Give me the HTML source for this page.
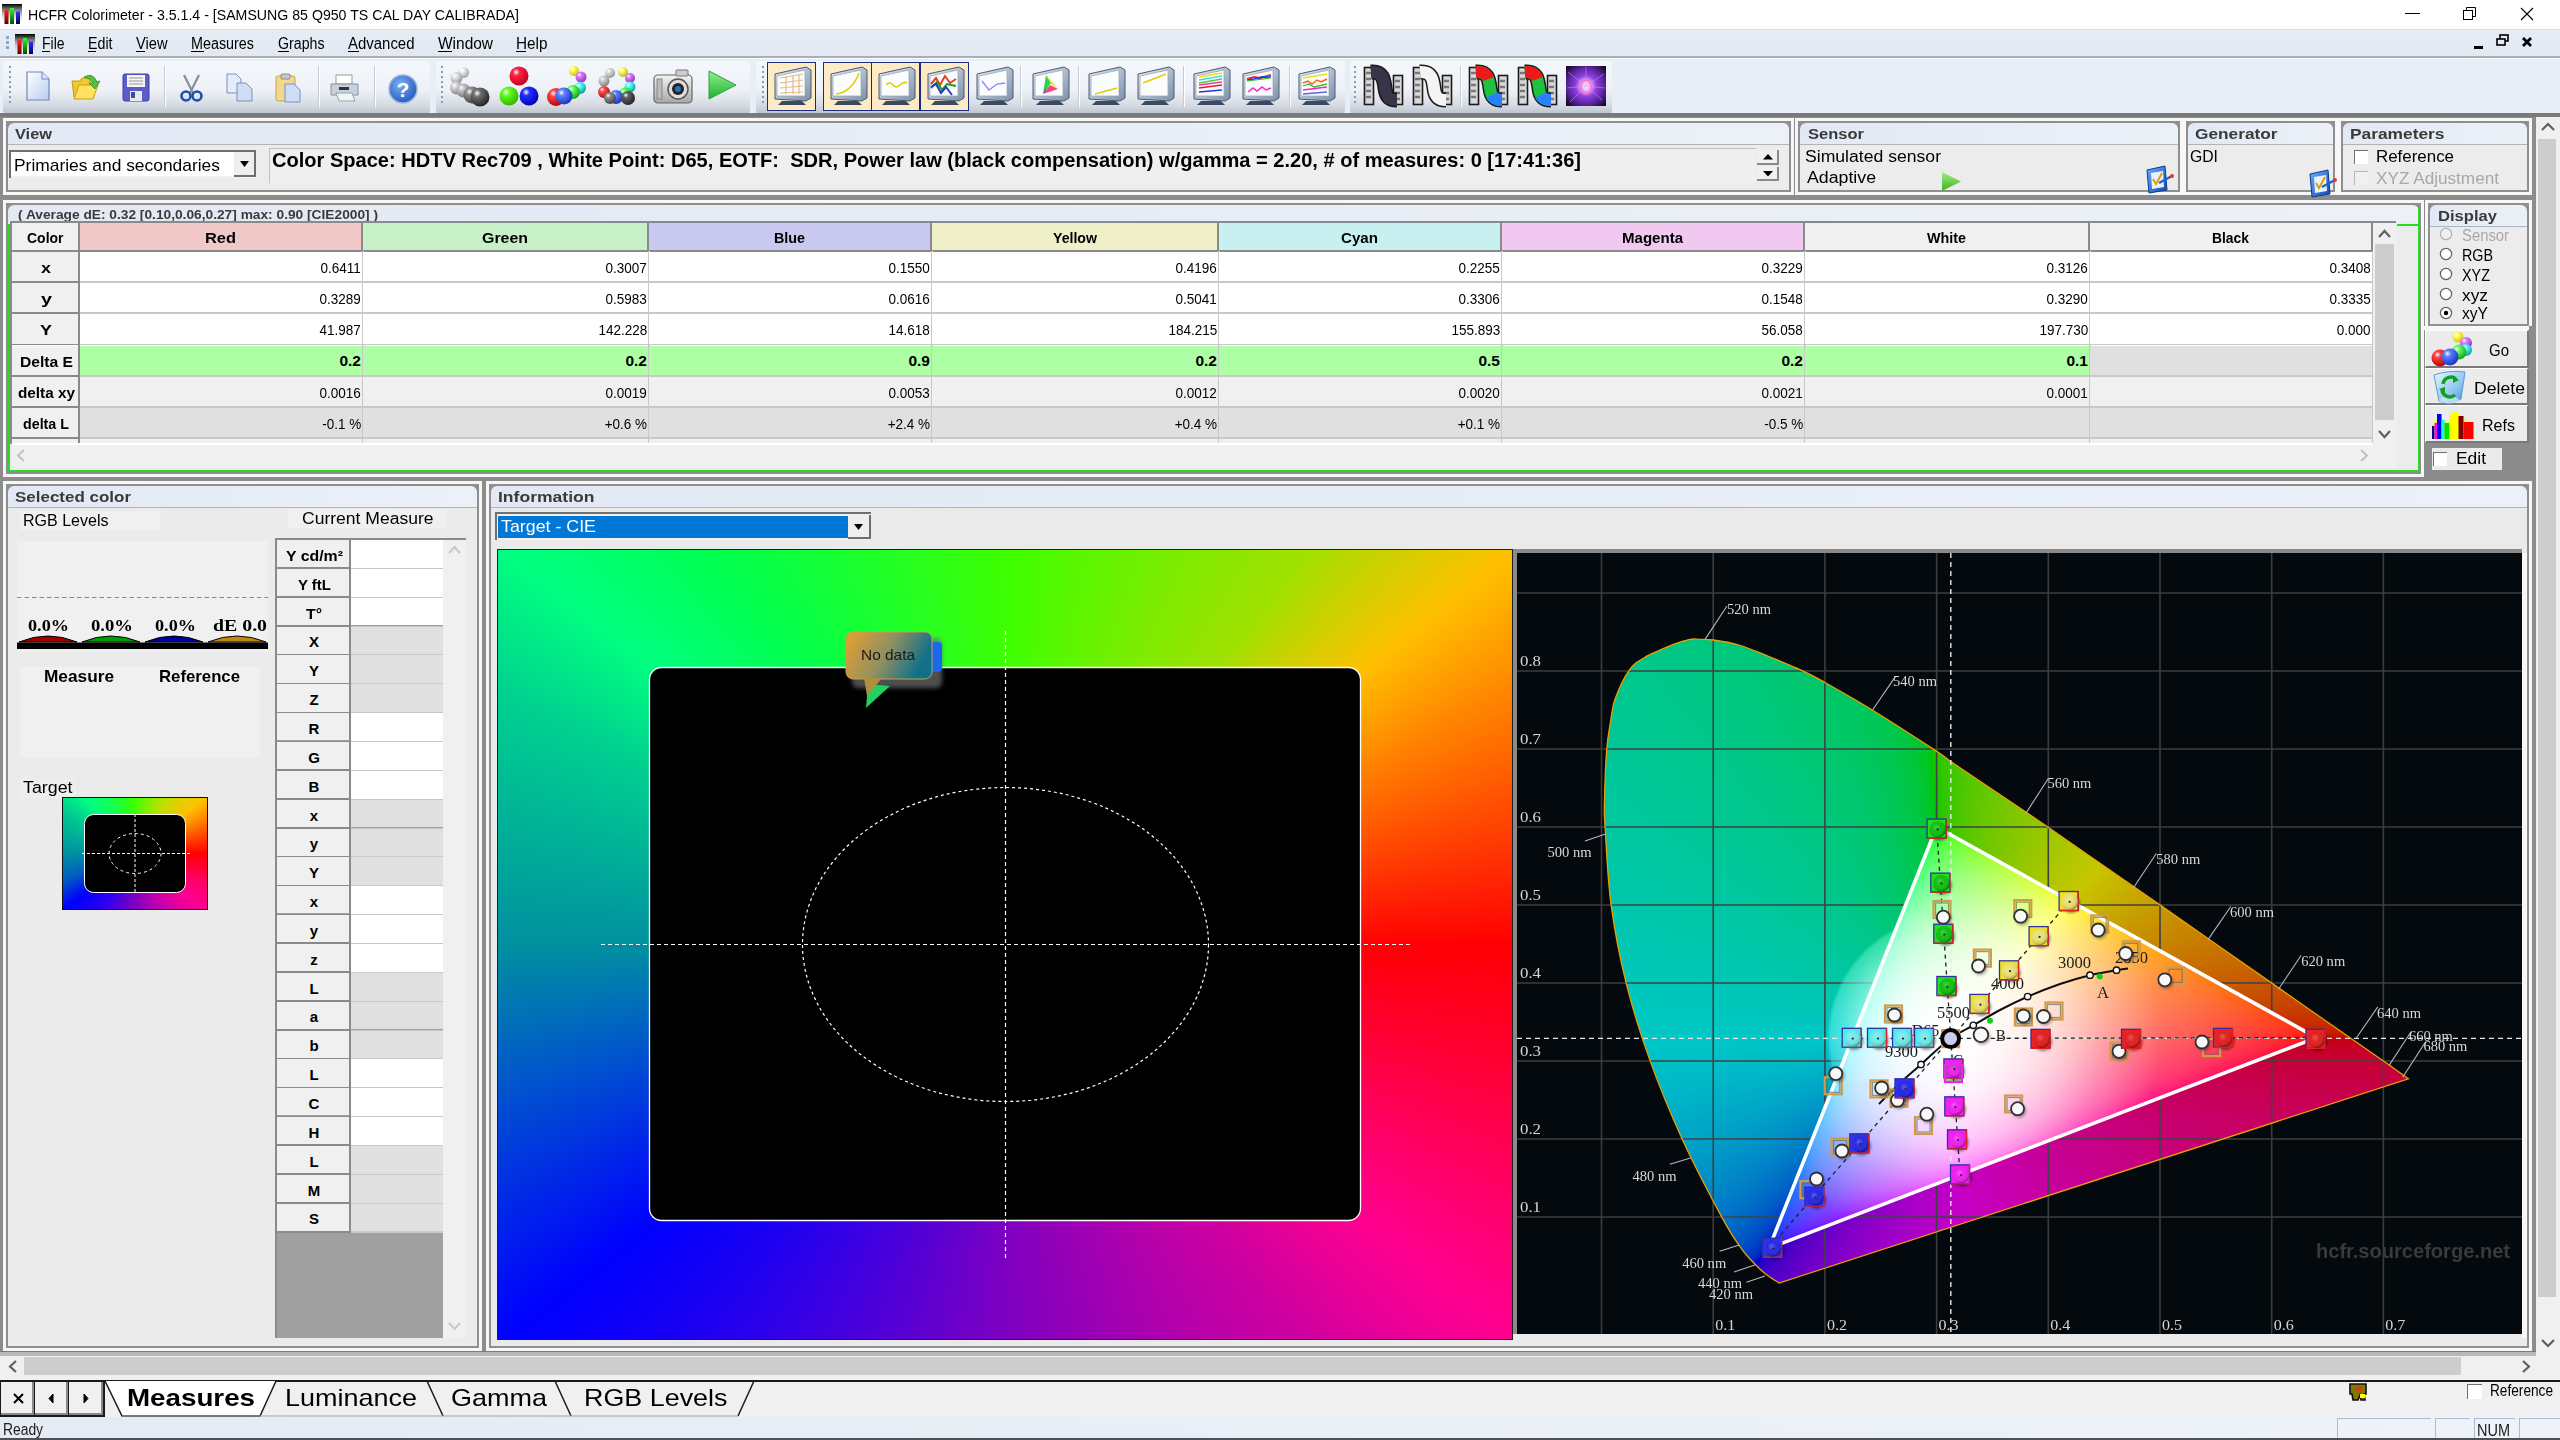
<!DOCTYPE html>
<html><head><meta charset="utf-8"><title>HCFR Colorimeter</title>
<style>
html,body{margin:0;padding:0;}
body{width:2560px;height:1440px;overflow:hidden;position:relative;background:#F0F0F0;font-family:"Liberation Sans",sans-serif;}
.a{position:absolute;}
.t{position:absolute;white-space:nowrap;line-height:1;}
svg.a{overflow:visible;}
</style></head><body>
<div class="a" style="left:0px;top:0px;width:2560px;height:29px;background:#FFFFFF;"></div>
<svg class="a" style="left:2px;top:4px" width="20" height="20" viewBox="0 0 20 20"><defs><linearGradient id="aig2" x1="0" y1="0" x2="0" y2="1"><stop offset="0" stop-color="#000"/><stop offset="1" stop-color="#fff" stop-opacity="0.0"/></linearGradient><linearGradient id="air2" x1="0" y1="0" x2="0" y2="1"><stop offset="0" stop-color="#ff2020"/><stop offset="1" stop-color="#600000"/></linearGradient><linearGradient id="aigg2" x1="0" y1="0" x2="0" y2="1"><stop offset="0" stop-color="#30ff30"/><stop offset="1" stop-color="#005000"/></linearGradient><linearGradient id="aib2" x1="0" y1="0" x2="0" y2="1"><stop offset="0" stop-color="#3030ff"/><stop offset="1" stop-color="#000060"/></linearGradient></defs><rect x="0" y="0" width="20" height="20" fill="url(#aig2)"/><rect x="2.5" y="6" width="4" height="14" fill="url(#air2)"/><rect x="8" y="4" width="4" height="16" fill="url(#aigg2)"/><rect x="14" y="7.5" width="4" height="12.5" fill="url(#aib2)"/></svg>
<div id="t1" class="t" style="left:27.5px;top:7.3px;font-size:15.00px;color:#000;font-weight:normal;font-family:'Liberation Sans', sans-serif;transform:scaleX(0.9434);transform-origin:left;">HCFR Colorimeter - 3.5.1.4 - [SAMSUNG 85 Q950 TS CAL DAY CALIBRADA]</div>
<svg class="a" style="left:2390px;top:0px" width="170" height="29"><line x1="15" y1="13.5" x2="30" y2="13.5" stroke="#000" stroke-width="1"/><rect x="73.5" y="10.5" width="9" height="9" fill="none" stroke="#000"/><path d="M76.5 10.5 V7.5 H85.5 V16.5 H82.5" fill="none" stroke="#000"/><path d="M131 8 L143 20 M143 8 L131 20" stroke="#000" stroke-width="1.1"/></svg>
<div class="a" style="left:0px;top:29px;width:2560px;height:28px;background:linear-gradient(#E6ECF5,#E3E9F3);"></div>
<div class="a" style="left:0px;top:29px;width:2560px;height:1px;background:#D5DCE6;"></div>
<div class="a" style="left:0px;top:56px;width:2560px;height:2px;background:#A9AFB8;"></div>
<div class="a" style="left:0px;top:58px;width:2560px;height:1px;background:#FFFFFF;"></div>
<div class="a" style="left:6px;top:36px;width:3px;height:3px;background:#8FA6C4;"></div>
<div class="a" style="left:6px;top:41px;width:3px;height:3px;background:#8FA6C4;"></div>
<div class="a" style="left:6px;top:46px;width:3px;height:3px;background:#8FA6C4;"></div>
<svg class="a" style="left:15px;top:34px" width="20" height="20" viewBox="0 0 20 20"><defs><linearGradient id="aig15" x1="0" y1="0" x2="0" y2="1"><stop offset="0" stop-color="#000"/><stop offset="1" stop-color="#fff" stop-opacity="0.0"/></linearGradient><linearGradient id="air15" x1="0" y1="0" x2="0" y2="1"><stop offset="0" stop-color="#ff2020"/><stop offset="1" stop-color="#600000"/></linearGradient><linearGradient id="aigg15" x1="0" y1="0" x2="0" y2="1"><stop offset="0" stop-color="#30ff30"/><stop offset="1" stop-color="#005000"/></linearGradient><linearGradient id="aib15" x1="0" y1="0" x2="0" y2="1"><stop offset="0" stop-color="#3030ff"/><stop offset="1" stop-color="#000060"/></linearGradient></defs><rect x="0" y="0" width="20" height="20" fill="url(#aig15)"/><rect x="2.5" y="6" width="4" height="14" fill="url(#air15)"/><rect x="8" y="4" width="4" height="16" fill="url(#aigg15)"/><rect x="14" y="7.5" width="4" height="12.5" fill="url(#aib15)"/></svg>
<div id="t2" class="t" style="left:41.5px;top:36.0px;font-size:16.00px;color:#000;font-weight:normal;font-family:'Liberation Sans', sans-serif;transform:scaleX(0.8727);transform-origin:left;">File</div>
<div class="a" style="left:41.5px;top:50.5px;width:8.0px;height:1.5px;background:#000;"></div>
<div id="t3" class="t" style="left:88.0px;top:36.0px;font-size:16.00px;color:#000;font-weight:normal;font-family:'Liberation Sans', sans-serif;transform:scaleX(0.8884);transform-origin:left;">Edit</div>
<div class="a" style="left:88px;top:50.5px;width:8px;height:1.5px;background:#000;"></div>
<div id="t4" class="t" style="left:136.0px;top:36.0px;font-size:16.00px;color:#000;font-weight:normal;font-family:'Liberation Sans', sans-serif;transform:scaleX(0.9159);transform-origin:left;">View</div>
<div class="a" style="left:136px;top:50.5px;width:9px;height:1.5px;background:#000;"></div>
<div id="t5" class="t" style="left:191.0px;top:36.0px;font-size:16.00px;color:#000;font-weight:normal;font-family:'Liberation Sans', sans-serif;transform:scaleX(0.8968);transform-origin:left;">Measures</div>
<div class="a" style="left:191px;top:50.5px;width:13px;height:1.5px;background:#000;"></div>
<div id="t6" class="t" style="left:277.5px;top:36.0px;font-size:16.00px;color:#000;font-weight:normal;font-family:'Liberation Sans', sans-serif;transform:scaleX(0.8862);transform-origin:left;">Graphs</div>
<div class="a" style="left:277.5px;top:50.5px;width:11.0px;height:1.5px;background:#000;"></div>
<div id="t7" class="t" style="left:347.5px;top:36.0px;font-size:16.00px;color:#000;font-weight:normal;font-family:'Liberation Sans', sans-serif;transform:scaleX(0.9344);transform-origin:left;">Advanced</div>
<div class="a" style="left:347.5px;top:50.5px;width:11.0px;height:1.5px;background:#000;"></div>
<div id="t8" class="t" style="left:437.5px;top:36.0px;font-size:16.00px;color:#000;font-weight:normal;font-family:'Liberation Sans', sans-serif;transform:scaleX(0.9665);transform-origin:left;">Window</div>
<div class="a" style="left:437.5px;top:50.5px;width:14.0px;height:1.5px;background:#000;"></div>
<div id="t9" class="t" style="left:516.0px;top:36.0px;font-size:16.00px;color:#000;font-weight:normal;font-family:'Liberation Sans', sans-serif;transform:scaleX(0.9573);transform-origin:left;">Help</div>
<div class="a" style="left:516px;top:50.5px;width:10px;height:1.5px;background:#000;"></div>
<svg class="a" style="left:2460px;top:30px" width="100" height="27"><rect x="14" y="16" width="9" height="3" fill="#000"/><rect x="40" y="5" width="8" height="6" fill="none" stroke="#000" stroke-width="1.6"/><rect x="37" y="9" width="8" height="6" fill="#E6ECF5" stroke="#000" stroke-width="1.6"/><path d="M63 8 L71 16 M71 8 L63 16" stroke="#000" stroke-width="2.8"/></svg>
<div class="a" style="left:0px;top:59px;width:2560px;height:54px;background:#E8EDF6;"></div>
<div class="a" style="left:3px;top:61px;width:427px;height:52px;background:linear-gradient(#F4F7FB 0%,#EEF2F8 55%,#D6DBE3 85%,#BFC6D0 100%);border-radius:4px 4px 2px 2px;"></div>
<div class="a" style="left:436px;top:61px;width:314px;height:52px;background:linear-gradient(#F4F7FB 0%,#EEF2F8 55%,#D6DBE3 85%,#BFC6D0 100%);border-radius:4px 4px 2px 2px;"></div>
<div class="a" style="left:756px;top:61px;width:589px;height:52px;background:linear-gradient(#F4F7FB 0%,#EEF2F8 55%,#D6DBE3 85%,#BFC6D0 100%);border-radius:4px 4px 2px 2px;"></div>
<div class="a" style="left:1350px;top:61px;width:262px;height:52px;background:linear-gradient(#F4F7FB 0%,#EEF2F8 55%,#D6DBE3 85%,#BFC6D0 100%);border-radius:4px 4px 2px 2px;"></div>
<div class="a" style="left:9px;top:66px;width:2px;height:2px;background:#7F9DBF;"></div>
<div class="a" style="left:9px;top:71px;width:2px;height:2px;background:#7F9DBF;"></div>
<div class="a" style="left:9px;top:76px;width:2px;height:2px;background:#7F9DBF;"></div>
<div class="a" style="left:9px;top:81px;width:2px;height:2px;background:#7F9DBF;"></div>
<div class="a" style="left:9px;top:86px;width:2px;height:2px;background:#7F9DBF;"></div>
<div class="a" style="left:9px;top:91px;width:2px;height:2px;background:#7F9DBF;"></div>
<div class="a" style="left:9px;top:96px;width:2px;height:2px;background:#7F9DBF;"></div>
<div class="a" style="left:9px;top:101px;width:2px;height:2px;background:#7F9DBF;"></div>
<div class="a" style="left:441px;top:66px;width:2px;height:2px;background:#7F9DBF;"></div>
<div class="a" style="left:441px;top:71px;width:2px;height:2px;background:#7F9DBF;"></div>
<div class="a" style="left:441px;top:76px;width:2px;height:2px;background:#7F9DBF;"></div>
<div class="a" style="left:441px;top:81px;width:2px;height:2px;background:#7F9DBF;"></div>
<div class="a" style="left:441px;top:86px;width:2px;height:2px;background:#7F9DBF;"></div>
<div class="a" style="left:441px;top:91px;width:2px;height:2px;background:#7F9DBF;"></div>
<div class="a" style="left:441px;top:96px;width:2px;height:2px;background:#7F9DBF;"></div>
<div class="a" style="left:441px;top:101px;width:2px;height:2px;background:#7F9DBF;"></div>
<div class="a" style="left:762px;top:66px;width:2px;height:2px;background:#7F9DBF;"></div>
<div class="a" style="left:762px;top:71px;width:2px;height:2px;background:#7F9DBF;"></div>
<div class="a" style="left:762px;top:76px;width:2px;height:2px;background:#7F9DBF;"></div>
<div class="a" style="left:762px;top:81px;width:2px;height:2px;background:#7F9DBF;"></div>
<div class="a" style="left:762px;top:86px;width:2px;height:2px;background:#7F9DBF;"></div>
<div class="a" style="left:762px;top:91px;width:2px;height:2px;background:#7F9DBF;"></div>
<div class="a" style="left:762px;top:96px;width:2px;height:2px;background:#7F9DBF;"></div>
<div class="a" style="left:762px;top:101px;width:2px;height:2px;background:#7F9DBF;"></div>
<div class="a" style="left:1354px;top:66px;width:2px;height:2px;background:#7F9DBF;"></div>
<div class="a" style="left:1354px;top:71px;width:2px;height:2px;background:#7F9DBF;"></div>
<div class="a" style="left:1354px;top:76px;width:2px;height:2px;background:#7F9DBF;"></div>
<div class="a" style="left:1354px;top:81px;width:2px;height:2px;background:#7F9DBF;"></div>
<div class="a" style="left:1354px;top:86px;width:2px;height:2px;background:#7F9DBF;"></div>
<div class="a" style="left:1354px;top:91px;width:2px;height:2px;background:#7F9DBF;"></div>
<div class="a" style="left:1354px;top:96px;width:2px;height:2px;background:#7F9DBF;"></div>
<div class="a" style="left:1354px;top:101px;width:2px;height:2px;background:#7F9DBF;"></div>
<div class="a" style="left:164px;top:66px;width:1px;height:41px;background:#C5CBD5;"></div>
<div class="a" style="left:165px;top:66px;width:1px;height:41px;background:#FFFFFF;"></div>
<div class="a" style="left:318px;top:66px;width:1px;height:41px;background:#C5CBD5;"></div>
<div class="a" style="left:319px;top:66px;width:1px;height:41px;background:#FFFFFF;"></div>
<div class="a" style="left:374px;top:66px;width:1px;height:41px;background:#C5CBD5;"></div>
<div class="a" style="left:375px;top:66px;width:1px;height:41px;background:#FFFFFF;"></div>
<div class="a" style="left:1020px;top:66px;width:1px;height:41px;background:#C5CBD5;"></div>
<div class="a" style="left:1021px;top:66px;width:1px;height:41px;background:#FFFFFF;"></div>
<div class="a" style="left:1078px;top:66px;width:1px;height:41px;background:#C5CBD5;"></div>
<div class="a" style="left:1079px;top:66px;width:1px;height:41px;background:#FFFFFF;"></div>
<div class="a" style="left:1183px;top:66px;width:1px;height:41px;background:#C5CBD5;"></div>
<div class="a" style="left:1184px;top:66px;width:1px;height:41px;background:#FFFFFF;"></div>
<div class="a" style="left:1289px;top:66px;width:1px;height:41px;background:#C5CBD5;"></div>
<div class="a" style="left:1290px;top:66px;width:1px;height:41px;background:#FFFFFF;"></div>
<div class="a" style="left:1460px;top:66px;width:1px;height:41px;background:#C5CBD5;"></div>
<div class="a" style="left:1461px;top:66px;width:1px;height:41px;background:#FFFFFF;"></div>
<svg class="a" style="left:26px;top:71px;" width="24" height="30" viewBox="0 0 24 30"><defs><linearGradient id="ndg" x1="0" y1="0" x2="1" y2="1"><stop offset="0" stop-color="#fff"/><stop offset="1" stop-color="#b8ccf0"/></linearGradient></defs><path d="M1 1 H16 L23 8 V29 H1 Z" fill="url(#ndg)" stroke="#7088b8" stroke-width="1.2"/><path d="M16 1 V8 H23" fill="#dfe8f8" stroke="#7088b8" stroke-width="1"/></svg>
<svg class="a" style="left:71px;top:73px;" width="31" height="28" viewBox="0 0 31 28"><path d="M1 8 H9 L11 5 H19 V24 H3 Z" fill="#f0c830" stroke="#c89a10"/><path d="M3 26 L8 12 H27 L22 26 Z" fill="#ffe060" stroke="#d0a010"/><path d="M13 4 Q22 -1 26 9 L29 8 L24 16 L18 10 L22 10 Q19 5 13 4 Z" fill="#50c040" stroke="#309020" stroke-width="0.8"/></svg>
<svg class="a" style="left:122px;top:73px;" width="28" height="30" viewBox="0 0 28 30"><rect x="1" y="1" width="26" height="27" rx="2" fill="#5a5ec8" stroke="#3c40a0"/><rect x="5" y="2" width="18" height="12" fill="#f4f4f4"/><line x1="7" y1="5" x2="21" y2="5" stroke="#999"/><line x1="7" y1="8" x2="21" y2="8" stroke="#999"/><line x1="7" y1="11" x2="21" y2="11" stroke="#999"/><rect x="8" y="18" width="12" height="10" fill="#e8e8e8"/><rect x="9" y="19" width="4" height="6" fill="#4048a8"/></svg>
<svg class="a" style="left:180px;top:74px;" width="23" height="28" viewBox="0 0 23 28"><path d="M4 1 L13 19 M19 1 L10 19" stroke="#8a8f9a" stroke-width="2.2"/><circle cx="6" cy="22" r="4.5" fill="none" stroke="#1a4fb0" stroke-width="2.6"/><circle cx="17" cy="22" r="4.5" fill="none" stroke="#1a4fb0" stroke-width="2.6"/></svg>
<svg class="a" style="left:226px;top:73px;" width="28" height="30" viewBox="0 0 28 30"><path d="M1 1 H10 L15 6 V20 H1 Z" fill="#e4ecfa" stroke="#7a90c0"/><path d="M11 10 H20 L26 16 V28 H11 Z" fill="#cfdcf6" stroke="#7a90c0"/></svg>
<svg class="a" style="left:275px;top:73px;" width="27" height="30" viewBox="0 0 27 30"><rect x="1" y="3" width="19" height="25" rx="2" fill="#f0d890" stroke="#c8a840"/><rect x="6" y="1" width="9" height="5" rx="1" fill="#c8c8c8" stroke="#888"/><path d="M10 11 H19 L25 17 V29 H10 Z" fill="#cfdcf6" stroke="#7a90c0"/></svg>
<svg class="a" style="left:329px;top:74px;" width="31" height="28" viewBox="0 0 31 28"><rect x="7" y="1" width="16" height="9" fill="#fff" stroke="#999"/><path d="M2 10 H29 V21 H2 Z" fill="#c8d0dc" stroke="#8890a0"/><rect x="10" y="13" width="10" height="3" fill="#333"/><path d="M7 19 H23 L26 27 H10 Z" fill="#f4f4f4" stroke="#8ab"/></svg>
<svg class="a" style="left:388px;top:74px;" width="31" height="30" viewBox="0 0 31 30"><defs><radialGradient id="hg" cx="0.4" cy="0.35" r="0.7"><stop offset="0" stop-color="#7ab0f0"/><stop offset="1" stop-color="#1f58c0"/></radialGradient></defs><circle cx="15" cy="15" r="14" fill="url(#hg)" stroke="#9fb4d8" stroke-width="1.5"/><text x="15" y="23" text-anchor="middle" font-family="Liberation Sans" font-weight="bold" font-size="21" fill="#fff">?</text></svg>
<svg class="a" style="left:449px;top:66px;" width="41" height="40" viewBox="0 0 41 40"><defs><radialGradient id="ball1" cx="0.35" cy="0.3" r="0.75"><stop offset="0" stop-color="#fff"/><stop offset="0.25" stop-color="#f0f0f0"/><stop offset="1" stop-color="#a0a0a0"/></radialGradient></defs><circle cx="14.5" cy="6.5" r="5.5" fill="url(#ball1)"/><defs><radialGradient id="ball2" cx="0.35" cy="0.3" r="0.75"><stop offset="0" stop-color="#fff"/><stop offset="0.25" stop-color="#e8e8e8"/><stop offset="1" stop-color="#909090"/></radialGradient></defs><circle cx="7.5" cy="12" r="6" fill="url(#ball2)"/><defs><radialGradient id="ball3" cx="0.35" cy="0.3" r="0.75"><stop offset="0" stop-color="#fff"/><stop offset="0.25" stop-color="#d8d8d8"/><stop offset="1" stop-color="#808080"/></radialGradient></defs><circle cx="7.5" cy="22" r="6.5" fill="url(#ball3)"/><defs><radialGradient id="ball4" cx="0.35" cy="0.3" r="0.75"><stop offset="0" stop-color="#fff"/><stop offset="0.25" stop-color="#c8c8c8"/><stop offset="1" stop-color="#707070"/></radialGradient></defs><circle cx="14.5" cy="24.5" r="7" fill="url(#ball4)"/><defs><radialGradient id="ball5" cx="0.35" cy="0.3" r="0.75"><stop offset="0" stop-color="#fff"/><stop offset="0.25" stop-color="#909090"/><stop offset="1" stop-color="#404040"/></radialGradient></defs><circle cx="23" cy="29" r="8.5" fill="url(#ball5)"/><defs><radialGradient id="ball6" cx="0.35" cy="0.3" r="0.75"><stop offset="0" stop-color="#fff"/><stop offset="0.25" stop-color="#707070"/><stop offset="1" stop-color="#202020"/></radialGradient></defs><circle cx="31" cy="31" r="9.5" fill="url(#ball6)"/></svg>
<svg class="a" style="left:498px;top:66px;" width="41" height="40" viewBox="0 0 41 40"><defs><radialGradient id="ball7" cx="0.35" cy="0.3" r="0.75"><stop offset="0" stop-color="#fff"/><stop offset="0.25" stop-color="#ff2040"/><stop offset="1" stop-color="#c00020"/></radialGradient></defs><circle cx="21" cy="10" r="9.5" fill="url(#ball7)"/><defs><radialGradient id="ball8" cx="0.35" cy="0.3" r="0.75"><stop offset="0" stop-color="#fff"/><stop offset="0.25" stop-color="#60ff20"/><stop offset="1" stop-color="#30b000"/></radialGradient></defs><circle cx="11" cy="30" r="9.5" fill="url(#ball8)"/><defs><radialGradient id="ball9" cx="0.35" cy="0.3" r="0.75"><stop offset="0" stop-color="#fff"/><stop offset="0.25" stop-color="#2030ff"/><stop offset="1" stop-color="#0000b0"/></radialGradient></defs><circle cx="31" cy="30" r="9.5" fill="url(#ball9)"/></svg>
<svg class="a" style="left:547px;top:66px;" width="41" height="40" viewBox="0 0 41 40"><defs><radialGradient id="ball10" cx="0.35" cy="0.3" r="0.75"><stop offset="0" stop-color="#fff"/><stop offset="0.25" stop-color="#ffff60"/><stop offset="1" stop-color="#d0c000"/></radialGradient></defs><circle cx="27" cy="5" r="5" fill="url(#ball10)"/><defs><radialGradient id="ball11" cx="0.35" cy="0.3" r="0.75"><stop offset="0" stop-color="#fff"/><stop offset="0.25" stop-color="#e080ff"/><stop offset="1" stop-color="#9030c0"/></radialGradient></defs><circle cx="34" cy="11" r="5.5" fill="url(#ball11)"/><defs><radialGradient id="ball12" cx="0.35" cy="0.3" r="0.75"><stop offset="0" stop-color="#fff"/><stop offset="0.25" stop-color="#60ffff"/><stop offset="1" stop-color="#00a0a0"/></radialGradient></defs><circle cx="33" cy="22" r="6" fill="url(#ball12)"/><defs><radialGradient id="ball13" cx="0.35" cy="0.3" r="0.75"><stop offset="0" stop-color="#fff"/><stop offset="0.25" stop-color="#60ff60"/><stop offset="1" stop-color="#10a010"/></radialGradient></defs><circle cx="26" cy="26" r="7" fill="url(#ball13)"/><defs><radialGradient id="ball14" cx="0.35" cy="0.3" r="0.75"><stop offset="0" stop-color="#fff"/><stop offset="0.25" stop-color="#ff4040"/><stop offset="1" stop-color="#b00000"/></radialGradient></defs><circle cx="9" cy="31" r="9" fill="url(#ball14)"/><defs><radialGradient id="ball15" cx="0.35" cy="0.3" r="0.75"><stop offset="0" stop-color="#fff"/><stop offset="0.25" stop-color="#6080ff"/><stop offset="1" stop-color="#1030c0"/></radialGradient></defs><circle cx="17" cy="30" r="8.5" fill="url(#ball15)"/></svg>
<svg class="a" style="left:596px;top:66px;" width="41" height="40" viewBox="0 0 41 40"><defs><radialGradient id="ball16" cx="0.35" cy="0.3" r="0.75"><stop offset="0" stop-color="#fff"/><stop offset="0.25" stop-color="#e0e0e0"/><stop offset="1" stop-color="#909090"/></radialGradient></defs><circle cx="14" cy="7" r="5" fill="url(#ball16)"/><defs><radialGradient id="ball17" cx="0.35" cy="0.3" r="0.75"><stop offset="0" stop-color="#fff"/><stop offset="0.25" stop-color="#ffff80"/><stop offset="1" stop-color="#c0b000"/></radialGradient></defs><circle cx="27" cy="6" r="5" fill="url(#ball17)"/><defs><radialGradient id="ball18" cx="0.35" cy="0.3" r="0.75"><stop offset="0" stop-color="#fff"/><stop offset="0.25" stop-color="#e080ff"/><stop offset="1" stop-color="#9030c0"/></radialGradient></defs><circle cx="34" cy="12" r="5" fill="url(#ball18)"/><defs><radialGradient id="ball19" cx="0.35" cy="0.3" r="0.75"><stop offset="0" stop-color="#fff"/><stop offset="0.25" stop-color="#60ffff"/><stop offset="1" stop-color="#00a0a0"/></radialGradient></defs><circle cx="34" cy="21" r="5.5" fill="url(#ball19)"/><defs><radialGradient id="ball20" cx="0.35" cy="0.3" r="0.75"><stop offset="0" stop-color="#fff"/><stop offset="0.25" stop-color="#d0d0d0"/><stop offset="1" stop-color="#808080"/></radialGradient></defs><circle cx="8" cy="15" r="5.5" fill="url(#ball20)"/><defs><radialGradient id="ball21" cx="0.35" cy="0.3" r="0.75"><stop offset="0" stop-color="#fff"/><stop offset="0.25" stop-color="#ff5050"/><stop offset="1" stop-color="#b00000"/></radialGradient></defs><circle cx="8" cy="26" r="6" fill="url(#ball21)"/><defs><radialGradient id="ball22" cx="0.35" cy="0.3" r="0.75"><stop offset="0" stop-color="#fff"/><stop offset="0.25" stop-color="#60ff60"/><stop offset="1" stop-color="#10a010"/></radialGradient></defs><circle cx="29" cy="28" r="6.5" fill="url(#ball22)"/><defs><radialGradient id="ball23" cx="0.35" cy="0.3" r="0.75"><stop offset="0" stop-color="#fff"/><stop offset="0.25" stop-color="#6080ff"/><stop offset="1" stop-color="#1030c0"/></radialGradient></defs><circle cx="20" cy="31" r="7" fill="url(#ball23)"/><defs><radialGradient id="ball24" cx="0.35" cy="0.3" r="0.75"><stop offset="0" stop-color="#fff"/><stop offset="0.25" stop-color="#606060"/><stop offset="1" stop-color="#202020"/></radialGradient></defs><circle cx="32" cy="32" r="7" fill="url(#ball24)"/><defs><radialGradient id="ball25" cx="0.35" cy="0.3" r="0.75"><stop offset="0" stop-color="#fff"/><stop offset="0.25" stop-color="#909090"/><stop offset="1" stop-color="#404040"/></radialGradient></defs><circle cx="14" cy="32" r="6" fill="url(#ball25)"/></svg>
<svg class="a" style="left:652px;top:67px;" width="42" height="39" viewBox="0 0 42 39"><defs><linearGradient id="camg" x1="0" y1="0" x2="0" y2="1"><stop offset="0" stop-color="#f4f4f4"/><stop offset="1" stop-color="#a8a8a8"/></linearGradient></defs><rect x="2" y="8" width="38" height="28" rx="4" fill="url(#camg)" stroke="#666" stroke-width="1.2"/><rect x="24" y="3" width="12" height="6" rx="1" fill="#ccc" stroke="#777"/><circle cx="26" cy="22" r="10" fill="#ddd" stroke="#555" stroke-width="1.5"/><circle cx="26" cy="22" r="6" fill="#222"/><circle cx="26" cy="22" r="3" fill="#2a6fd0"/><rect x="5" y="12" width="5" height="20" fill="#bbb" stroke="#888"/></svg>
<svg class="a" style="left:707px;top:69px;" width="31" height="32" viewBox="0 0 31 32"><defs><linearGradient id="plg" x1="0" y1="0" x2="0" y2="1"><stop offset="0" stop-color="#8ff08f"/><stop offset="1" stop-color="#20b030"/></linearGradient></defs><path d="M2 2 L29 16 L2 30 Z" fill="url(#plg)" stroke="#30a040" stroke-width="1"/></svg>
<div class="a" style="left:767px;top:62px;width:49px;height:49px;background:#FDEBC6;border:1.5px solid #1c2a80;box-sizing:border-box;"></div>
<svg class="a" style="left:772px;top:66px;" width="40" height="40" viewBox="0 0 40 40"><defs><linearGradient id="mg772" x1="0" y1="0" x2="1" y2="1"><stop offset="0" stop-color="#e8eef6"/><stop offset="1" stop-color="#7a8fa8"/></linearGradient></defs><path d="M3 8 L34 1 L39 4 L39 32 L34 35 L3 33 Z" fill="url(#mg772)" stroke="#4a5a70" stroke-width="1"/><path d="M5 10 L33 4 L33 30 L5 30 Z" fill="#fbfcfe" stroke="#9aa8b8" stroke-width="0.8"/><path d="M10 35 L30 35 L34 39 L6 39 Z" fill="#3a4a60"/><path d="M8 12 L31 8 M8 17 L31 14 M8 22 L31 20 M8 27 L31 26 M14 11 V28 M21 10 V28 M27 9 V28" stroke="#e8b880" stroke-width="1.2"/></svg>
<div class="a" style="left:823px;top:62px;width:49px;height:49px;background:#FDEBC6;border:1.5px solid #1c2a80;box-sizing:border-box;"></div>
<svg class="a" style="left:828px;top:66px;" width="40" height="40" viewBox="0 0 40 40"><defs><linearGradient id="mg828" x1="0" y1="0" x2="1" y2="1"><stop offset="0" stop-color="#e8eef6"/><stop offset="1" stop-color="#7a8fa8"/></linearGradient></defs><path d="M3 8 L34 1 L39 4 L39 32 L34 35 L3 33 Z" fill="url(#mg828)" stroke="#4a5a70" stroke-width="1"/><path d="M5 10 L33 4 L33 30 L5 30 Z" fill="#fbfcfe" stroke="#9aa8b8" stroke-width="0.8"/><path d="M10 35 L30 35 L34 39 L6 39 Z" fill="#3a4a60"/><path d="M8 28 Q24 26 31 7" stroke="#e0d000" stroke-width="1.6" fill="none"/></svg>
<div class="a" style="left:871px;top:62px;width:49px;height:49px;background:#FDEBC6;border:1.5px solid #1c2a80;box-sizing:border-box;"></div>
<svg class="a" style="left:876px;top:66px;" width="40" height="40" viewBox="0 0 40 40"><defs><linearGradient id="mg876" x1="0" y1="0" x2="1" y2="1"><stop offset="0" stop-color="#e8eef6"/><stop offset="1" stop-color="#7a8fa8"/></linearGradient></defs><path d="M3 8 L34 1 L39 4 L39 32 L34 35 L3 33 Z" fill="url(#mg876)" stroke="#4a5a70" stroke-width="1"/><path d="M5 10 L33 4 L33 30 L5 30 Z" fill="#fbfcfe" stroke="#9aa8b8" stroke-width="0.8"/><path d="M10 35 L30 35 L34 39 L6 39 Z" fill="#3a4a60"/><path d="M10 19 Q14 15 17 19 T24 19 T31 17" stroke="#e0d000" stroke-width="1.6" fill="none"/></svg>
<div class="a" style="left:920px;top:62px;width:49px;height:49px;background:#FDEBC6;border:1.5px solid #1c2a80;box-sizing:border-box;"></div>
<svg class="a" style="left:925px;top:66px;" width="40" height="40" viewBox="0 0 40 40"><defs><linearGradient id="mg925" x1="0" y1="0" x2="1" y2="1"><stop offset="0" stop-color="#e8eef6"/><stop offset="1" stop-color="#7a8fa8"/></linearGradient></defs><path d="M3 8 L34 1 L39 4 L39 32 L34 35 L3 33 Z" fill="url(#mg925)" stroke="#4a5a70" stroke-width="1"/><path d="M5 10 L33 4 L33 30 L5 30 Z" fill="#fbfcfe" stroke="#9aa8b8" stroke-width="0.8"/><path d="M10 35 L30 35 L34 39 L6 39 Z" fill="#3a4a60"/><path d="M6 18 L11 12 L15 19 L20 10 L25 17 L31 13" stroke="#e04020" stroke-width="2" fill="none"/><path d="M6 22 L12 16 L17 24 L22 18 L31 20" stroke="#20a020" stroke-width="2" fill="none"/><path d="M6 21 L11 18 L16 27 L21 21 L27 29" stroke="#2040c0" stroke-width="2" fill="none"/></svg>
<svg class="a" style="left:974px;top:66px;" width="40" height="40" viewBox="0 0 40 40"><defs><linearGradient id="mg974" x1="0" y1="0" x2="1" y2="1"><stop offset="0" stop-color="#e8eef6"/><stop offset="1" stop-color="#7a8fa8"/></linearGradient></defs><path d="M3 8 L34 1 L39 4 L39 32 L34 35 L3 33 Z" fill="url(#mg974)" stroke="#4a5a70" stroke-width="1"/><path d="M5 10 L33 4 L33 30 L5 30 Z" fill="#fbfcfe" stroke="#9aa8b8" stroke-width="0.8"/><path d="M10 35 L30 35 L34 39 L6 39 Z" fill="#3a4a60"/><path d="M8 15 L15 24 L23 18 L31 17" stroke="#9a80f0" stroke-width="1.3" fill="none"/></svg>
<svg class="a" style="left:1030px;top:66px;" width="40" height="40" viewBox="0 0 40 40"><defs><linearGradient id="mg1030" x1="0" y1="0" x2="1" y2="1"><stop offset="0" stop-color="#e8eef6"/><stop offset="1" stop-color="#7a8fa8"/></linearGradient></defs><path d="M3 8 L34 1 L39 4 L39 32 L34 35 L3 33 Z" fill="url(#mg1030)" stroke="#4a5a70" stroke-width="1"/><path d="M5 10 L33 4 L33 30 L5 30 Z" fill="#fbfcfe" stroke="#9aa8b8" stroke-width="0.8"/><path d="M10 35 L30 35 L34 39 L6 39 Z" fill="#3a4a60"/><path d="M16 9 L28 23 L13 28 Z" fill="#ffffff"/><path d="M16 9 L21 17 L13 28 Z" fill="#10d040" opacity="0.9"/><path d="M16 9 L28 23 L21 18 Z" fill="#e0e000" opacity="0.9"/><path d="M28 23 L13 28 L20 19 Z" fill="#ff2060" opacity="0.85"/><path d="M13 28 L17 20 L15 26 Z" fill="#3030ff"/></svg>
<svg class="a" style="left:1086px;top:66px;" width="40" height="40" viewBox="0 0 40 40"><defs><linearGradient id="mg1086" x1="0" y1="0" x2="1" y2="1"><stop offset="0" stop-color="#e8eef6"/><stop offset="1" stop-color="#7a8fa8"/></linearGradient></defs><path d="M3 8 L34 1 L39 4 L39 32 L34 35 L3 33 Z" fill="url(#mg1086)" stroke="#4a5a70" stroke-width="1"/><path d="M5 10 L33 4 L33 30 L5 30 Z" fill="#fbfcfe" stroke="#9aa8b8" stroke-width="0.8"/><path d="M10 35 L30 35 L34 39 L6 39 Z" fill="#3a4a60"/><path d="M9 28 L31 22" stroke="#e0d000" stroke-width="1.6"/></svg>
<svg class="a" style="left:1135px;top:66px;" width="40" height="40" viewBox="0 0 40 40"><defs><linearGradient id="mg1135" x1="0" y1="0" x2="1" y2="1"><stop offset="0" stop-color="#e8eef6"/><stop offset="1" stop-color="#7a8fa8"/></linearGradient></defs><path d="M3 8 L34 1 L39 4 L39 32 L34 35 L3 33 Z" fill="url(#mg1135)" stroke="#4a5a70" stroke-width="1"/><path d="M5 10 L33 4 L33 30 L5 30 Z" fill="#fbfcfe" stroke="#9aa8b8" stroke-width="0.8"/><path d="M10 35 L30 35 L34 39 L6 39 Z" fill="#3a4a60"/><path d="M8 17 L31 8" stroke="#e0d000" stroke-width="1.6"/></svg>
<svg class="a" style="left:1191px;top:66px;" width="40" height="40" viewBox="0 0 40 40"><defs><linearGradient id="mg1191" x1="0" y1="0" x2="1" y2="1"><stop offset="0" stop-color="#e8eef6"/><stop offset="1" stop-color="#7a8fa8"/></linearGradient></defs><path d="M3 8 L34 1 L39 4 L39 32 L34 35 L3 33 Z" fill="url(#mg1191)" stroke="#4a5a70" stroke-width="1"/><path d="M5 10 L33 4 L33 30 L5 30 Z" fill="#fbfcfe" stroke="#9aa8b8" stroke-width="0.8"/><path d="M10 35 L30 35 L34 39 L6 39 Z" fill="#3a4a60"/><path d="M8 11 L31 7" stroke="#f0e000" stroke-width="1.4"/><path d="M8 14 L31 10" stroke="#30e0f0" stroke-width="1.4"/><path d="M8 19 L31 16" stroke="#ff30a0" stroke-width="1.4"/><path d="M8 22 L31 19" stroke="#e02020" stroke-width="1.4"/><path d="M8 26 L31 24" stroke="#3030e0" stroke-width="1.4"/><path d="M8 17 L31 13" stroke="#40d040" stroke-width="1.4"/></svg>
<svg class="a" style="left:1240px;top:66px;" width="40" height="40" viewBox="0 0 40 40"><defs><linearGradient id="mg1240" x1="0" y1="0" x2="1" y2="1"><stop offset="0" stop-color="#e8eef6"/><stop offset="1" stop-color="#7a8fa8"/></linearGradient></defs><path d="M3 8 L34 1 L39 4 L39 32 L34 35 L3 33 Z" fill="url(#mg1240)" stroke="#4a5a70" stroke-width="1"/><path d="M5 10 L33 4 L33 30 L5 30 Z" fill="#fbfcfe" stroke="#9aa8b8" stroke-width="0.8"/><path d="M10 35 L30 35 L34 39 L6 39 Z" fill="#3a4a60"/><path d="M7 13 L14 11 L20 12 L31 9" stroke="#ff2020" stroke-width="2"/><path d="M7 14 L14 13 L22 11 L31 11" stroke="#2040ff" stroke-width="1.6"/><path d="M7 15 L15 14 L31 12" stroke="#20c020" stroke-width="1.2"/><path d="M8 26 L13 22 L17 25 L22 21 L26 24 L31 22" stroke="#ff20d0" stroke-width="1.5" fill="none"/></svg>
<svg class="a" style="left:1296px;top:66px;" width="40" height="40" viewBox="0 0 40 40"><defs><linearGradient id="mg1296" x1="0" y1="0" x2="1" y2="1"><stop offset="0" stop-color="#e8eef6"/><stop offset="1" stop-color="#7a8fa8"/></linearGradient></defs><path d="M3 8 L34 1 L39 4 L39 32 L34 35 L3 33 Z" fill="url(#mg1296)" stroke="#4a5a70" stroke-width="1"/><path d="M5 10 L33 4 L33 30 L5 30 Z" fill="#fbfcfe" stroke="#9aa8b8" stroke-width="0.8"/><path d="M10 35 L30 35 L34 39 L6 39 Z" fill="#3a4a60"/><path d="M7 12 L31 8" stroke="#f0e000" stroke-width="1.4"/><path d="M7 17 L12 15 L16 18 L21 14 L25 16 L31 13" stroke="#ff6000" stroke-width="1.4" fill="none"/><path d="M7 20 L13 18 L18 21 L31 18" stroke="#30c030" stroke-width="1.3" fill="none"/><path d="M7 24 L31 21" stroke="#ff20c0" stroke-width="1.5"/><path d="M7 28 L31 26" stroke="#6060e0" stroke-width="1.5"/></svg>
<svg class="a" style="left:1363px;top:66px;" width="41" height="40" viewBox="0 0 41 40"><rect x="1.5" y="1.5" width="9" height="37" fill="#D8D8D8" stroke="#1A1A1A" stroke-width="1.6"/><rect x="30.5" y="9.5" width="9" height="29" fill="#D8D8D8" stroke="#1A1A1A" stroke-width="1.6"/><path d="M3 7 H8 M3 13 H8 M3 19 H8 M3 25 H8 M3 31 H8 M32 15 H37 M32 21 H37 M32 27 H37 M32 33 H37" stroke="#777" stroke-width="2.5"/><path d="M8 6 C20 5 21 14 22 22 C23 31 26 34 34 34" fill="none" stroke="#1A1A1A" stroke-width="15"/><path d="M8 6 C20 5 21 14 22 22 C23 31 26 34 34 34" fill="none" stroke="#3A3448" stroke-width="12"/></svg>
<svg class="a" style="left:1412px;top:66px;" width="41" height="40" viewBox="0 0 41 40"><rect x="1.5" y="1.5" width="9" height="37" fill="#D8D8D8" stroke="#1A1A1A" stroke-width="1.6"/><rect x="30.5" y="9.5" width="9" height="29" fill="#D8D8D8" stroke="#1A1A1A" stroke-width="1.6"/><path d="M3 7 H8 M3 13 H8 M3 19 H8 M3 25 H8 M3 31 H8 M32 15 H37 M32 21 H37 M32 27 H37 M32 33 H37" stroke="#777" stroke-width="2.5"/><path d="M8 6 C20 5 21 14 22 22 C23 31 26 34 34 34" fill="none" stroke="#1A1A1A" stroke-width="15"/><path d="M8 6 C20 5 21 14 22 22 C23 31 26 34 34 34" fill="none" stroke="#F4F4F4" stroke-width="12"/></svg>
<svg class="a" style="left:1468px;top:66px;" width="41" height="40" viewBox="0 0 41 40"><rect x="1.5" y="1.5" width="9" height="37" fill="#D8D8D8" stroke="#1A1A1A" stroke-width="1.6"/><rect x="30.5" y="9.5" width="9" height="29" fill="#D8D8D8" stroke="#1A1A1A" stroke-width="1.6"/><path d="M3 7 H8 M3 13 H8 M3 19 H8 M3 25 H8 M3 31 H8 M32 15 H37 M32 21 H37 M32 27 H37 M32 33 H37" stroke="#777" stroke-width="2.5"/><path d="M8 6 C20 5 21 14 22 22 C23 31 26 34 34 34" fill="none" stroke="#1A1A1A" stroke-width="15"/><path d="M8 6 C20 5 21 14 22 22 C23 31 26 34 34 34" fill="none" stroke="#20C040" stroke-width="12"/><path d="M8 6 C17 5.5 19 9 20.5 13" fill="none" stroke="#F01818" stroke-width="12"/><path d="M23.5 29 C25 32 28 34 34 34" fill="none" stroke="#2A80FF" stroke-width="12"/></svg>
<svg class="a" style="left:1517px;top:66px;" width="41" height="40" viewBox="0 0 41 40"><rect x="1.5" y="1.5" width="9" height="37" fill="#D8D8D8" stroke="#1A1A1A" stroke-width="1.6"/><rect x="30.5" y="9.5" width="9" height="29" fill="#D8D8D8" stroke="#1A1A1A" stroke-width="1.6"/><path d="M3 7 H8 M3 13 H8 M3 19 H8 M3 25 H8 M3 31 H8 M32 15 H37 M32 21 H37 M32 27 H37 M32 33 H37" stroke="#777" stroke-width="2.5"/><path d="M8 6 C20 5 21 14 22 22 C23 31 26 34 34 34" fill="none" stroke="#1A1A1A" stroke-width="15"/><path d="M8 6 C20 5 21 14 22 22 C23 31 26 34 34 34" fill="none" stroke="#20C040" stroke-width="12"/><path d="M8 6 C17 5.5 19 9 20.5 13" fill="none" stroke="#F01818" stroke-width="12"/><path d="M23.5 29 C25 32 28 34 34 34" fill="none" stroke="#2A80FF" stroke-width="12"/></svg>
<svg class="a" style="left:1566px;top:66px;" width="40" height="40" viewBox="0 0 40 40"><defs><radialGradient id="pg" cx="0.5" cy="0.5" r="0.65"><stop offset="0" stop-color="#fff"/><stop offset="0.15" stop-color="#f8c0ff"/><stop offset="0.4" stop-color="#9040e0"/><stop offset="0.75" stop-color="#502090"/><stop offset="1" stop-color="#1a0828"/></radialGradient></defs><rect x="0" y="0" width="40" height="40" fill="url(#pg)"/><path d="M20 20 L2 6 M20 20 L38 8 M20 20 L4 36 M20 20 L36 34 M20 20 L20 1 M20 20 L1 22 M20 20 L39 22" stroke="#d090ff" stroke-width="0.8" opacity="0.7"/><ellipse cx="20" cy="21" rx="5" ry="7" fill="none" stroke="#ff70c0" stroke-width="1.6"/></svg>
<div class="a" style="left:0px;top:113px;width:2560px;height:4px;background:#7A7A7A;"></div>
<div class="a" style="left:0px;top:117px;width:2536px;height:1239px;background:#8C8C8C;"></div>
<div class="a" style="left:3px;top:118px;width:1791px;height:77px;background:#F7F7F7;"></div>
<div class="a" style="left:6px;top:121px;width:1785px;height:71px;background:#8F8F8F;"></div>
<div class="a" style="left:8px;top:123px;width:1781px;height:67px;background:#ECECEC;"></div>
<div class="a" style="left:8px;top:123px;width:1781px;height:7px;background:#8F8F8F;"></div>
<div class="a" style="left:8px;top:123px;width:1781px;height:21px;background:linear-gradient(90deg,#E2E9F4,#ECF1F8);border-radius:6px 6px 0 0;"></div>
<div class="a" style="left:8px;top:144px;width:1781px;height:1px;background:#AEB4BC;"></div>
<div id="t10" class="t" style="left:15.0px;top:126.7px;font-size:14.50px;color:#3A3A3A;font-weight:bold;font-family:'Liberation Sans', sans-serif;transform:scaleX(1.1287);transform-origin:left;">View</div>
<div class="a" style="left:1795px;top:118px;width:388px;height:77px;background:#F7F7F7;"></div>
<div class="a" style="left:1798px;top:121px;width:382px;height:71px;background:#8F8F8F;"></div>
<div class="a" style="left:1800px;top:123px;width:378px;height:67px;background:#ECECEC;"></div>
<div class="a" style="left:1800px;top:123px;width:378px;height:7px;background:#8F8F8F;"></div>
<div class="a" style="left:1800px;top:123px;width:378px;height:21px;background:linear-gradient(90deg,#E2E9F4,#ECF1F8);border-radius:6px 6px 0 0;"></div>
<div class="a" style="left:1800px;top:144px;width:378px;height:1px;background:#AEB4BC;"></div>
<div id="t11" class="t" style="left:1808.0px;top:126.7px;font-size:14.50px;color:#3A3A3A;font-weight:bold;font-family:'Liberation Sans', sans-serif;transform:scaleX(1.1389);transform-origin:left;">Sensor</div>
<div class="a" style="left:2183px;top:118px;width:155px;height:77px;background:#F7F7F7;"></div>
<div class="a" style="left:2186px;top:121px;width:149px;height:71px;background:#8F8F8F;"></div>
<div class="a" style="left:2188px;top:123px;width:145px;height:67px;background:#ECECEC;"></div>
<div class="a" style="left:2188px;top:123px;width:145px;height:7px;background:#8F8F8F;"></div>
<div class="a" style="left:2188px;top:123px;width:145px;height:21px;background:linear-gradient(90deg,#E2E9F4,#ECF1F8);border-radius:6px 6px 0 0;"></div>
<div class="a" style="left:2188px;top:144px;width:145px;height:1px;background:#AEB4BC;"></div>
<div id="t12" class="t" style="left:2195.0px;top:126.7px;font-size:14.50px;color:#3A3A3A;font-weight:bold;font-family:'Liberation Sans', sans-serif;transform:scaleX(1.1903);transform-origin:left;">Generator</div>
<div class="a" style="left:2338px;top:118px;width:194px;height:77px;background:#F7F7F7;"></div>
<div class="a" style="left:2341px;top:121px;width:188px;height:71px;background:#8F8F8F;"></div>
<div class="a" style="left:2343px;top:123px;width:184px;height:67px;background:#ECECEC;"></div>
<div class="a" style="left:2343px;top:123px;width:184px;height:7px;background:#8F8F8F;"></div>
<div class="a" style="left:2343px;top:123px;width:184px;height:21px;background:linear-gradient(90deg,#E2E9F4,#ECF1F8);border-radius:6px 6px 0 0;"></div>
<div class="a" style="left:2343px;top:144px;width:184px;height:1px;background:#AEB4BC;"></div>
<div id="t13" class="t" style="left:2350.0px;top:126.7px;font-size:14.50px;color:#3A3A3A;font-weight:bold;font-family:'Liberation Sans', sans-serif;transform:scaleX(1.1962);transform-origin:left;">Parameters</div>
<div class="a" style="left:9px;top:150px;width:247px;height:28px;background:#F0F0F0;border-top:2px solid #6F6F6F;border-left:2px solid #6F6F6F;box-sizing:border-box;"></div>
<div class="a" style="left:11px;top:152px;width:223px;height:24px;background:#FFFFFF;"></div>
<div id="t14" class="t" style="left:14.0px;top:156.6px;font-size:17.00px;color:#000;font-weight:normal;font-family:'Liberation Sans', sans-serif;transform:scaleX(1.0235);transform-origin:left;">Primaries and secondaries</div>
<div class="a" style="left:234px;top:152px;width:22px;height:25px;background:#EEEEEE;border-right:2px solid #6F6F6F;border-bottom:2px solid #6F6F6F;box-sizing:border-box;"></div>
<svg class="a" style="left:239px;top:159px;" width="12" height="10" viewBox="0 0 12 10"><path d="M1 2 H10 L5.5 8 Z" fill="#000"/></svg>
<div class="a" style="left:269px;top:148px;width:1487px;height:35px;background:#EFEFEF;border-top:1px solid #BFBFBF;border-left:1px solid #BFBFBF;box-sizing:border-box;"></div>
<div id="t15" class="t" style="left:272.0px;top:150.5px;font-size:19.50px;color:#000;font-weight:bold;font-family:'Liberation Sans', sans-serif;transform:scaleX(1.0285);transform-origin:left;letter-spacing:0px;">Color Space: HDTV Rec709 , White Point: D65, EOTF:&nbsp; SDR, Power law (black compensation) w/gamma = 2.20, # of measures: 0 [17:41:36]</div>
<div class="a" style="left:1757px;top:150px;width:22px;height:15px;background:#F0F0F0;border-right:2px solid #8A8A8A;border-bottom:2px solid #8A8A8A;box-sizing:border-box;"></div>
<svg class="a" style="left:1763px;top:154px;" width="10" height="6" viewBox="0 0 10 6"><path d="M0 5.5 H10 L5 0 Z" fill="#000"/></svg>
<div class="a" style="left:1757px;top:167px;width:22px;height:14px;background:#F0F0F0;border-right:2px solid #8A8A8A;border-bottom:2px solid #8A8A8A;box-sizing:border-box;"></div>
<svg class="a" style="left:1763px;top:171px;" width="10" height="6" viewBox="0 0 10 6"><path d="M0 0 H10 L5 5.5 Z" fill="#000"/></svg>
<div id="t16" class="t" style="left:1805.0px;top:148.5px;font-size:16.00px;color:#000;font-weight:normal;font-family:'Liberation Sans', sans-serif;transform:scaleX(1.1001);transform-origin:left;">Simulated sensor</div>
<div id="t17" class="t" style="left:1807.0px;top:169.5px;font-size:16.00px;color:#000;font-weight:normal;font-family:'Liberation Sans', sans-serif;transform:scaleX(1.1082);transform-origin:left;">Adaptive</div>
<svg class="a" style="left:1940px;top:171px;" width="23" height="21" viewBox="0 0 23 21"><defs><linearGradient id="spg" x1="0" y1="0" x2="0" y2="1"><stop offset="0" stop-color="#a0f080"/><stop offset="1" stop-color="#40b020"/></linearGradient></defs><path d="M2 1 L21 10.5 L2 20 Z" fill="url(#spg)"/></svg>
<svg class="a" style="left:2145px;top:164px;" width="30" height="30" viewBox="0 0 30 30"><defs><linearGradient id="cfg2145" x1="0" y1="0" x2="1" y2="1"><stop offset="0" stop-color="#6ab0ff"/><stop offset="1" stop-color="#1048b0"/></linearGradient></defs><path d="M2 6 L20 2 L22 26 L4 29 Z" fill="url(#cfg2145)" stroke="#0a3a90"/><path d="M6 9 L18 7 L19 23 L7 25 Z" fill="#e8f2ff"/><path d="M8 15 L11 20 L17 9" stroke="#e0a000" stroke-width="2" fill="none"/><path d="M14 19 L27 12" stroke="#2060d0" stroke-width="2.5"/><circle cx="27" cy="12" r="2" fill="#e04020"/></svg>
<div id="t18" class="t" style="left:2190.0px;top:148.5px;font-size:16.00px;color:#000;font-weight:normal;font-family:'Liberation Sans', sans-serif;transform:scaleX(0.9841);transform-origin:left;">GDI</div>
<svg class="a" style="left:2308px;top:168px;" width="30" height="30" viewBox="0 0 30 30"><defs><linearGradient id="cfg2308" x1="0" y1="0" x2="1" y2="1"><stop offset="0" stop-color="#6ab0ff"/><stop offset="1" stop-color="#1048b0"/></linearGradient></defs><path d="M2 6 L20 2 L22 26 L4 29 Z" fill="url(#cfg2308)" stroke="#0a3a90"/><path d="M6 9 L18 7 L19 23 L7 25 Z" fill="#e8f2ff"/><path d="M8 15 L11 20 L17 9" stroke="#e0a000" stroke-width="2" fill="none"/><path d="M14 19 L27 12" stroke="#2060d0" stroke-width="2.5"/><circle cx="27" cy="12" r="2" fill="#e04020"/></svg>
<div class="a" style="left:2354px;top:150px;width:14px;height:14px;background:#FFFFFF;border-top:1.5px solid #707070;border-left:1.5px solid #707070;box-sizing:border-box;"></div>
<div id="t19" class="t" style="left:2376.0px;top:149.0px;font-size:16.00px;color:#000;font-weight:normal;font-family:'Liberation Sans', sans-serif;transform:scaleX(1.0565);transform-origin:left;">Reference</div>
<div class="a" style="left:2354px;top:171px;width:14px;height:14px;background:#F0F0F0;border-top:1.5px solid #B8B8B8;border-left:1.5px solid #B8B8B8;box-sizing:border-box;"></div>
<div id="t20" class="t" style="left:2376.0px;top:170.5px;font-size:16.00px;color:#A8A8A8;font-weight:normal;font-family:'Liberation Sans', sans-serif;transform:scaleX(1.0722);transform-origin:left;">XYZ Adjustment</div>
<div class="a" style="left:3px;top:200px;width:2421px;height:277px;background:#F7F7F7;"></div>
<div class="a" style="left:6px;top:203px;width:2415px;height:271px;background:#8F8F8F;"></div>
<div class="a" style="left:8px;top:205px;width:2411px;height:267px;background:#ECECEC;"></div>
<div class="a" style="left:8px;top:205px;width:2411px;height:7px;background:#8F8F8F;"></div>
<div class="a" style="left:8px;top:205px;width:2411px;height:17px;background:linear-gradient(90deg,#E2E9F4,#ECF1F8);border-radius:6px 6px 0 0;"></div>
<div id="t21" class="t" style="left:18.0px;top:208.0px;font-size:13.00px;color:#3A3A3A;font-weight:bold;font-family:'Liberation Sans', sans-serif;transform:scaleX(1.0563);transform-origin:left;">( Average dE: 0.32 [0.10,0.06,0.27] max: 0.90 [CIE2000] )</div>
<div class="a" style="left:8px;top:224px;width:2px;height:248px;background:#22DD22;"></div>
<div class="a" style="left:8px;top:470px;width:2411px;height:2px;background:#22DD22;"></div>
<div class="a" style="left:2418px;top:207px;width:2px;height:265px;background:#22DD22;"></div>
<div class="a" style="left:2397px;top:224px;width:22px;height:2px;background:#22DD22;"></div>
<div class="a" style="left:10px;top:221px;width:2386px;height:223px;background:#8A8A8A;"></div>
<div class="a" style="left:12px;top:223px;width:2384px;height:221px;background:#FFFFFF;"></div>
<div class="a" style="left:12px;top:223px;width:66px;height:27px;background:#F0F0F0;"></div>
<div class="a" style="left:78px;top:223px;width:2px;height:28px;background:#8A8A8A;"></div>
<div class="a" style="left:80px;top:223px;width:281px;height:27px;background:#F0C8C8;"></div>
<div class="a" style="left:361px;top:223px;width:2px;height:28px;background:#8A8A8A;"></div>
<div class="a" style="left:363px;top:223px;width:284px;height:27px;background:#C8F0C8;"></div>
<div class="a" style="left:647px;top:223px;width:2px;height:28px;background:#8A8A8A;"></div>
<div class="a" style="left:649px;top:223px;width:281px;height:27px;background:#C8C8F0;"></div>
<div class="a" style="left:930px;top:223px;width:2px;height:28px;background:#8A8A8A;"></div>
<div class="a" style="left:932px;top:223px;width:285px;height:27px;background:#F0F0C8;"></div>
<div class="a" style="left:1217px;top:223px;width:2px;height:28px;background:#8A8A8A;"></div>
<div class="a" style="left:1219px;top:223px;width:281px;height:27px;background:#C8F0F0;"></div>
<div class="a" style="left:1500px;top:223px;width:2px;height:28px;background:#8A8A8A;"></div>
<div class="a" style="left:1502px;top:223px;width:301px;height:27px;background:#F0C8F0;"></div>
<div class="a" style="left:1803px;top:223px;width:2px;height:28px;background:#8A8A8A;"></div>
<div class="a" style="left:1805px;top:223px;width:283px;height:27px;background:#F0F0F0;"></div>
<div class="a" style="left:2088px;top:223px;width:2px;height:28px;background:#8A8A8A;"></div>
<div class="a" style="left:2090px;top:223px;width:281px;height:27px;background:#F0F0F0;"></div>
<div class="a" style="left:2371px;top:223px;width:2px;height:28px;background:#8A8A8A;"></div>
<div class="a" style="left:12px;top:250px;width:2361px;height:2px;background:#8A8A8A;"></div>
<div id="t22" class="t" style="left:26.8px;top:230.1px;font-size:15.00px;color:#000;font-weight:bold;font-family:'Liberation Sans', sans-serif;transform:scaleX(0.9318);transform-origin:left;">Color</div>
<div id="t23" class="t" style="left:205.0px;top:230.1px;font-size:15.00px;color:#000;font-weight:bold;font-family:'Liberation Sans', sans-serif;transform:scaleX(1.0937);transform-origin:left;">Red</div>
<div id="t24" class="t" style="left:482.0px;top:230.1px;font-size:15.00px;color:#000;font-weight:bold;font-family:'Liberation Sans', sans-serif;transform:scaleX(1.0609);transform-origin:left;">Green</div>
<div id="t25" class="t" style="left:774.0px;top:230.1px;font-size:15.00px;color:#000;font-weight:bold;font-family:'Liberation Sans', sans-serif;transform:scaleX(0.9534);transform-origin:left;">Blue</div>
<div id="t26" class="t" style="left:1052.5px;top:230.1px;font-size:15.00px;color:#000;font-weight:bold;font-family:'Liberation Sans', sans-serif;transform:scaleX(0.9424);transform-origin:left;">Yellow</div>
<div id="t27" class="t" style="left:1341.0px;top:230.1px;font-size:15.00px;color:#000;font-weight:bold;font-family:'Liberation Sans', sans-serif;transform:scaleX(1.0085);transform-origin:left;">Cyan</div>
<div id="t28" class="t" style="left:1622.0px;top:230.1px;font-size:15.00px;color:#000;font-weight:bold;font-family:'Liberation Sans', sans-serif;transform:scaleX(1.0026);transform-origin:left;">Magenta</div>
<div id="t29" class="t" style="left:1927.0px;top:230.1px;font-size:15.00px;color:#000;font-weight:bold;font-family:'Liberation Sans', sans-serif;transform:scaleX(0.9552);transform-origin:left;">White</div>
<div id="t30" class="t" style="left:2212.0px;top:230.1px;font-size:15.00px;color:#000;font-weight:bold;font-family:'Liberation Sans', sans-serif;transform:scaleX(0.9243);transform-origin:left;">Black</div>
<div class="a" style="left:12px;top:252px;width:66px;height:29px;background:#F0F0F0;"></div>
<div class="a" style="left:12px;top:281px;width:68px;height:1.5px;background:#8A8A8A;"></div>
<div class="a" style="left:78px;top:251px;width:2px;height:31px;background:#8A8A8A;"></div>
<div class="a" style="left:80px;top:252px;width:282px;height:29px;background:#FFFFFF;"></div>
<div class="a" style="left:362px;top:251px;width:1.5px;height:31px;background:#C8C8C8;"></div>
<div class="a" style="left:80px;top:281px;width:283px;height:1.5px;background:#C8C8C8;"></div>
<div class="a" style="left:363px;top:252px;width:285px;height:29px;background:#FFFFFF;"></div>
<div class="a" style="left:648px;top:251px;width:1.5px;height:31px;background:#C8C8C8;"></div>
<div class="a" style="left:363px;top:281px;width:286px;height:1.5px;background:#C8C8C8;"></div>
<div class="a" style="left:649px;top:252px;width:282px;height:29px;background:#FFFFFF;"></div>
<div class="a" style="left:931px;top:251px;width:1.5px;height:31px;background:#C8C8C8;"></div>
<div class="a" style="left:649px;top:281px;width:283px;height:1.5px;background:#C8C8C8;"></div>
<div class="a" style="left:932px;top:252px;width:286px;height:29px;background:#FFFFFF;"></div>
<div class="a" style="left:1218px;top:251px;width:1.5px;height:31px;background:#C8C8C8;"></div>
<div class="a" style="left:932px;top:281px;width:287px;height:1.5px;background:#C8C8C8;"></div>
<div class="a" style="left:1219px;top:252px;width:282px;height:29px;background:#FFFFFF;"></div>
<div class="a" style="left:1501px;top:251px;width:1.5px;height:31px;background:#C8C8C8;"></div>
<div class="a" style="left:1219px;top:281px;width:283px;height:1.5px;background:#C8C8C8;"></div>
<div class="a" style="left:1502px;top:252px;width:302px;height:29px;background:#FFFFFF;"></div>
<div class="a" style="left:1804px;top:251px;width:1.5px;height:31px;background:#C8C8C8;"></div>
<div class="a" style="left:1502px;top:281px;width:303px;height:1.5px;background:#C8C8C8;"></div>
<div class="a" style="left:1805px;top:252px;width:284px;height:29px;background:#FFFFFF;"></div>
<div class="a" style="left:2089px;top:251px;width:1.5px;height:31px;background:#C8C8C8;"></div>
<div class="a" style="left:1805px;top:281px;width:285px;height:1.5px;background:#C8C8C8;"></div>
<div class="a" style="left:2090px;top:252px;width:282px;height:29px;background:#FFFFFF;"></div>
<div class="a" style="left:2372px;top:251px;width:1.5px;height:31px;background:#C8C8C8;"></div>
<div class="a" style="left:2090px;top:281px;width:283px;height:1.5px;background:#C8C8C8;"></div>
<div class="a" style="left:12px;top:283px;width:66px;height:29px;background:#F0F0F0;"></div>
<div class="a" style="left:12px;top:312px;width:68px;height:1.5px;background:#8A8A8A;"></div>
<div class="a" style="left:78px;top:282px;width:2px;height:31px;background:#8A8A8A;"></div>
<div class="a" style="left:80px;top:283px;width:282px;height:29px;background:#FFFFFF;"></div>
<div class="a" style="left:362px;top:282px;width:1.5px;height:31px;background:#C8C8C8;"></div>
<div class="a" style="left:80px;top:312px;width:283px;height:1.5px;background:#C8C8C8;"></div>
<div class="a" style="left:363px;top:283px;width:285px;height:29px;background:#FFFFFF;"></div>
<div class="a" style="left:648px;top:282px;width:1.5px;height:31px;background:#C8C8C8;"></div>
<div class="a" style="left:363px;top:312px;width:286px;height:1.5px;background:#C8C8C8;"></div>
<div class="a" style="left:649px;top:283px;width:282px;height:29px;background:#FFFFFF;"></div>
<div class="a" style="left:931px;top:282px;width:1.5px;height:31px;background:#C8C8C8;"></div>
<div class="a" style="left:649px;top:312px;width:283px;height:1.5px;background:#C8C8C8;"></div>
<div class="a" style="left:932px;top:283px;width:286px;height:29px;background:#FFFFFF;"></div>
<div class="a" style="left:1218px;top:282px;width:1.5px;height:31px;background:#C8C8C8;"></div>
<div class="a" style="left:932px;top:312px;width:287px;height:1.5px;background:#C8C8C8;"></div>
<div class="a" style="left:1219px;top:283px;width:282px;height:29px;background:#FFFFFF;"></div>
<div class="a" style="left:1501px;top:282px;width:1.5px;height:31px;background:#C8C8C8;"></div>
<div class="a" style="left:1219px;top:312px;width:283px;height:1.5px;background:#C8C8C8;"></div>
<div class="a" style="left:1502px;top:283px;width:302px;height:29px;background:#FFFFFF;"></div>
<div class="a" style="left:1804px;top:282px;width:1.5px;height:31px;background:#C8C8C8;"></div>
<div class="a" style="left:1502px;top:312px;width:303px;height:1.5px;background:#C8C8C8;"></div>
<div class="a" style="left:1805px;top:283px;width:284px;height:29px;background:#FFFFFF;"></div>
<div class="a" style="left:2089px;top:282px;width:1.5px;height:31px;background:#C8C8C8;"></div>
<div class="a" style="left:1805px;top:312px;width:285px;height:1.5px;background:#C8C8C8;"></div>
<div class="a" style="left:2090px;top:283px;width:282px;height:29px;background:#FFFFFF;"></div>
<div class="a" style="left:2372px;top:282px;width:1.5px;height:31px;background:#C8C8C8;"></div>
<div class="a" style="left:2090px;top:312px;width:283px;height:1.5px;background:#C8C8C8;"></div>
<div class="a" style="left:12px;top:314px;width:66px;height:29.5px;background:#F0F0F0;"></div>
<div class="a" style="left:12px;top:343.5px;width:68px;height:1.5px;background:#8A8A8A;"></div>
<div class="a" style="left:78px;top:313px;width:2px;height:31.5px;background:#8A8A8A;"></div>
<div class="a" style="left:80px;top:314px;width:282px;height:29.5px;background:#FFFFFF;"></div>
<div class="a" style="left:362px;top:313px;width:1.5px;height:31.5px;background:#C8C8C8;"></div>
<div class="a" style="left:80px;top:343.5px;width:283px;height:1.5px;background:#C8C8C8;"></div>
<div class="a" style="left:363px;top:314px;width:285px;height:29.5px;background:#FFFFFF;"></div>
<div class="a" style="left:648px;top:313px;width:1.5px;height:31.5px;background:#C8C8C8;"></div>
<div class="a" style="left:363px;top:343.5px;width:286px;height:1.5px;background:#C8C8C8;"></div>
<div class="a" style="left:649px;top:314px;width:282px;height:29.5px;background:#FFFFFF;"></div>
<div class="a" style="left:931px;top:313px;width:1.5px;height:31.5px;background:#C8C8C8;"></div>
<div class="a" style="left:649px;top:343.5px;width:283px;height:1.5px;background:#C8C8C8;"></div>
<div class="a" style="left:932px;top:314px;width:286px;height:29.5px;background:#FFFFFF;"></div>
<div class="a" style="left:1218px;top:313px;width:1.5px;height:31.5px;background:#C8C8C8;"></div>
<div class="a" style="left:932px;top:343.5px;width:287px;height:1.5px;background:#C8C8C8;"></div>
<div class="a" style="left:1219px;top:314px;width:282px;height:29.5px;background:#FFFFFF;"></div>
<div class="a" style="left:1501px;top:313px;width:1.5px;height:31.5px;background:#C8C8C8;"></div>
<div class="a" style="left:1219px;top:343.5px;width:283px;height:1.5px;background:#C8C8C8;"></div>
<div class="a" style="left:1502px;top:314px;width:302px;height:29.5px;background:#FFFFFF;"></div>
<div class="a" style="left:1804px;top:313px;width:1.5px;height:31.5px;background:#C8C8C8;"></div>
<div class="a" style="left:1502px;top:343.5px;width:303px;height:1.5px;background:#C8C8C8;"></div>
<div class="a" style="left:1805px;top:314px;width:284px;height:29.5px;background:#FFFFFF;"></div>
<div class="a" style="left:2089px;top:313px;width:1.5px;height:31.5px;background:#C8C8C8;"></div>
<div class="a" style="left:1805px;top:343.5px;width:285px;height:1.5px;background:#C8C8C8;"></div>
<div class="a" style="left:2090px;top:314px;width:282px;height:29.5px;background:#FFFFFF;"></div>
<div class="a" style="left:2372px;top:313px;width:1.5px;height:31.5px;background:#C8C8C8;"></div>
<div class="a" style="left:2090px;top:343.5px;width:283px;height:1.5px;background:#C8C8C8;"></div>
<div class="a" style="left:12px;top:345.5px;width:66px;height:29.5px;background:#F0F0F0;"></div>
<div class="a" style="left:12px;top:375px;width:68px;height:1.5px;background:#8A8A8A;"></div>
<div class="a" style="left:78px;top:344.5px;width:2px;height:31.5px;background:#8A8A8A;"></div>
<div class="a" style="left:80px;top:345.5px;width:282px;height:29.5px;background:#ADFEA5;"></div>
<div class="a" style="left:362px;top:344.5px;width:1.5px;height:31.5px;background:#C8C8C8;"></div>
<div class="a" style="left:80px;top:375px;width:283px;height:1.5px;background:#C8C8C8;"></div>
<div class="a" style="left:363px;top:345.5px;width:285px;height:29.5px;background:#ADFEA5;"></div>
<div class="a" style="left:648px;top:344.5px;width:1.5px;height:31.5px;background:#C8C8C8;"></div>
<div class="a" style="left:363px;top:375px;width:286px;height:1.5px;background:#C8C8C8;"></div>
<div class="a" style="left:649px;top:345.5px;width:282px;height:29.5px;background:#ADFEA5;"></div>
<div class="a" style="left:931px;top:344.5px;width:1.5px;height:31.5px;background:#C8C8C8;"></div>
<div class="a" style="left:649px;top:375px;width:283px;height:1.5px;background:#C8C8C8;"></div>
<div class="a" style="left:932px;top:345.5px;width:286px;height:29.5px;background:#ADFEA5;"></div>
<div class="a" style="left:1218px;top:344.5px;width:1.5px;height:31.5px;background:#C8C8C8;"></div>
<div class="a" style="left:932px;top:375px;width:287px;height:1.5px;background:#C8C8C8;"></div>
<div class="a" style="left:1219px;top:345.5px;width:282px;height:29.5px;background:#ADFEA5;"></div>
<div class="a" style="left:1501px;top:344.5px;width:1.5px;height:31.5px;background:#C8C8C8;"></div>
<div class="a" style="left:1219px;top:375px;width:283px;height:1.5px;background:#C8C8C8;"></div>
<div class="a" style="left:1502px;top:345.5px;width:302px;height:29.5px;background:#ADFEA5;"></div>
<div class="a" style="left:1804px;top:344.5px;width:1.5px;height:31.5px;background:#C8C8C8;"></div>
<div class="a" style="left:1502px;top:375px;width:303px;height:1.5px;background:#C8C8C8;"></div>
<div class="a" style="left:1805px;top:345.5px;width:284px;height:29.5px;background:#ADFEA5;"></div>
<div class="a" style="left:2089px;top:344.5px;width:1.5px;height:31.5px;background:#C8C8C8;"></div>
<div class="a" style="left:1805px;top:375px;width:285px;height:1.5px;background:#C8C8C8;"></div>
<div class="a" style="left:2090px;top:345.5px;width:282px;height:29.5px;background:#E0E0E0;"></div>
<div class="a" style="left:2372px;top:344.5px;width:1.5px;height:31.5px;background:#C8C8C8;"></div>
<div class="a" style="left:2090px;top:375px;width:283px;height:1.5px;background:#C8C8C8;"></div>
<div class="a" style="left:12px;top:377px;width:66px;height:29px;background:#F0F0F0;"></div>
<div class="a" style="left:12px;top:406px;width:68px;height:1.5px;background:#8A8A8A;"></div>
<div class="a" style="left:78px;top:376px;width:2px;height:31px;background:#8A8A8A;"></div>
<div class="a" style="left:80px;top:377px;width:282px;height:29px;background:#F0F0F0;"></div>
<div class="a" style="left:362px;top:376px;width:1.5px;height:31px;background:#C8C8C8;"></div>
<div class="a" style="left:80px;top:406px;width:283px;height:1.5px;background:#C8C8C8;"></div>
<div class="a" style="left:363px;top:377px;width:285px;height:29px;background:#F0F0F0;"></div>
<div class="a" style="left:648px;top:376px;width:1.5px;height:31px;background:#C8C8C8;"></div>
<div class="a" style="left:363px;top:406px;width:286px;height:1.5px;background:#C8C8C8;"></div>
<div class="a" style="left:649px;top:377px;width:282px;height:29px;background:#F0F0F0;"></div>
<div class="a" style="left:931px;top:376px;width:1.5px;height:31px;background:#C8C8C8;"></div>
<div class="a" style="left:649px;top:406px;width:283px;height:1.5px;background:#C8C8C8;"></div>
<div class="a" style="left:932px;top:377px;width:286px;height:29px;background:#F0F0F0;"></div>
<div class="a" style="left:1218px;top:376px;width:1.5px;height:31px;background:#C8C8C8;"></div>
<div class="a" style="left:932px;top:406px;width:287px;height:1.5px;background:#C8C8C8;"></div>
<div class="a" style="left:1219px;top:377px;width:282px;height:29px;background:#F0F0F0;"></div>
<div class="a" style="left:1501px;top:376px;width:1.5px;height:31px;background:#C8C8C8;"></div>
<div class="a" style="left:1219px;top:406px;width:283px;height:1.5px;background:#C8C8C8;"></div>
<div class="a" style="left:1502px;top:377px;width:302px;height:29px;background:#F0F0F0;"></div>
<div class="a" style="left:1804px;top:376px;width:1.5px;height:31px;background:#C8C8C8;"></div>
<div class="a" style="left:1502px;top:406px;width:303px;height:1.5px;background:#C8C8C8;"></div>
<div class="a" style="left:1805px;top:377px;width:284px;height:29px;background:#F0F0F0;"></div>
<div class="a" style="left:2089px;top:376px;width:1.5px;height:31px;background:#C8C8C8;"></div>
<div class="a" style="left:1805px;top:406px;width:285px;height:1.5px;background:#C8C8C8;"></div>
<div class="a" style="left:2090px;top:377px;width:282px;height:29px;background:#F0F0F0;"></div>
<div class="a" style="left:2372px;top:376px;width:1.5px;height:31px;background:#C8C8C8;"></div>
<div class="a" style="left:2090px;top:406px;width:283px;height:1.5px;background:#C8C8C8;"></div>
<div class="a" style="left:12px;top:408px;width:66px;height:29px;background:#F0F0F0;"></div>
<div class="a" style="left:12px;top:437px;width:68px;height:1.5px;background:#8A8A8A;"></div>
<div class="a" style="left:78px;top:407px;width:2px;height:31px;background:#8A8A8A;"></div>
<div class="a" style="left:80px;top:408px;width:282px;height:29px;background:#E0E0E0;"></div>
<div class="a" style="left:362px;top:407px;width:1.5px;height:31px;background:#C8C8C8;"></div>
<div class="a" style="left:80px;top:437px;width:283px;height:1.5px;background:#C8C8C8;"></div>
<div class="a" style="left:363px;top:408px;width:285px;height:29px;background:#E0E0E0;"></div>
<div class="a" style="left:648px;top:407px;width:1.5px;height:31px;background:#C8C8C8;"></div>
<div class="a" style="left:363px;top:437px;width:286px;height:1.5px;background:#C8C8C8;"></div>
<div class="a" style="left:649px;top:408px;width:282px;height:29px;background:#E0E0E0;"></div>
<div class="a" style="left:931px;top:407px;width:1.5px;height:31px;background:#C8C8C8;"></div>
<div class="a" style="left:649px;top:437px;width:283px;height:1.5px;background:#C8C8C8;"></div>
<div class="a" style="left:932px;top:408px;width:286px;height:29px;background:#E0E0E0;"></div>
<div class="a" style="left:1218px;top:407px;width:1.5px;height:31px;background:#C8C8C8;"></div>
<div class="a" style="left:932px;top:437px;width:287px;height:1.5px;background:#C8C8C8;"></div>
<div class="a" style="left:1219px;top:408px;width:282px;height:29px;background:#E0E0E0;"></div>
<div class="a" style="left:1501px;top:407px;width:1.5px;height:31px;background:#C8C8C8;"></div>
<div class="a" style="left:1219px;top:437px;width:283px;height:1.5px;background:#C8C8C8;"></div>
<div class="a" style="left:1502px;top:408px;width:302px;height:29px;background:#E0E0E0;"></div>
<div class="a" style="left:1804px;top:407px;width:1.5px;height:31px;background:#C8C8C8;"></div>
<div class="a" style="left:1502px;top:437px;width:303px;height:1.5px;background:#C8C8C8;"></div>
<div class="a" style="left:1805px;top:408px;width:284px;height:29px;background:#E0E0E0;"></div>
<div class="a" style="left:2089px;top:407px;width:1.5px;height:31px;background:#C8C8C8;"></div>
<div class="a" style="left:1805px;top:437px;width:285px;height:1.5px;background:#C8C8C8;"></div>
<div class="a" style="left:2090px;top:408px;width:282px;height:29px;background:#E0E0E0;"></div>
<div class="a" style="left:2372px;top:407px;width:1.5px;height:31px;background:#C8C8C8;"></div>
<div class="a" style="left:2090px;top:437px;width:283px;height:1.5px;background:#C8C8C8;"></div>
<div class="a" style="left:12px;top:439px;width:66px;height:4px;background:#F0F0F0;"></div>
<div class="a" style="left:12px;top:443px;width:68px;height:1.5px;background:#8A8A8A;"></div>
<div class="a" style="left:78px;top:438px;width:2px;height:6px;background:#8A8A8A;"></div>
<div class="a" style="left:80px;top:439px;width:282px;height:4px;background:#F0F0F0;"></div>
<div class="a" style="left:362px;top:438px;width:1.5px;height:6px;background:#C8C8C8;"></div>
<div class="a" style="left:80px;top:443px;width:283px;height:1.5px;background:#C8C8C8;"></div>
<div class="a" style="left:363px;top:439px;width:285px;height:4px;background:#F0F0F0;"></div>
<div class="a" style="left:648px;top:438px;width:1.5px;height:6px;background:#C8C8C8;"></div>
<div class="a" style="left:363px;top:443px;width:286px;height:1.5px;background:#C8C8C8;"></div>
<div class="a" style="left:649px;top:439px;width:282px;height:4px;background:#F0F0F0;"></div>
<div class="a" style="left:931px;top:438px;width:1.5px;height:6px;background:#C8C8C8;"></div>
<div class="a" style="left:649px;top:443px;width:283px;height:1.5px;background:#C8C8C8;"></div>
<div class="a" style="left:932px;top:439px;width:286px;height:4px;background:#F0F0F0;"></div>
<div class="a" style="left:1218px;top:438px;width:1.5px;height:6px;background:#C8C8C8;"></div>
<div class="a" style="left:932px;top:443px;width:287px;height:1.5px;background:#C8C8C8;"></div>
<div class="a" style="left:1219px;top:439px;width:282px;height:4px;background:#F0F0F0;"></div>
<div class="a" style="left:1501px;top:438px;width:1.5px;height:6px;background:#C8C8C8;"></div>
<div class="a" style="left:1219px;top:443px;width:283px;height:1.5px;background:#C8C8C8;"></div>
<div class="a" style="left:1502px;top:439px;width:302px;height:4px;background:#F0F0F0;"></div>
<div class="a" style="left:1804px;top:438px;width:1.5px;height:6px;background:#C8C8C8;"></div>
<div class="a" style="left:1502px;top:443px;width:303px;height:1.5px;background:#C8C8C8;"></div>
<div class="a" style="left:1805px;top:439px;width:284px;height:4px;background:#F0F0F0;"></div>
<div class="a" style="left:2089px;top:438px;width:1.5px;height:6px;background:#C8C8C8;"></div>
<div class="a" style="left:1805px;top:443px;width:285px;height:1.5px;background:#C8C8C8;"></div>
<div class="a" style="left:2090px;top:439px;width:282px;height:4px;background:#F0F0F0;"></div>
<div class="a" style="left:2372px;top:438px;width:1.5px;height:6px;background:#C8C8C8;"></div>
<div class="a" style="left:2090px;top:443px;width:283px;height:1.5px;background:#C8C8C8;"></div>
<div id="t31" class="t" style="left:41.0px;top:260.3px;font-size:15.00px;color:#000;font-weight:bold;font-family:'Liberation Sans', sans-serif;transform:scaleX(1.1985);transform-origin:left;">x</div>
<div id="t32" class="t" style="right:2199.0px;top:260.3px;font-size:15.00px;color:#000;font-weight:normal;font-family:'Liberation Sans', sans-serif;transform:scaleX(0.9000);transform-origin:right;">0.6411</div>
<div id="t33" class="t" style="right:1913.0px;top:260.3px;font-size:15.00px;color:#000;font-weight:normal;font-family:'Liberation Sans', sans-serif;transform:scaleX(0.9000);transform-origin:right;">0.3007</div>
<div id="t34" class="t" style="right:1630.0px;top:260.3px;font-size:15.00px;color:#000;font-weight:normal;font-family:'Liberation Sans', sans-serif;transform:scaleX(0.9000);transform-origin:right;">0.1550</div>
<div id="t35" class="t" style="right:1343.0px;top:260.3px;font-size:15.00px;color:#000;font-weight:normal;font-family:'Liberation Sans', sans-serif;transform:scaleX(0.9000);transform-origin:right;">0.4196</div>
<div id="t36" class="t" style="right:1060.0px;top:260.3px;font-size:15.00px;color:#000;font-weight:normal;font-family:'Liberation Sans', sans-serif;transform:scaleX(0.9000);transform-origin:right;">0.2255</div>
<div id="t37" class="t" style="right:757.0px;top:260.3px;font-size:15.00px;color:#000;font-weight:normal;font-family:'Liberation Sans', sans-serif;transform:scaleX(0.9000);transform-origin:right;">0.3229</div>
<div id="t38" class="t" style="right:472.0px;top:260.3px;font-size:15.00px;color:#000;font-weight:normal;font-family:'Liberation Sans', sans-serif;transform:scaleX(0.9000);transform-origin:right;">0.3126</div>
<div id="t39" class="t" style="right:189.0px;top:260.3px;font-size:15.00px;color:#000;font-weight:normal;font-family:'Liberation Sans', sans-serif;transform:scaleX(0.9000);transform-origin:right;">0.3408</div>
<div id="t40" class="t" style="left:40.5px;top:291.3px;font-size:15.00px;color:#000;font-weight:bold;font-family:'Liberation Sans', sans-serif;transform:scaleX(1.3184);transform-origin:left;">y</div>
<div id="t41" class="t" style="right:2199.0px;top:291.3px;font-size:15.00px;color:#000;font-weight:normal;font-family:'Liberation Sans', sans-serif;transform:scaleX(0.9000);transform-origin:right;">0.3289</div>
<div id="t42" class="t" style="right:1913.0px;top:291.3px;font-size:15.00px;color:#000;font-weight:normal;font-family:'Liberation Sans', sans-serif;transform:scaleX(0.9000);transform-origin:right;">0.5983</div>
<div id="t43" class="t" style="right:1630.0px;top:291.3px;font-size:15.00px;color:#000;font-weight:normal;font-family:'Liberation Sans', sans-serif;transform:scaleX(0.9000);transform-origin:right;">0.0616</div>
<div id="t44" class="t" style="right:1343.0px;top:291.3px;font-size:15.00px;color:#000;font-weight:normal;font-family:'Liberation Sans', sans-serif;transform:scaleX(0.9000);transform-origin:right;">0.5041</div>
<div id="t45" class="t" style="right:1060.0px;top:291.3px;font-size:15.00px;color:#000;font-weight:normal;font-family:'Liberation Sans', sans-serif;transform:scaleX(0.9000);transform-origin:right;">0.3306</div>
<div id="t46" class="t" style="right:757.0px;top:291.3px;font-size:15.00px;color:#000;font-weight:normal;font-family:'Liberation Sans', sans-serif;transform:scaleX(0.9000);transform-origin:right;">0.1548</div>
<div id="t47" class="t" style="right:472.0px;top:291.3px;font-size:15.00px;color:#000;font-weight:normal;font-family:'Liberation Sans', sans-serif;transform:scaleX(0.9000);transform-origin:right;">0.3290</div>
<div id="t48" class="t" style="right:189.0px;top:291.3px;font-size:15.00px;color:#000;font-weight:normal;font-family:'Liberation Sans', sans-serif;transform:scaleX(0.9000);transform-origin:right;">0.3335</div>
<div id="t49" class="t" style="left:40.0px;top:322.3px;font-size:15.00px;color:#000;font-weight:bold;font-family:'Liberation Sans', sans-serif;transform:scaleX(1.1981);transform-origin:left;">Y</div>
<div id="t50" class="t" style="right:2199.0px;top:322.3px;font-size:15.00px;color:#000;font-weight:normal;font-family:'Liberation Sans', sans-serif;transform:scaleX(0.9000);transform-origin:right;">41.987</div>
<div id="t51" class="t" style="right:1913.0px;top:322.3px;font-size:15.00px;color:#000;font-weight:normal;font-family:'Liberation Sans', sans-serif;transform:scaleX(0.9000);transform-origin:right;">142.228</div>
<div id="t52" class="t" style="right:1630.0px;top:322.3px;font-size:15.00px;color:#000;font-weight:normal;font-family:'Liberation Sans', sans-serif;transform:scaleX(0.9000);transform-origin:right;">14.618</div>
<div id="t53" class="t" style="right:1343.0px;top:322.3px;font-size:15.00px;color:#000;font-weight:normal;font-family:'Liberation Sans', sans-serif;transform:scaleX(0.9000);transform-origin:right;">184.215</div>
<div id="t54" class="t" style="right:1060.0px;top:322.3px;font-size:15.00px;color:#000;font-weight:normal;font-family:'Liberation Sans', sans-serif;transform:scaleX(0.9000);transform-origin:right;">155.893</div>
<div id="t55" class="t" style="right:757.0px;top:322.3px;font-size:15.00px;color:#000;font-weight:normal;font-family:'Liberation Sans', sans-serif;transform:scaleX(0.9000);transform-origin:right;">56.058</div>
<div id="t56" class="t" style="right:472.0px;top:322.3px;font-size:15.00px;color:#000;font-weight:normal;font-family:'Liberation Sans', sans-serif;transform:scaleX(0.9000);transform-origin:right;">197.730</div>
<div id="t57" class="t" style="right:189.0px;top:322.3px;font-size:15.00px;color:#000;font-weight:normal;font-family:'Liberation Sans', sans-serif;transform:scaleX(0.9000);transform-origin:right;">0.000</div>
<div id="t58" class="t" style="left:19.5px;top:353.8px;font-size:15.00px;color:#000;font-weight:bold;font-family:'Liberation Sans', sans-serif;transform:scaleX(1.0421);transform-origin:left;">Delta E</div>
<div id="t59" class="t" style="right:2199.0px;top:353.4px;font-size:15.50px;color:#000;font-weight:bold;font-family:'Liberation Sans', sans-serif;transform:scaleX(1.0000);transform-origin:right;">0.2</div>
<div id="t60" class="t" style="right:1913.0px;top:353.4px;font-size:15.50px;color:#000;font-weight:bold;font-family:'Liberation Sans', sans-serif;transform:scaleX(1.0000);transform-origin:right;">0.2</div>
<div id="t61" class="t" style="right:1630.0px;top:353.4px;font-size:15.50px;color:#000;font-weight:bold;font-family:'Liberation Sans', sans-serif;transform:scaleX(1.0000);transform-origin:right;">0.9</div>
<div id="t62" class="t" style="right:1343.0px;top:353.4px;font-size:15.50px;color:#000;font-weight:bold;font-family:'Liberation Sans', sans-serif;transform:scaleX(1.0000);transform-origin:right;">0.2</div>
<div id="t63" class="t" style="right:1060.0px;top:353.4px;font-size:15.50px;color:#000;font-weight:bold;font-family:'Liberation Sans', sans-serif;transform:scaleX(1.0000);transform-origin:right;">0.5</div>
<div id="t64" class="t" style="right:757.0px;top:353.4px;font-size:15.50px;color:#000;font-weight:bold;font-family:'Liberation Sans', sans-serif;transform:scaleX(1.0000);transform-origin:right;">0.2</div>
<div id="t65" class="t" style="right:472.0px;top:353.4px;font-size:15.50px;color:#000;font-weight:bold;font-family:'Liberation Sans', sans-serif;transform:scaleX(1.0000);transform-origin:right;">0.1</div>
<div id="t66" class="t" style="left:17.5px;top:385.3px;font-size:15.00px;color:#000;font-weight:bold;font-family:'Liberation Sans', sans-serif;transform:scaleX(1.0201);transform-origin:left;">delta xy</div>
<div id="t67" class="t" style="right:2199.0px;top:385.3px;font-size:15.00px;color:#000;font-weight:normal;font-family:'Liberation Sans', sans-serif;transform:scaleX(0.9000);transform-origin:right;">0.0016</div>
<div id="t68" class="t" style="right:1913.0px;top:385.3px;font-size:15.00px;color:#000;font-weight:normal;font-family:'Liberation Sans', sans-serif;transform:scaleX(0.9000);transform-origin:right;">0.0019</div>
<div id="t69" class="t" style="right:1630.0px;top:385.3px;font-size:15.00px;color:#000;font-weight:normal;font-family:'Liberation Sans', sans-serif;transform:scaleX(0.9000);transform-origin:right;">0.0053</div>
<div id="t70" class="t" style="right:1343.0px;top:385.3px;font-size:15.00px;color:#000;font-weight:normal;font-family:'Liberation Sans', sans-serif;transform:scaleX(0.9000);transform-origin:right;">0.0012</div>
<div id="t71" class="t" style="right:1060.0px;top:385.3px;font-size:15.00px;color:#000;font-weight:normal;font-family:'Liberation Sans', sans-serif;transform:scaleX(0.9000);transform-origin:right;">0.0020</div>
<div id="t72" class="t" style="right:757.0px;top:385.3px;font-size:15.00px;color:#000;font-weight:normal;font-family:'Liberation Sans', sans-serif;transform:scaleX(0.9000);transform-origin:right;">0.0021</div>
<div id="t73" class="t" style="right:472.0px;top:385.3px;font-size:15.00px;color:#000;font-weight:normal;font-family:'Liberation Sans', sans-serif;transform:scaleX(0.9000);transform-origin:right;">0.0001</div>
<div id="t74" class="t" style="left:23.0px;top:416.3px;font-size:15.00px;color:#000;font-weight:bold;font-family:'Liberation Sans', sans-serif;transform:scaleX(0.9515);transform-origin:left;">delta L</div>
<div id="t75" class="t" style="right:2199.0px;top:416.3px;font-size:15.00px;color:#000;font-weight:normal;font-family:'Liberation Sans', sans-serif;transform:scaleX(0.9000);transform-origin:right;">-0.1 %</div>
<div id="t76" class="t" style="right:1913.0px;top:416.3px;font-size:15.00px;color:#000;font-weight:normal;font-family:'Liberation Sans', sans-serif;transform:scaleX(0.9000);transform-origin:right;">+0.6 %</div>
<div id="t77" class="t" style="right:1630.0px;top:416.3px;font-size:15.00px;color:#000;font-weight:normal;font-family:'Liberation Sans', sans-serif;transform:scaleX(0.9000);transform-origin:right;">+2.4 %</div>
<div id="t78" class="t" style="right:1343.0px;top:416.3px;font-size:15.00px;color:#000;font-weight:normal;font-family:'Liberation Sans', sans-serif;transform:scaleX(0.9000);transform-origin:right;">+0.4 %</div>
<div id="t79" class="t" style="right:1060.0px;top:416.3px;font-size:15.00px;color:#000;font-weight:normal;font-family:'Liberation Sans', sans-serif;transform:scaleX(0.9000);transform-origin:right;">+0.1 %</div>
<div id="t80" class="t" style="right:757.0px;top:416.3px;font-size:15.00px;color:#000;font-weight:normal;font-family:'Liberation Sans', sans-serif;transform:scaleX(0.9000);transform-origin:right;">-0.5 %</div>
<div class="a" style="left:2373px;top:223px;width:23px;height:221px;background:#F0F0F0;"></div>
<div class="a" style="left:2375px;top:244px;width:19px;height:176px;background:#CDCDCD;"></div>
<svg class="a" style="left:2378px;top:229px;" width="13" height="9" viewBox="0 0 13 9"><path d="M1 8 L6.5 2 L12 8" stroke="#606060" stroke-width="2.2" fill="none"/></svg>
<svg class="a" style="left:2378px;top:430px;" width="13" height="9" viewBox="0 0 13 9"><path d="M1 1 L6.5 7 L12 1" stroke="#606060" stroke-width="2.2" fill="none"/></svg>
<div class="a" style="left:12px;top:444px;width:2384px;height:23px;background:#F0F0F0;"></div>
<div class="a" style="left:12px;top:443px;width:2361px;height:1.5px;background:#FFFFFF;"></div>
<svg class="a" style="left:16px;top:449px;" width="10" height="13" viewBox="0 0 10 13"><path d="M8 1 L2 6.5 L8 12" stroke="#C0C0C0" stroke-width="2" fill="none"/></svg>
<svg class="a" style="left:2359px;top:449px;" width="10" height="13" viewBox="0 0 10 13"><path d="M2 1 L8 6.5 L2 12" stroke="#C0C0C0" stroke-width="2" fill="none"/></svg>
<div class="a" style="left:2425px;top:200px;width:107px;height:129px;background:#F7F7F7;"></div>
<div class="a" style="left:2428px;top:203px;width:101px;height:123px;background:#8F8F8F;"></div>
<div class="a" style="left:2430px;top:205px;width:97px;height:119px;background:#ECECEC;"></div>
<div class="a" style="left:2430px;top:205px;width:97px;height:7px;background:#8F8F8F;"></div>
<div class="a" style="left:2430px;top:205px;width:97px;height:21px;background:linear-gradient(90deg,#E2E9F4,#ECF1F8);border-radius:6px 6px 0 0;"></div>
<div class="a" style="left:2430px;top:226px;width:97px;height:1px;background:#AEB4BC;"></div>
<div id="t81" class="t" style="left:2438.0px;top:208.7px;font-size:14.50px;color:#3A3A3A;font-weight:bold;font-family:'Liberation Sans', sans-serif;transform:scaleX(1.1435);transform-origin:left;">Display</div>
<svg class="a" style="left:2439px;top:227px;" width="14" height="14" viewBox="0 0 14 14"><circle cx="7" cy="7" r="5.6" fill="#F0F0F0" stroke="#B0B0B0" stroke-width="1.2"/></svg>
<div id="t82" class="t" style="left:2461.5px;top:227.5px;font-size:16.00px;color:#A8A8A8;font-weight:normal;font-family:'Liberation Sans', sans-serif;transform:scaleX(0.9270);transform-origin:left;">Sensor</div>
<svg class="a" style="left:2439px;top:247px;" width="14" height="14" viewBox="0 0 14 14"><circle cx="7" cy="7" r="5.6" fill="#FFFFFF" stroke="#606060" stroke-width="1.2"/></svg>
<div id="t83" class="t" style="left:2461.5px;top:247.5px;font-size:16.00px;color:#000;font-weight:normal;font-family:'Liberation Sans', sans-serif;transform:scaleX(0.8941);transform-origin:left;">RGB</div>
<svg class="a" style="left:2439px;top:267px;" width="14" height="14" viewBox="0 0 14 14"><circle cx="7" cy="7" r="5.6" fill="#FFFFFF" stroke="#606060" stroke-width="1.2"/></svg>
<div id="t84" class="t" style="left:2461.5px;top:267.5px;font-size:16.00px;color:#000;font-weight:normal;font-family:'Liberation Sans', sans-serif;transform:scaleX(0.8996);transform-origin:left;">XYZ</div>
<svg class="a" style="left:2439px;top:287px;" width="14" height="14" viewBox="0 0 14 14"><circle cx="7" cy="7" r="5.6" fill="#FFFFFF" stroke="#606060" stroke-width="1.2"/></svg>
<div id="t85" class="t" style="left:2461.5px;top:287.5px;font-size:16.00px;color:#000;font-weight:normal;font-family:'Liberation Sans', sans-serif;transform:scaleX(1.0833);transform-origin:left;">xyz</div>
<svg class="a" style="left:2439px;top:305.6px;" width="14" height="14" viewBox="0 0 14 14"><circle cx="7" cy="7" r="5.6" fill="#FFFFFF" stroke="#606060" stroke-width="1.2"/><circle cx="7" cy="7" r="2.2" fill="#000"/></svg>
<div id="t86" class="t" style="left:2461.5px;top:306.1px;font-size:16.00px;color:#000;font-weight:normal;font-family:'Liberation Sans', sans-serif;transform:scaleX(0.9748);transform-origin:left;">xyY</div>
<div class="a" style="left:2425px;top:326px;width:111px;height:150px;background:#8C8C8C;"></div>
<div class="a" style="left:2423px;top:326px;width:106px;height:4px;background:#F7F7F7;"></div>
<div class="a" style="left:2425px;top:330px;width:104px;height:38px;background:#EBEBEB;border-top:1.5px solid #FFFFFF;border-left:1px solid #FFFFFF;border-bottom:2px solid #7A7A7A;border-right:2px solid #7A7A7A;box-sizing:border-box;"></div>
<div id="t87" class="t" style="left:2489.0px;top:342.0px;font-size:16.50px;color:#000;font-weight:normal;font-family:'Liberation Sans', sans-serif;transform:scaleX(0.9084);transform-origin:left;">Go</div>
<svg class="a" style="left:2432px;top:333px" width="42" height="35"><defs><radialGradient id="ball26" cx="0.35" cy="0.3" r="0.75"><stop offset="0" stop-color="#fff"/><stop offset="0.25" stop-color="#ffff60"/><stop offset="1" stop-color="#d0c000"/></radialGradient></defs><circle cx="26" cy="4" r="5.5" fill="url(#ball26)"/><defs><radialGradient id="ball27" cx="0.35" cy="0.3" r="0.75"><stop offset="0" stop-color="#fff"/><stop offset="0.25" stop-color="#e080ff"/><stop offset="1" stop-color="#9030c0"/></radialGradient></defs><circle cx="34" cy="10" r="6" fill="url(#ball27)"/><defs><radialGradient id="ball28" cx="0.35" cy="0.3" r="0.75"><stop offset="0" stop-color="#fff"/><stop offset="0.25" stop-color="#60ffff"/><stop offset="1" stop-color="#00a0a0"/></radialGradient></defs><circle cx="34" cy="17" r="6" fill="url(#ball28)"/><defs><radialGradient id="ball29" cx="0.35" cy="0.3" r="0.75"><stop offset="0" stop-color="#fff"/><stop offset="0.25" stop-color="#60ff60"/><stop offset="1" stop-color="#10a010"/></radialGradient></defs><circle cx="27" cy="19" r="7.5" fill="url(#ball29)"/><defs><radialGradient id="ball30" cx="0.35" cy="0.3" r="0.75"><stop offset="0" stop-color="#fff"/><stop offset="0.25" stop-color="#ff4040"/><stop offset="1" stop-color="#b00000"/></radialGradient></defs><circle cx="8" cy="25" r="8.5" fill="url(#ball30)"/><defs><radialGradient id="ball31" cx="0.35" cy="0.3" r="0.75"><stop offset="0" stop-color="#fff"/><stop offset="0.25" stop-color="#6080ff"/><stop offset="1" stop-color="#1030c0"/></radialGradient></defs><circle cx="18" cy="24" r="8.5" fill="url(#ball31)"/></svg>
<div class="a" style="left:2425px;top:368px;width:104px;height:37px;background:#EBEBEB;border-top:1.5px solid #FFFFFF;border-left:1px solid #FFFFFF;border-bottom:2px solid #7A7A7A;border-right:2px solid #7A7A7A;box-sizing:border-box;"></div>
<div id="t88" class="t" style="left:2474.0px;top:380.0px;font-size:16.50px;color:#000;font-weight:normal;font-family:'Liberation Sans', sans-serif;transform:scaleX(1.0691);transform-origin:left;">Delete</div>
<svg class="a" style="left:2432px;top:370px" width="38" height="35"><defs><linearGradient id="dbg" x1="0" y1="0" x2="1" y2="1"><stop offset="0" stop-color="#e8f8ff"/><stop offset="0.6" stop-color="#90c8f0"/><stop offset="1" stop-color="#4a90d0"/></linearGradient></defs><path d="M2 5 Q16 0 33 2 L29 29 Q17 36 7 31 Z" fill="url(#dbg)" stroke="#5a9ad8" stroke-width="1"/><ellipse cx="17" cy="30" rx="10" ry="3.5" fill="#c8e8fa" opacity="0.8"/><path d="M24 9 A8 8 0 0 0 11 14" stroke="#10a020" stroke-width="3.5" fill="none"/><path d="M10 20 A8 8 0 0 0 23 25" stroke="#10a020" stroke-width="3.5" fill="none"/><path d="M21 6 L27 10 L21 13 Z M13 23 L7 19 L13 17 Z" fill="#10a020"/></svg>
<div class="a" style="left:2425px;top:405px;width:104px;height:38px;background:#EBEBEB;border-top:1.5px solid #FFFFFF;border-left:1px solid #FFFFFF;border-bottom:2px solid #7A7A7A;border-right:2px solid #7A7A7A;box-sizing:border-box;"></div>
<div id="t89" class="t" style="left:2482.0px;top:417.0px;font-size:16.50px;color:#000;font-weight:normal;font-family:'Liberation Sans', sans-serif;transform:scaleX(0.9724);transform-origin:left;">Refs</div>
<svg class="a" style="left:2432px;top:411px" width="42" height="29"><path d="M0 14 L2 13 L3 10 L5 9 L6 4 L7 1 L9 4 L10 8 L12 9 L13 11 L15 12 L17 10 L19 9 L20 3 L22 0 L25 1 L27 4 L28 5 L29 9 L31 10 L32 8 L34 9 L35 11 L37 12 L40 12 L41 15 L41 28 L0 28 Z" fill="#FFFF00"/><rect x="0" y="15" width="2.5" height="13" fill="#000080"/><rect x="2.5" y="12" width="2.5" height="16" fill="#FF00FF"/><rect x="5" y="3" width="4.5" height="25" fill="#0000FF"/><rect x="9.5" y="9" width="3" height="19" fill="#00FFFF"/><rect x="12.5" y="12" width="5" height="16" fill="#00E000"/><rect x="17.5" y="2" width="9" height="26" fill="#FFFF00"/><rect x="26.5" y="5" width="5" height="23" fill="#800000"/><rect x="31.5" y="11" width="10" height="17" fill="#FF0000"/></svg>
<div class="a" style="left:2432px;top:448px;width:70px;height:22px;background:#EBEBEB;"></div>
<div class="a" style="left:2433px;top:452px;width:14px;height:14px;background:#FFFFFF;border-top:1.5px solid #707070;border-left:1.5px solid #707070;box-sizing:border-box;"></div>
<div id="t90" class="t" style="left:2456.0px;top:450.0px;font-size:16.50px;color:#000;font-weight:normal;font-family:'Liberation Sans', sans-serif;transform:scaleX(1.0549);transform-origin:left;">Edit</div>
<div class="a" style="left:3px;top:481px;width:479px;height:870px;background:#F7F7F7;"></div>
<div class="a" style="left:6px;top:484px;width:473px;height:864px;background:#8F8F8F;"></div>
<div class="a" style="left:8px;top:486px;width:469px;height:860px;background:#EBEBEB;"></div>
<div class="a" style="left:8px;top:486px;width:469px;height:7px;background:#8F8F8F;"></div>
<div class="a" style="left:8px;top:486px;width:469px;height:21px;background:linear-gradient(90deg,#E2E9F4,#ECF1F8);border-radius:6px 6px 0 0;"></div>
<div class="a" style="left:8px;top:507px;width:469px;height:1px;background:#AEB4BC;"></div>
<div id="t91" class="t" style="left:15.0px;top:489.7px;font-size:14.50px;color:#3A3A3A;font-weight:bold;font-family:'Liberation Sans', sans-serif;transform:scaleX(1.1702);transform-origin:left;">Selected color</div>
<div class="a" style="left:20px;top:511px;width:140px;height:19px;background:#F0F0F0;"></div>
<div id="t92" class="t" style="left:22.5px;top:513.0px;font-size:16.00px;color:#000;font-weight:normal;font-family:'Liberation Sans', sans-serif;transform:scaleX(1.0015);transform-origin:left;">RGB Levels</div>
<div class="a" style="left:288px;top:509px;width:159px;height:19px;background:#F0F0F0;"></div>
<div id="t93" class="t" style="left:301.5px;top:511.0px;font-size:16.00px;color:#000;font-weight:normal;font-family:'Liberation Sans', sans-serif;transform:scaleX(1.0954);transform-origin:left;">Current Measure</div>
<div class="a" style="left:17px;top:541px;width:251px;height:111px;background:#F0F0F0;"></div>
<svg class="a" style="left:17px;top:596px;" width="251" height="3" viewBox="0 0 251 3"><line x1="0" y1="1.5" x2="251" y2="1.5" stroke="#8A8A8A" stroke-width="1.2" stroke-dasharray="4.5 3"/></svg>
<div id="t94" class="t" style="left:28.0px;top:616.8px;font-size:17.50px;color:#000;font-weight:bold;font-family:'Liberation Serif', serif;transform:scaleX(1.0413);transform-origin:left;">0.0%</div>
<div id="t95" class="t" style="left:91.0px;top:616.8px;font-size:17.50px;color:#000;font-weight:bold;font-family:'Liberation Serif', serif;transform:scaleX(1.0667);transform-origin:left;">0.0%</div>
<div id="t96" class="t" style="left:155.0px;top:616.8px;font-size:17.50px;color:#000;font-weight:bold;font-family:'Liberation Serif', serif;transform:scaleX(1.0413);transform-origin:left;">0.0%</div>
<div id="t97" class="t" style="left:213.0px;top:616.8px;font-size:17.50px;color:#000;font-weight:bold;font-family:'Liberation Serif', serif;transform:scaleX(1.1331);transform-origin:left;">dE 0.0</div>
<svg class="a" style="left:17px;top:636px;overflow:visible;" width="251" height="14" viewBox="0 0 251 14"><path d="M2 6 Q31 -6 60 6 Z" fill="#A00000" stroke="#000" stroke-width="1"/><path d="M65 6 Q94 -6 123 6 Z" fill="#00A000" stroke="#000" stroke-width="1"/><path d="M128 6 Q157 -6 186 6 Z" fill="#0000A0" stroke="#000" stroke-width="1"/><path d="M191 6 Q220 -6 249 6 Z" fill="#C08810" stroke="#000" stroke-width="1"/><rect x="0" y="6.5" width="251" height="6.5" fill="#000"/></svg>
<div class="a" style="left:20px;top:667px;width:240px;height:91px;background:#F0F0F0;"></div>
<div id="t98" class="t" style="left:44.0px;top:668.4px;font-size:17.00px;color:#000;font-weight:bold;font-family:'Liberation Sans', sans-serif;transform:scaleX(1.0147);transform-origin:left;">Measure</div>
<div id="t99" class="t" style="left:159.0px;top:668.4px;font-size:17.00px;color:#000;font-weight:bold;font-family:'Liberation Sans', sans-serif;transform:scaleX(0.9852);transform-origin:left;">Reference</div>
<div class="a" style="left:20px;top:779px;width:55px;height:19px;background:#EEEEEE;"></div>
<div id="t100" class="t" style="left:22.5px;top:779.5px;font-size:16.00px;color:#000;font-weight:normal;font-family:'Liberation Sans', sans-serif;transform:scaleX(1.1131);transform-origin:left;">Target</div>
<div class="a" style="left:62px;top:797px;width:146px;height:113px;box-sizing:border-box;border:1px solid #111;background:conic-gradient(from 0deg at 50% 50%, #40FF00 0deg, #C0E000 30deg, #FFC000 52deg, #FF6000 70deg, #FF0000 90deg, #FF0060 112deg, #FF0090 128deg, #C000B0 155deg, #8000C0 180deg, #3000F0 210deg, #0000FF 232deg, #0060C0 250deg, #0090A0 270deg, #00C890 300deg, #00FF80 318deg, #20FF30 345deg, #40FF00 360deg);"></div>
<svg class="a" style="left:62px;top:797px;" width="146" height="113" viewBox="0 0 146 113"><rect x="22.5" y="17.5" width="101" height="78" rx="9" fill="#000" stroke="#fff" stroke-width="1"/><line x1="73" y1="17" x2="73" y2="96" stroke="#fff" stroke-width="1" stroke-dasharray="3 2"/><line x1="20" y1="56.5" x2="128" y2="56.5" stroke="#fff" stroke-width="1" stroke-dasharray="3 2"/><ellipse cx="73" cy="56.5" rx="26" ry="20" fill="none" stroke="#fff" stroke-width="1" stroke-dasharray="3 3"/></svg>
<div class="a" style="left:275px;top:538px;width:191px;height:800px;background:#8A8A8A;"></div>
<div class="a" style="left:277px;top:540px;width:189px;height:798px;background:#A0A0A0;"></div>
<div class="a" style="left:277px;top:540.0px;width:72px;height:27.399999999999977px;background:#F0F0F0;"></div>
<div class="a" style="left:277px;top:567.4px;width:74px;height:1.7000000000000455px;background:#8A8A8A;"></div>
<div class="a" style="left:349px;top:540.0px;width:2px;height:28.899999999999977px;background:#8A8A8A;"></div>
<div class="a" style="left:351px;top:540.0px;width:92px;height:27.899999999999977px;background:#FFFFFF;"></div>
<div class="a" style="left:351px;top:567.9px;width:92px;height:1.2000000000000455px;background:#C8C8C8;"></div>
<div id="t101" class="t" style="left:285.5px;top:547.8px;font-size:15.00px;color:#000;font-weight:bold;font-family:'Liberation Sans', sans-serif;transform:scaleX(1.0574);transform-origin:left;">Y cd/m&sup2;</div>
<div class="a" style="left:277px;top:568.9px;width:72px;height:27.300000000000068px;background:#F0F0F0;"></div>
<div class="a" style="left:277px;top:596.2px;width:74px;height:1.7999999999999545px;background:#8A8A8A;"></div>
<div class="a" style="left:349px;top:568.9px;width:2px;height:28.800000000000068px;background:#8A8A8A;"></div>
<div class="a" style="left:351px;top:568.9px;width:92px;height:27.800000000000068px;background:#FFFFFF;"></div>
<div class="a" style="left:351px;top:596.7px;width:92px;height:1.2999999999999545px;background:#C8C8C8;"></div>
<div id="t102" class="t" style="left:297.5px;top:576.7px;font-size:15.00px;color:#000;font-weight:bold;font-family:'Liberation Sans', sans-serif;transform:scaleX(0.9981);transform-origin:left;">Y ftL</div>
<div class="a" style="left:277px;top:597.7px;width:72px;height:27.299999999999955px;background:#F0F0F0;"></div>
<div class="a" style="left:277px;top:625.0px;width:74px;height:1.7999999999999545px;background:#8A8A8A;"></div>
<div class="a" style="left:349px;top:597.7px;width:2px;height:28.799999999999955px;background:#8A8A8A;"></div>
<div class="a" style="left:351px;top:597.7px;width:92px;height:27.799999999999955px;background:#FFFFFF;"></div>
<div class="a" style="left:351px;top:625.5px;width:92px;height:1.2999999999999545px;background:#C8C8C8;"></div>
<div id="t103" class="t" style="left:306.0px;top:605.5px;font-size:15.00px;color:#000;font-weight:bold;font-family:'Liberation Sans', sans-serif;transform:scaleX(1.0546);transform-origin:left;">T&deg;</div>
<div class="a" style="left:277px;top:626.5px;width:72px;height:27.399999999999977px;background:#F0F0F0;"></div>
<div class="a" style="left:277px;top:653.9px;width:74px;height:1.8000000000000682px;background:#8A8A8A;"></div>
<div class="a" style="left:349px;top:626.5px;width:2px;height:28.899999999999977px;background:#8A8A8A;"></div>
<div class="a" style="left:351px;top:626.5px;width:92px;height:27.899999999999977px;background:#E0E0E0;"></div>
<div class="a" style="left:351px;top:654.4px;width:92px;height:1.3000000000000682px;background:#C8C8C8;"></div>
<div id="t104" class="t" style="left:314.0px;top:634.4px;font-size:15.00px;color:#000;font-weight:bold;font-family:'Liberation Sans', sans-serif;transform-origin:center;translate:-50% 0;">X</div>
<div class="a" style="left:277px;top:655.4px;width:72px;height:27.399999999999977px;background:#F0F0F0;"></div>
<div class="a" style="left:277px;top:682.8px;width:74px;height:1.7000000000000455px;background:#8A8A8A;"></div>
<div class="a" style="left:349px;top:655.4px;width:2px;height:28.800000000000068px;background:#8A8A8A;"></div>
<div class="a" style="left:351px;top:655.4px;width:92px;height:27.800000000000068px;background:#E0E0E0;"></div>
<div class="a" style="left:351px;top:683.2px;width:92px;height:1.2999999999999545px;background:#C8C8C8;"></div>
<div id="t105" class="t" style="left:314.0px;top:663.2px;font-size:15.00px;color:#000;font-weight:bold;font-family:'Liberation Sans', sans-serif;transform-origin:center;translate:-50% 0;">Y</div>
<div class="a" style="left:277px;top:684.2px;width:72px;height:27.399999999999977px;background:#F0F0F0;"></div>
<div class="a" style="left:277px;top:711.6px;width:74px;height:1.7999999999999545px;background:#8A8A8A;"></div>
<div class="a" style="left:349px;top:684.2px;width:2px;height:28.899999999999977px;background:#8A8A8A;"></div>
<div class="a" style="left:351px;top:684.2px;width:92px;height:27.899999999999977px;background:#E0E0E0;"></div>
<div class="a" style="left:351px;top:712.1px;width:92px;height:1.2999999999999545px;background:#C8C8C8;"></div>
<div id="t106" class="t" style="left:314.0px;top:692.1px;font-size:15.00px;color:#000;font-weight:bold;font-family:'Liberation Sans', sans-serif;transform-origin:center;translate:-50% 0;">Z</div>
<div class="a" style="left:277px;top:713.1px;width:72px;height:27.399999999999977px;background:#F0F0F0;"></div>
<div class="a" style="left:277px;top:740.5px;width:74px;height:1.7000000000000455px;background:#8A8A8A;"></div>
<div class="a" style="left:349px;top:713.1px;width:2px;height:28.899999999999977px;background:#8A8A8A;"></div>
<div class="a" style="left:351px;top:713.1px;width:92px;height:27.899999999999977px;background:#FFFFFF;"></div>
<div class="a" style="left:351px;top:741.0px;width:92px;height:1.2000000000000455px;background:#C8C8C8;"></div>
<div id="t107" class="t" style="left:314.0px;top:720.9px;font-size:15.00px;color:#000;font-weight:bold;font-family:'Liberation Sans', sans-serif;transform-origin:center;translate:-50% 0;">R</div>
<div class="a" style="left:277px;top:742.0px;width:72px;height:27.299999999999955px;background:#F0F0F0;"></div>
<div class="a" style="left:277px;top:769.3px;width:74px;height:1.8000000000000682px;background:#8A8A8A;"></div>
<div class="a" style="left:349px;top:742.0px;width:2px;height:28.799999999999955px;background:#8A8A8A;"></div>
<div class="a" style="left:351px;top:742.0px;width:92px;height:27.799999999999955px;background:#FFFFFF;"></div>
<div class="a" style="left:351px;top:769.8px;width:92px;height:1.3000000000000682px;background:#C8C8C8;"></div>
<div id="t108" class="t" style="left:314.0px;top:749.8px;font-size:15.00px;color:#000;font-weight:bold;font-family:'Liberation Sans', sans-serif;transform-origin:center;translate:-50% 0;">G</div>
<div class="a" style="left:277px;top:770.8px;width:72px;height:27.40000000000009px;background:#F0F0F0;"></div>
<div class="a" style="left:277px;top:798.2px;width:74px;height:1.7999999999999545px;background:#8A8A8A;"></div>
<div class="a" style="left:349px;top:770.8px;width:2px;height:28.90000000000009px;background:#8A8A8A;"></div>
<div class="a" style="left:351px;top:770.8px;width:92px;height:27.90000000000009px;background:#FFFFFF;"></div>
<div class="a" style="left:351px;top:798.7px;width:92px;height:1.2999999999999545px;background:#C8C8C8;"></div>
<div id="t109" class="t" style="left:314.0px;top:778.6px;font-size:15.00px;color:#000;font-weight:bold;font-family:'Liberation Sans', sans-serif;transform-origin:center;translate:-50% 0;">B</div>
<div class="a" style="left:277px;top:799.7px;width:72px;height:27.299999999999955px;background:#F0F0F0;"></div>
<div class="a" style="left:277px;top:827.0px;width:74px;height:1.7999999999999545px;background:#8A8A8A;"></div>
<div class="a" style="left:349px;top:799.7px;width:2px;height:28.799999999999955px;background:#8A8A8A;"></div>
<div class="a" style="left:351px;top:799.7px;width:92px;height:27.799999999999955px;background:#E0E0E0;"></div>
<div class="a" style="left:351px;top:827.5px;width:92px;height:1.2999999999999545px;background:#C8C8C8;"></div>
<div id="t110" class="t" style="left:314.0px;top:807.5px;font-size:15.00px;color:#000;font-weight:bold;font-family:'Liberation Sans', sans-serif;transform-origin:center;translate:-50% 0;">x</div>
<div class="a" style="left:277px;top:828.5px;width:72px;height:27.399999999999977px;background:#F0F0F0;"></div>
<div class="a" style="left:277px;top:855.9px;width:74px;height:1.7000000000000455px;background:#8A8A8A;"></div>
<div class="a" style="left:349px;top:828.5px;width:2px;height:28.899999999999977px;background:#8A8A8A;"></div>
<div class="a" style="left:351px;top:828.5px;width:92px;height:27.899999999999977px;background:#E0E0E0;"></div>
<div class="a" style="left:351px;top:856.4px;width:92px;height:1.2000000000000455px;background:#C8C8C8;"></div>
<div id="t111" class="t" style="left:314.0px;top:836.3px;font-size:15.00px;color:#000;font-weight:bold;font-family:'Liberation Sans', sans-serif;transform-origin:center;translate:-50% 0;">y</div>
<div class="a" style="left:277px;top:857.4px;width:72px;height:27.300000000000068px;background:#F0F0F0;"></div>
<div class="a" style="left:277px;top:884.7px;width:74px;height:1.7999999999999545px;background:#8A8A8A;"></div>
<div class="a" style="left:349px;top:857.4px;width:2px;height:28.800000000000068px;background:#8A8A8A;"></div>
<div class="a" style="left:351px;top:857.4px;width:92px;height:27.800000000000068px;background:#E0E0E0;"></div>
<div class="a" style="left:351px;top:885.2px;width:92px;height:1.2999999999999545px;background:#C8C8C8;"></div>
<div id="t112" class="t" style="left:314.0px;top:865.2px;font-size:15.00px;color:#000;font-weight:bold;font-family:'Liberation Sans', sans-serif;transform-origin:center;translate:-50% 0;">Y</div>
<div class="a" style="left:277px;top:886.2px;width:72px;height:27.299999999999955px;background:#F0F0F0;"></div>
<div class="a" style="left:277px;top:913.5px;width:74px;height:1.7999999999999545px;background:#8A8A8A;"></div>
<div class="a" style="left:349px;top:886.2px;width:2px;height:28.799999999999955px;background:#8A8A8A;"></div>
<div class="a" style="left:351px;top:886.2px;width:92px;height:27.799999999999955px;background:#FFFFFF;"></div>
<div class="a" style="left:351px;top:914.0px;width:92px;height:1.2999999999999545px;background:#C8C8C8;"></div>
<div id="t113" class="t" style="left:314.0px;top:894.0px;font-size:15.00px;color:#000;font-weight:bold;font-family:'Liberation Sans', sans-serif;transform-origin:center;translate:-50% 0;">x</div>
<div class="a" style="left:277px;top:915.0px;width:72px;height:27.399999999999977px;background:#F0F0F0;"></div>
<div class="a" style="left:277px;top:942.4px;width:74px;height:1.8000000000000682px;background:#8A8A8A;"></div>
<div class="a" style="left:349px;top:915.0px;width:2px;height:28.899999999999977px;background:#8A8A8A;"></div>
<div class="a" style="left:351px;top:915.0px;width:92px;height:27.899999999999977px;background:#FFFFFF;"></div>
<div class="a" style="left:351px;top:942.9px;width:92px;height:1.3000000000000682px;background:#C8C8C8;"></div>
<div id="t114" class="t" style="left:314.0px;top:922.9px;font-size:15.00px;color:#000;font-weight:bold;font-family:'Liberation Sans', sans-serif;transform-origin:center;translate:-50% 0;">y</div>
<div class="a" style="left:277px;top:943.9px;width:72px;height:27.300000000000068px;background:#F0F0F0;"></div>
<div class="a" style="left:277px;top:971.2px;width:74px;height:1.7999999999999545px;background:#8A8A8A;"></div>
<div class="a" style="left:349px;top:943.9px;width:2px;height:28.899999999999977px;background:#8A8A8A;"></div>
<div class="a" style="left:351px;top:943.9px;width:92px;height:27.899999999999977px;background:#FFFFFF;"></div>
<div class="a" style="left:351px;top:971.8px;width:92px;height:1.2000000000000455px;background:#C8C8C8;"></div>
<div id="t115" class="t" style="left:314.0px;top:951.7px;font-size:15.00px;color:#000;font-weight:bold;font-family:'Liberation Sans', sans-serif;transform-origin:center;translate:-50% 0;">z</div>
<div class="a" style="left:277px;top:972.8px;width:72px;height:27.300000000000068px;background:#F0F0F0;"></div>
<div class="a" style="left:277px;top:1000.1px;width:74px;height:1.7999999999999545px;background:#8A8A8A;"></div>
<div class="a" style="left:349px;top:972.8px;width:2px;height:28.800000000000068px;background:#8A8A8A;"></div>
<div class="a" style="left:351px;top:972.8px;width:92px;height:27.800000000000068px;background:#E0E0E0;"></div>
<div class="a" style="left:351px;top:1000.6px;width:92px;height:1.2999999999999545px;background:#C8C8C8;"></div>
<div id="t116" class="t" style="left:314.0px;top:980.6px;font-size:15.00px;color:#000;font-weight:bold;font-family:'Liberation Sans', sans-serif;transform-origin:center;translate:-50% 0;">L</div>
<div class="a" style="left:277px;top:1001.6px;width:72px;height:27.399999999999977px;background:#F0F0F0;"></div>
<div class="a" style="left:277px;top:1029.0px;width:74px;height:1.7999999999999545px;background:#8A8A8A;"></div>
<div class="a" style="left:349px;top:1001.6px;width:2px;height:28.899999999999977px;background:#8A8A8A;"></div>
<div class="a" style="left:351px;top:1001.6px;width:92px;height:27.899999999999977px;background:#E0E0E0;"></div>
<div class="a" style="left:351px;top:1029.5px;width:92px;height:1.2999999999999545px;background:#C8C8C8;"></div>
<div id="t117" class="t" style="left:314.0px;top:1009.4px;font-size:15.00px;color:#000;font-weight:bold;font-family:'Liberation Sans', sans-serif;transform-origin:center;translate:-50% 0;">a</div>
<div class="a" style="left:277px;top:1030.5px;width:72px;height:27.299999999999955px;background:#F0F0F0;"></div>
<div class="a" style="left:277px;top:1057.8px;width:74px;height:1.7999999999999545px;background:#8A8A8A;"></div>
<div class="a" style="left:349px;top:1030.5px;width:2px;height:28.799999999999955px;background:#8A8A8A;"></div>
<div class="a" style="left:351px;top:1030.5px;width:92px;height:27.799999999999955px;background:#E0E0E0;"></div>
<div class="a" style="left:351px;top:1058.3px;width:92px;height:1.2999999999999545px;background:#C8C8C8;"></div>
<div id="t118" class="t" style="left:314.0px;top:1038.3px;font-size:15.00px;color:#000;font-weight:bold;font-family:'Liberation Sans', sans-serif;transform-origin:center;translate:-50% 0;">b</div>
<div class="a" style="left:277px;top:1059.3px;width:72px;height:27.40000000000009px;background:#F0F0F0;"></div>
<div class="a" style="left:277px;top:1086.7px;width:74px;height:1.7999999999999545px;background:#8A8A8A;"></div>
<div class="a" style="left:349px;top:1059.3px;width:2px;height:28.90000000000009px;background:#8A8A8A;"></div>
<div class="a" style="left:351px;top:1059.3px;width:92px;height:27.90000000000009px;background:#FFFFFF;"></div>
<div class="a" style="left:351px;top:1087.2px;width:92px;height:1.2999999999999545px;background:#C8C8C8;"></div>
<div id="t119" class="t" style="left:314.0px;top:1067.1px;font-size:15.00px;color:#000;font-weight:bold;font-family:'Liberation Sans', sans-serif;transform-origin:center;translate:-50% 0;">L</div>
<div class="a" style="left:277px;top:1088.2px;width:72px;height:27.299999999999955px;background:#F0F0F0;"></div>
<div class="a" style="left:277px;top:1115.5px;width:74px;height:1.7999999999999545px;background:#8A8A8A;"></div>
<div class="a" style="left:349px;top:1088.2px;width:2px;height:28.799999999999955px;background:#8A8A8A;"></div>
<div class="a" style="left:351px;top:1088.2px;width:92px;height:27.799999999999955px;background:#FFFFFF;"></div>
<div class="a" style="left:351px;top:1116.0px;width:92px;height:1.2999999999999545px;background:#C8C8C8;"></div>
<div id="t120" class="t" style="left:314.0px;top:1096.0px;font-size:15.00px;color:#000;font-weight:bold;font-family:'Liberation Sans', sans-serif;transform-origin:center;translate:-50% 0;">C</div>
<div class="a" style="left:277px;top:1117.0px;width:72px;height:27.299999999999955px;background:#F0F0F0;"></div>
<div class="a" style="left:277px;top:1144.3px;width:74px;height:1.7999999999999545px;background:#8A8A8A;"></div>
<div class="a" style="left:349px;top:1117.0px;width:2px;height:28.799999999999955px;background:#8A8A8A;"></div>
<div class="a" style="left:351px;top:1117.0px;width:92px;height:27.799999999999955px;background:#FFFFFF;"></div>
<div class="a" style="left:351px;top:1144.8px;width:92px;height:1.2999999999999545px;background:#C8C8C8;"></div>
<div id="t121" class="t" style="left:314.0px;top:1124.8px;font-size:15.00px;color:#000;font-weight:bold;font-family:'Liberation Sans', sans-serif;transform-origin:center;translate:-50% 0;">H</div>
<div class="a" style="left:277px;top:1145.8px;width:72px;height:27.40000000000009px;background:#F0F0F0;"></div>
<div class="a" style="left:277px;top:1173.2px;width:74px;height:1.7999999999999545px;background:#8A8A8A;"></div>
<div class="a" style="left:349px;top:1145.8px;width:2px;height:28.90000000000009px;background:#8A8A8A;"></div>
<div class="a" style="left:351px;top:1145.8px;width:92px;height:27.90000000000009px;background:#E0E0E0;"></div>
<div class="a" style="left:351px;top:1173.7px;width:92px;height:1.2999999999999545px;background:#C8C8C8;"></div>
<div id="t122" class="t" style="left:314.0px;top:1153.7px;font-size:15.00px;color:#000;font-weight:bold;font-family:'Liberation Sans', sans-serif;transform-origin:center;translate:-50% 0;">L</div>
<div class="a" style="left:277px;top:1174.7px;width:72px;height:27.399999999999864px;background:#F0F0F0;"></div>
<div class="a" style="left:277px;top:1202.1px;width:74px;height:1.800000000000182px;background:#8A8A8A;"></div>
<div class="a" style="left:349px;top:1174.7px;width:2px;height:28.899999999999864px;background:#8A8A8A;"></div>
<div class="a" style="left:351px;top:1174.7px;width:92px;height:27.899999999999864px;background:#E0E0E0;"></div>
<div class="a" style="left:351px;top:1202.6px;width:92px;height:1.300000000000182px;background:#C8C8C8;"></div>
<div id="t123" class="t" style="left:314.0px;top:1182.5px;font-size:15.00px;color:#000;font-weight:bold;font-family:'Liberation Sans', sans-serif;transform-origin:center;translate:-50% 0;">M</div>
<div class="a" style="left:277px;top:1203.6px;width:72px;height:27.300000000000182px;background:#F0F0F0;"></div>
<div class="a" style="left:277px;top:1230.9px;width:74px;height:1.7999999999999545px;background:#8A8A8A;"></div>
<div class="a" style="left:349px;top:1203.6px;width:2px;height:28.800000000000182px;background:#8A8A8A;"></div>
<div class="a" style="left:351px;top:1203.6px;width:92px;height:27.800000000000182px;background:#E0E0E0;"></div>
<div class="a" style="left:351px;top:1231.4px;width:92px;height:1.2999999999999545px;background:#C8C8C8;"></div>
<div id="t124" class="t" style="left:314.0px;top:1211.4px;font-size:15.00px;color:#000;font-weight:bold;font-family:'Liberation Sans', sans-serif;transform-origin:center;translate:-50% 0;">S</div>
<div class="a" style="left:443px;top:540px;width:23px;height:798px;background:#F0F0F0;"></div>
<svg class="a" style="left:448px;top:545px;" width="13" height="9" viewBox="0 0 13 9"><path d="M1 8 L6.5 2 L12 8" stroke="#C8C8C8" stroke-width="2" fill="none"/></svg>
<svg class="a" style="left:448px;top:1322px;" width="13" height="9" viewBox="0 0 13 9"><path d="M1 1 L6.5 7 L12 1" stroke="#C8C8C8" stroke-width="2" fill="none"/></svg>
<div class="a" style="left:486px;top:481px;width:2046px;height:870px;background:#F7F7F7;"></div>
<div class="a" style="left:489px;top:484px;width:2040px;height:864px;background:#8F8F8F;"></div>
<div class="a" style="left:491px;top:486px;width:2036px;height:860px;background:#EAEAEA;"></div>
<div class="a" style="left:491px;top:486px;width:2036px;height:7px;background:#8F8F8F;"></div>
<div class="a" style="left:491px;top:486px;width:2036px;height:21px;background:linear-gradient(90deg,#E2E9F4,#ECF1F8);border-radius:6px 6px 0 0;"></div>
<div class="a" style="left:491px;top:507px;width:2036px;height:1px;background:#AEB4BC;"></div>
<div id="t125" class="t" style="left:498.0px;top:489.7px;font-size:14.50px;color:#3A3A3A;font-weight:bold;font-family:'Liberation Sans', sans-serif;transform:scaleX(1.2100);transform-origin:left;">Information</div>
<div class="a" style="left:495px;top:512px;width:376px;height:28px;background:#F0F0F0;border-top:2px solid #6F6F6F;border-left:2px solid #6F6F6F;box-sizing:border-box;"></div>
<div class="a" style="left:498px;top:516px;width:350px;height:22px;background:#0078D7;"></div>
<div id="t126" class="t" style="left:501.0px;top:518.1px;font-size:17.00px;color:#FFFFFF;font-weight:normal;font-family:'Liberation Sans', sans-serif;transform:scaleX(1.0474);transform-origin:left;">Target - CIE</div>
<div class="a" style="left:848px;top:515px;width:23px;height:24px;background:#EEEEEE;border-right:2px solid #6F6F6F;border-bottom:2px solid #6F6F6F;box-sizing:border-box;"></div>
<svg class="a" style="left:853px;top:522px;" width="12" height="10" viewBox="0 0 12 10"><path d="M1 2 H10 L5.5 8 Z" fill="#000"/></svg>
<div class="a" style="left:497px;top:549px;width:1016px;height:791px;box-sizing:border-box;border:1px solid #202020;background:conic-gradient(from 0deg at 50.6% 50.0%, #40FF00 0deg, #A0E000 37deg, #FFC000 52deg, #FF8000 64deg, #FF0004 90deg, #FF0040 107deg, #FF0090 128deg, #D000A0 143deg, #8000C0 180deg, #2000F0 218deg, #0000FF 232deg, #0050D0 253deg, #0090A0 270deg, #00D090 296deg, #00FF80 308deg, #00FF50 322deg, #40FF00 360deg);"></div>
<svg class="a" style="left:497px;top:549px;" width="1016" height="791" viewBox="0 0 1016 791"><rect x="152.5" y="118.5" width="711" height="553" rx="12" fill="#000" stroke="#fff" stroke-width="1.3"/><line x1="508.5" y1="82" x2="508.5" y2="712" stroke="#fff" stroke-width="1.2" stroke-dasharray="4 3"/><line x1="104" y1="395.5" x2="913" y2="395.5" stroke="#fff" stroke-width="1.2" stroke-dasharray="4 3"/><ellipse cx="508.5" cy="395.5" rx="203" ry="157" fill="none" stroke="#fff" stroke-width="1.2" stroke-dasharray="3 3"/></svg>
<svg class="a" style="left:840px;top:626px;" width="110" height="90" viewBox="0 0 110 90"><defs><linearGradient id="ttg" x1="0" y1="0" x2="1" y2="0.3"><stop offset="0" stop-color="#E8A030"/><stop offset="0.55" stop-color="#909060"/><stop offset="1" stop-color="#10708A"/></linearGradient><filter id="ttb" x="-20%" y="-20%" width="140%" height="140%"><feGaussianBlur stdDeviation="2"/></filter></defs><rect x="12" y="12" width="90" height="50" rx="6" fill="#707070" opacity="0.7" filter="url(#ttb)"/><rect x="80" y="16" width="22" height="30" rx="4" fill="#1868F0"/><path d="M28 58 L26 82 L50 60 Z" fill="#20D060"/><rect x="6" y="6" width="86" height="47" rx="7" fill="url(#ttg)" stroke="#C8A040" stroke-width="1"/><path d="M24 52 L27 70 L42 52 Z" fill="#B09040"/></svg>
<div id="t127" class="t" style="left:861.0px;top:647.7px;font-size:14.50px;color:#1A1A1A;font-weight:normal;font-family:'Liberation Sans', sans-serif;transform:scaleX(1.0631);transform-origin:left;">No data</div>
<div class="a" style="left:1513px;top:549px;width:1009px;height:785px;background:#8A8A8A;"></div>
<div class="a" style="left:1517px;top:553px;width:1005px;height:781px;background:#03090C;"></div>
<div class="a" style="left:2522px;top:553px;width:5px;height:785px;background:#F7F7F7;"></div>
<svg class="a" style="left:1517px;top:553px" width="1005" height="781" viewBox="1517 553 1005 781"><line x1="1601.5" y1="553" x2="1601.5" y2="1334" stroke="#3C3C3C" stroke-width="1.6"/><line x1="1713.2" y1="553" x2="1713.2" y2="1334" stroke="#3C3C3C" stroke-width="1.6"/><line x1="1824.9" y1="553" x2="1824.9" y2="1334" stroke="#3C3C3C" stroke-width="1.6"/><line x1="1936.6" y1="553" x2="1936.6" y2="1334" stroke="#3C3C3C" stroke-width="1.6"/><line x1="2048.3" y1="553" x2="2048.3" y2="1334" stroke="#3C3C3C" stroke-width="1.6"/><line x1="2160.0" y1="553" x2="2160.0" y2="1334" stroke="#3C3C3C" stroke-width="1.6"/><line x1="2271.7" y1="553" x2="2271.7" y2="1334" stroke="#3C3C3C" stroke-width="1.6"/><line x1="2383.4" y1="553" x2="2383.4" y2="1334" stroke="#3C3C3C" stroke-width="1.6"/><line x1="1517" y1="1217.0" x2="2522" y2="1217.0" stroke="#3C3C3C" stroke-width="1.6"/><line x1="1517" y1="1139.0" x2="2522" y2="1139.0" stroke="#3C3C3C" stroke-width="1.6"/><line x1="1517" y1="1061.0" x2="2522" y2="1061.0" stroke="#3C3C3C" stroke-width="1.6"/><line x1="1517" y1="983.0" x2="2522" y2="983.0" stroke="#3C3C3C" stroke-width="1.6"/><line x1="1517" y1="905.0" x2="2522" y2="905.0" stroke="#3C3C3C" stroke-width="1.6"/><line x1="1517" y1="827.0" x2="2522" y2="827.0" stroke="#3C3C3C" stroke-width="1.6"/><line x1="1517" y1="749.0" x2="2522" y2="749.0" stroke="#3C3C3C" stroke-width="1.6"/><line x1="1517" y1="671.0" x2="2522" y2="671.0" stroke="#3C3C3C" stroke-width="1.6"/><line x1="1517" y1="593.0" x2="2522" y2="593.0" stroke="#3C3C3C" stroke-width="1.6"/></svg>
<div id="ciefb" class="a" style="left:1517px;top:553px;width:1005px;height:781px;"><div class="a" style="left:0;top:0;width:1005px;height:781px;background:conic-gradient(from 0deg at 433.8px 485.4px, #3CC600 0deg, #6BC600 10deg, #8BC600 20deg, #A8C600 30deg, #C4C600 40deg, #C6AD00 50deg, #C69300 60deg, #C67800 70deg, #C65600 80deg, #C6000B 90deg, #C60052 100deg, #C6006B 110deg, #C6007D 120deg, #C6008B 130deg, #C60097 140deg, #C600A3 150deg, #C600AF 160deg, #C600BD 170deg, #C000C6 180deg, #AD00C6 190deg, #9600C6 200deg, #7400C6 210deg, #2700C6 220deg, #006BC6 230deg, #008EC6 240deg, #00A5C6 250deg, #00B7C6 260deg, #00C6C6 270deg, #00C6B9 280deg, #00C6AD 290deg, #00C6A2 300deg, #00C696 310deg, #00C68A 320deg, #00C67B 330deg, #00C668 340deg, #00C647 350deg, #3CC600 360deg);clip-path:path('M891.4 525.9 C887.0 522.8 886.4 522.0 865.0 507.0 C843.6 492.0 800.1 461.8 763.0 435.9 C725.9 410.0 680.9 378.4 642.2 351.4 C603.5 324.4 564.0 296.8 530.8 274.0 C497.6 251.2 461.7 227.5 443.0 214.8 C424.3 202.1 433.2 207.2 418.6 197.6 C404.0 188.0 373.7 168.4 355.2 157.0 C336.7 145.6 319.1 135.8 307.4 129.2 C295.7 122.6 294.8 122.0 285.2 117.6 C275.6 113.2 260.3 106.9 249.7 102.6 C239.2 98.3 230.8 94.6 221.9 92.0 C213.0 89.4 202.8 87.9 196.3 87.0 C189.8 86.1 186.9 86.5 183.0 86.4 C179.1 86.3 177.3 85.5 173.0 86.3 C168.7 87.1 164.6 88.1 157.0 91.2 C149.4 94.3 134.7 100.3 127.2 104.7 C119.7 109.1 116.6 111.0 111.8 117.8 C107.0 124.6 101.3 137.2 98.3 145.4 C95.3 153.6 95.2 158.5 93.8 167.0 C92.4 175.5 90.8 182.8 89.7 196.6 C88.6 210.4 87.7 237.1 87.4 250.0 C87.1 262.9 87.0 257.3 88.1 274.3 C89.2 291.3 90.6 325.9 94.1 351.9 C97.6 377.9 102.7 404.3 109.2 430.3 C115.7 456.3 123.8 482.0 133.2 508.1 C142.6 534.2 153.6 560.8 165.6 586.9 C177.6 613.0 195.5 646.8 205.1 664.6 C214.7 682.4 218.2 686.6 223.0 693.7 C227.8 700.8 229.8 702.5 234.0 707.0 C238.2 711.5 243.3 716.7 248.0 720.5 C252.7 724.3 259.7 728.4 262.0 730.0 Z');"></div><svg class="a" style="left:0;top:0;clip-path:path('M891.4 525.9 C887.0 522.8 886.4 522.0 865.0 507.0 C843.6 492.0 800.1 461.8 763.0 435.9 C725.9 410.0 680.9 378.4 642.2 351.4 C603.5 324.4 564.0 296.8 530.8 274.0 C497.6 251.2 461.7 227.5 443.0 214.8 C424.3 202.1 433.2 207.2 418.6 197.6 C404.0 188.0 373.7 168.4 355.2 157.0 C336.7 145.6 319.1 135.8 307.4 129.2 C295.7 122.6 294.8 122.0 285.2 117.6 C275.6 113.2 260.3 106.9 249.7 102.6 C239.2 98.3 230.8 94.6 221.9 92.0 C213.0 89.4 202.8 87.9 196.3 87.0 C189.8 86.1 186.9 86.5 183.0 86.4 C179.1 86.3 177.3 85.5 173.0 86.3 C168.7 87.1 164.6 88.1 157.0 91.2 C149.4 94.3 134.7 100.3 127.2 104.7 C119.7 109.1 116.6 111.0 111.8 117.8 C107.0 124.6 101.3 137.2 98.3 145.4 C95.3 153.6 95.2 158.5 93.8 167.0 C92.4 175.5 90.8 182.8 89.7 196.6 C88.6 210.4 87.7 237.1 87.4 250.0 C87.1 262.9 87.0 257.3 88.1 274.3 C89.2 291.3 90.6 325.9 94.1 351.9 C97.6 377.9 102.7 404.3 109.2 430.3 C115.7 456.3 123.8 482.0 133.2 508.1 C142.6 534.2 153.6 560.8 165.6 586.9 C177.6 613.0 195.5 646.8 205.1 664.6 C214.7 682.4 218.2 686.6 223.0 693.7 C227.8 700.8 229.8 702.5 234.0 707.0 C238.2 711.5 243.3 716.7 248.0 720.5 C252.7 724.3 259.7 728.4 262.0 730.0 Z');" width="1005" height="781"><line x1="84.5" y1="0" x2="84.5" y2="781" stroke="#3E4343" stroke-width="1.6"/><line x1="196.2" y1="0" x2="196.2" y2="781" stroke="#3E4343" stroke-width="1.6"/><line x1="307.9" y1="0" x2="307.9" y2="781" stroke="#3E4343" stroke-width="1.6"/><line x1="419.6" y1="0" x2="419.6" y2="781" stroke="#3E4343" stroke-width="1.6"/><line x1="531.3" y1="0" x2="531.3" y2="781" stroke="#3E4343" stroke-width="1.6"/><line x1="643.0" y1="0" x2="643.0" y2="781" stroke="#3E4343" stroke-width="1.6"/><line x1="754.7" y1="0" x2="754.7" y2="781" stroke="#3E4343" stroke-width="1.6"/><line x1="866.4" y1="0" x2="866.4" y2="781" stroke="#3E4343" stroke-width="1.6"/><line x1="0" y1="664.0" x2="1005" y2="664.0" stroke="#3E4343" stroke-width="1.6"/><line x1="0" y1="586.0" x2="1005" y2="586.0" stroke="#3E4343" stroke-width="1.6"/><line x1="0" y1="508.0" x2="1005" y2="508.0" stroke="#3E4343" stroke-width="1.6"/><line x1="0" y1="430.0" x2="1005" y2="430.0" stroke="#3E4343" stroke-width="1.6"/><line x1="0" y1="352.0" x2="1005" y2="352.0" stroke="#3E4343" stroke-width="1.6"/><line x1="0" y1="274.0" x2="1005" y2="274.0" stroke="#3E4343" stroke-width="1.6"/><line x1="0" y1="196.0" x2="1005" y2="196.0" stroke="#3E4343" stroke-width="1.6"/><line x1="0" y1="118.0" x2="1005" y2="118.0" stroke="#3E4343" stroke-width="1.6"/><line x1="0" y1="40.0" x2="1005" y2="40.0" stroke="#3E4343" stroke-width="1.6"/></svg><div class="a" style="left:0;top:0;width:1005px;height:781px;background:radial-gradient(circle 230px at 433.8px 485.4px, #FFFFFF 0%, rgba(255,255,255,0.85) 25%, rgba(255,255,255,0) 100%), conic-gradient(from 0deg at 433.8px 485.4px, #50FF1C 0deg, #8BFF1E 10deg, #B4FF1F 20deg, #D7FF20 30deg, #FBFF22 40deg, #FFDE1F 50deg, #FFBD1D 60deg, #FF9B1A 70deg, #FF7018 80deg, #FF1519 90deg, #FF186B 100deg, #FF198B 110deg, #FF1BA1 120deg, #FF1CB2 130deg, #FF1DC2 140deg, #FF1ED1 150deg, #FF20E1 160deg, #FF21F2 170deg, #F622FF 180deg, #DE21FF 190deg, #C11FFF 200deg, #971EFF 210deg, #381CFF 220deg, #1F8BFF 230deg, #21B8FF 240deg, #23D5FF 250deg, #25EBFF 260deg, #26FFFE 270deg, #25FFED 280deg, #24FFDE 290deg, #23FFD0 300deg, #22FFC2 310deg, #21FFB2 320deg, #20FFA0 330deg, #1FFF87 340deg, #1DFF5E 350deg, #50FF1C 360deg);clip-path:path('M799.4 484.6 L419.6 274.0 L252.0 695.2 Z');"></div></div>
<canvas id="ciecv" class="a" style="left:1517px;top:553px" width="1005" height="781"></canvas>
<svg class="a" style="left:1517px;top:553px" width="1005" height="781" viewBox="1517 553 1005 781"><path d="M2408.4 1078.9 C2404.0 1075.8 2403.4 1075.0 2382.0 1060.0 C2360.6 1045.0 2317.1 1014.8 2280.0 988.9 C2242.9 963.0 2197.9 931.4 2159.2 904.4 C2120.5 877.4 2081.0 849.8 2047.8 827.0 C2014.6 804.2 1978.7 780.5 1960.0 767.8 C1941.3 755.1 1950.2 760.2 1935.6 750.6 C1921.0 741.0 1890.7 721.4 1872.2 710.0 C1853.7 698.6 1836.1 688.8 1824.4 682.2 C1812.7 675.6 1811.8 675.0 1802.2 670.6 C1792.6 666.2 1777.2 659.9 1766.7 655.6 C1756.2 651.3 1747.8 647.6 1738.9 645.0 C1730.0 642.4 1719.8 640.9 1713.3 640.0 C1706.8 639.1 1703.9 639.5 1700.0 639.4 C1696.1 639.3 1694.3 638.5 1690.0 639.3 C1685.7 640.1 1681.6 641.1 1674.0 644.2 C1666.4 647.3 1651.7 653.3 1644.2 657.7 C1636.7 662.1 1633.6 664.0 1628.8 670.8 C1624.0 677.6 1618.3 690.2 1615.3 698.4 C1612.3 706.6 1612.2 711.5 1610.8 720.0 C1609.4 728.5 1607.8 735.8 1606.7 749.6 C1605.6 763.4 1604.7 790.0 1604.4 803.0 C1604.1 816.0 1604.0 810.3 1605.1 827.3 C1606.2 844.3 1607.6 878.9 1611.1 904.9 C1614.6 930.9 1619.7 957.3 1626.2 983.3 C1632.7 1009.3 1640.8 1035.0 1650.2 1061.1 C1659.6 1087.2 1670.6 1113.8 1682.6 1139.9 C1694.6 1166.0 1712.5 1199.8 1722.1 1217.6 C1731.7 1235.4 1735.2 1239.6 1740.0 1246.7 C1744.8 1253.8 1746.8 1255.5 1751.0 1260.0 C1755.2 1264.5 1760.3 1269.7 1765.0 1273.5 C1769.7 1277.3 1776.7 1281.4 1779.0 1283.0 Z" fill="none" stroke="#E8A000" stroke-width="1.3"/><line x1="1517" y1="1038.4" x2="2522" y2="1038.4" stroke="#E8E8E8" stroke-width="1.4" stroke-dasharray="5 4"/><line x1="1950.8" y1="553" x2="1950.8" y2="1334" stroke="#E8E8E8" stroke-width="1.4" stroke-dasharray="5 4"/><path d="M2316.4 1037.6 L1936.6 827.0 L1769.0 1248.2 Z" fill="none" stroke="#FFFFFF" stroke-width="3.6" stroke-linejoin="miter"/><line x1="1950.8" y1="1038.4" x2="2316.4" y2="1037.6" stroke="#202020" stroke-width="1.3" stroke-dasharray="4 4"/><line x1="1950.8" y1="1038.4" x2="1936.6" y2="827.0" stroke="#202020" stroke-width="1.3" stroke-dasharray="4 4"/><line x1="1950.8" y1="1038.4" x2="1769.0" y2="1248.2" stroke="#202020" stroke-width="1.3" stroke-dasharray="4 4"/><line x1="1950.8" y1="1038.4" x2="2069.9" y2="900.9" stroke="#202020" stroke-width="1.3" stroke-dasharray="4 4"/><line x1="1950.8" y1="1038.4" x2="1852.4" y2="1038.6" stroke="#202020" stroke-width="1.3" stroke-dasharray="4 4"/><line x1="1950.8" y1="1038.4" x2="1960.0" y2="1174.7" stroke="#202020" stroke-width="1.3" stroke-dasharray="4 4"/><line x1="1705.0" y1="639.4" x2="1727.0" y2="606.0" stroke="#B8B8C0" stroke-width="1.1"/><text x="1727.0" y="614.0" font-family="Liberation Serif" font-size="15" fill="#D8D8D8" textLength="44" lengthAdjust="spacingAndGlyphs">520 nm</text><line x1="1872.7" y1="709.8" x2="1895.4" y2="676.6" stroke="#B8B8C0" stroke-width="1.1"/><text x="1893.0" y="686.0" font-family="Liberation Serif" font-size="15" fill="#D8D8D8" textLength="44" lengthAdjust="spacingAndGlyphs">540 nm</text><line x1="2025.9" y1="813.3" x2="2048.6" y2="778.0" stroke="#B8B8C0" stroke-width="1.1"/><text x="2047.4" y="788.0" font-family="Liberation Serif" font-size="15" fill="#D8D8D8" textLength="44" lengthAdjust="spacingAndGlyphs">560 nm</text><line x1="2133.5" y1="887.8" x2="2156.3" y2="853.5" stroke="#B8B8C0" stroke-width="1.1"/><text x="2156.3" y="863.5" font-family="Liberation Serif" font-size="15" fill="#D8D8D8" textLength="44" lengthAdjust="spacingAndGlyphs">580 nm</text><line x1="2208.0" y1="939.6" x2="2230.8" y2="906.5" stroke="#B8B8C0" stroke-width="1.1"/><text x="2230.0" y="916.5" font-family="Liberation Serif" font-size="15" fill="#D8D8D8" textLength="44" lengthAdjust="spacingAndGlyphs">600 nm</text><line x1="2278.5" y1="989.3" x2="2301.2" y2="955.3" stroke="#B8B8C0" stroke-width="1.1"/><text x="2301.2" y="966.0" font-family="Liberation Serif" font-size="15" fill="#D8D8D8" textLength="44" lengthAdjust="spacingAndGlyphs">620 nm</text><line x1="2356.3" y1="1038.0" x2="2377.8" y2="1006.9" stroke="#B8B8C0" stroke-width="1.1"/><text x="2377.0" y="1018.0" font-family="Liberation Serif" font-size="15" fill="#D8D8D8" textLength="44" lengthAdjust="spacingAndGlyphs">640 nm</text><line x1="2389.4" y1="1064.9" x2="2411.0" y2="1031.8" stroke="#B8B8C0" stroke-width="1.1"/><text x="2408.9" y="1041.0" font-family="Liberation Serif" font-size="15" fill="#D8D8D8" textLength="44" lengthAdjust="spacingAndGlyphs">660 nm</text><line x1="2402.7" y1="1077.3" x2="2425.5" y2="1042.0" stroke="#B8B8C0" stroke-width="1.1"/><text x="2423.4" y="1051.0" font-family="Liberation Serif" font-size="15" fill="#D8D8D8" textLength="44" lengthAdjust="spacingAndGlyphs">680 nm</text><line x1="1605.6" y1="834.0" x2="1585.0" y2="841.0" stroke="#B8B8C0" stroke-width="1.1"/><text x="1547.6" y="856.5" font-family="Liberation Serif" font-size="15" fill="#D8D8D8" textLength="44" lengthAdjust="spacingAndGlyphs">500 nm</text><line x1="1690.5" y1="1158.0" x2="1669.8" y2="1164.3" stroke="#B8B8C0" stroke-width="1.1"/><text x="1632.5" y="1180.5" font-family="Liberation Serif" font-size="15" fill="#D8D8D8" textLength="44" lengthAdjust="spacingAndGlyphs">480 nm</text><line x1="1739.3" y1="1245.0" x2="1719.5" y2="1251.2" stroke="#B8B8C0" stroke-width="1.1"/><text x="1682.2" y="1267.5" font-family="Liberation Serif" font-size="15" fill="#D8D8D8" textLength="44" lengthAdjust="spacingAndGlyphs">460 nm</text><line x1="1754.7" y1="1264.9" x2="1734.0" y2="1272.0" stroke="#B8B8C0" stroke-width="1.1"/><text x="1698.0" y="1288.0" font-family="Liberation Serif" font-size="15" fill="#D8D8D8" textLength="44" lengthAdjust="spacingAndGlyphs">440 nm</text><line x1="1765.0" y1="1276.0" x2="1746.4" y2="1282.3" stroke="#B8B8C0" stroke-width="1.1"/><text x="1709.0" y="1298.5" font-family="Liberation Serif" font-size="15" fill="#D8D8D8" textLength="44" lengthAdjust="spacingAndGlyphs">420 nm</text><text x="1715.3" y="1330" font-family="Liberation Serif" font-size="15.5" fill="#D8D8D8" textLength="20" lengthAdjust="spacingAndGlyphs">0.1</text><text x="1827.0" y="1330" font-family="Liberation Serif" font-size="15.5" fill="#D8D8D8" textLength="20" lengthAdjust="spacingAndGlyphs">0.2</text><text x="1938.6" y="1330" font-family="Liberation Serif" font-size="15.5" fill="#D8D8D8" textLength="20" lengthAdjust="spacingAndGlyphs">0.3</text><text x="2050.3" y="1330" font-family="Liberation Serif" font-size="15.5" fill="#D8D8D8" textLength="20" lengthAdjust="spacingAndGlyphs">0.4</text><text x="2162.0" y="1330" font-family="Liberation Serif" font-size="15.5" fill="#D8D8D8" textLength="20" lengthAdjust="spacingAndGlyphs">0.5</text><text x="2273.7" y="1330" font-family="Liberation Serif" font-size="15.5" fill="#D8D8D8" textLength="20" lengthAdjust="spacingAndGlyphs">0.6</text><text x="2385.3" y="1330" font-family="Liberation Serif" font-size="15.5" fill="#D8D8D8" textLength="20" lengthAdjust="spacingAndGlyphs">0.7</text><text x="1520" y="1211.6" font-family="Liberation Serif" font-size="15.5" fill="#D8D8D8" textLength="21" lengthAdjust="spacingAndGlyphs">0.1</text><text x="1520" y="1133.6" font-family="Liberation Serif" font-size="15.5" fill="#D8D8D8" textLength="21" lengthAdjust="spacingAndGlyphs">0.2</text><text x="1520" y="1055.6" font-family="Liberation Serif" font-size="15.5" fill="#D8D8D8" textLength="21" lengthAdjust="spacingAndGlyphs">0.3</text><text x="1520" y="977.6" font-family="Liberation Serif" font-size="15.5" fill="#D8D8D8" textLength="21" lengthAdjust="spacingAndGlyphs">0.4</text><text x="1520" y="899.6" font-family="Liberation Serif" font-size="15.5" fill="#D8D8D8" textLength="21" lengthAdjust="spacingAndGlyphs">0.5</text><text x="1520" y="821.6" font-family="Liberation Serif" font-size="15.5" fill="#D8D8D8" textLength="21" lengthAdjust="spacingAndGlyphs">0.6</text><text x="1520" y="743.6" font-family="Liberation Serif" font-size="15.5" fill="#D8D8D8" textLength="21" lengthAdjust="spacingAndGlyphs">0.7</text><text x="1520" y="665.6" font-family="Liberation Serif" font-size="15.5" fill="#D8D8D8" textLength="21" lengthAdjust="spacingAndGlyphs">0.8</text><text x="2316" y="1257.5" font-family="Liberation Sans" font-weight="bold" font-size="20" fill="#3A3A3A" textLength="194" lengthAdjust="spacingAndGlyphs">hcfr.sourceforge.net</text><path d="M1879.0 1104.0 C1882.5 1100.5 1893.0 1089.6 1900.0 1083.0 C1907.0 1076.4 1912.7 1071.8 1921.0 1064.4 C1929.3 1057.0 1941.3 1045.3 1950.0 1038.8 C1958.7 1032.3 1965.0 1030.1 1973.3 1025.3 C1981.6 1020.5 1991.0 1014.8 2000.0 1010.0 C2009.0 1005.2 2017.6 1000.9 2027.6 996.6 C2037.6 992.3 2049.6 987.6 2060.0 984.0 C2070.4 980.4 2080.6 977.5 2090.0 975.2 C2099.4 972.9 2110.2 971.3 2116.5 970.2 C2122.8 969.1 2126.1 968.8 2128.0 968.5" fill="none" stroke="#101010" stroke-width="2"/><defs><radialGradient id="mk" cx="0.42" cy="0.38" r="0.68"><stop offset="0" stop-color="#fff" stop-opacity="0.25"/><stop offset="0.4" stop-color="#fff" stop-opacity="0"/><stop offset="0.8" stop-color="#000" stop-opacity="0.15"/><stop offset="1" stop-color="#000" stop-opacity="0.65"/></radialGradient><filter id="sh" x="-50%" y="-50%" width="200%" height="200%"><feGaussianBlur stdDeviation="1.6"/></filter></defs><text x="1885.0" y="1056.5" font-family="Liberation Serif" font-size="16" fill="#1A1A1A" textLength="33" lengthAdjust="spacingAndGlyphs">9300</text><text x="1937.0" y="1018.0" font-family="Liberation Serif" font-size="16" fill="#1A1A1A" textLength="33" lengthAdjust="spacingAndGlyphs">5500</text><text x="1991.0" y="989.0" font-family="Liberation Serif" font-size="16" fill="#1A1A1A" textLength="33" lengthAdjust="spacingAndGlyphs">4000</text><text x="2058.0" y="967.5" font-family="Liberation Serif" font-size="16" fill="#1A1A1A" textLength="33" lengthAdjust="spacingAndGlyphs">3000</text><text x="2115.0" y="962.5" font-family="Liberation Serif" font-size="16" fill="#1A1A1A" textLength="33" lengthAdjust="spacingAndGlyphs">2850</text><text x="2097.0" y="998.0" font-family="Liberation Serif" font-size="16" fill="#1A1A1A" textLength="12" lengthAdjust="spacingAndGlyphs">A</text><text x="1995.8" y="1040.5" font-family="Liberation Serif" font-size="16" fill="#1A1A1A" textLength="10" lengthAdjust="spacingAndGlyphs">B</text><text x="1953.0" y="1066.0" font-family="Liberation Serif" font-size="16" fill="#1A1A1A" textLength="10" lengthAdjust="spacingAndGlyphs">C</text><text x="1911.7" y="1036" font-family="Liberation Serif" font-size="16" fill="#1A1A1A">D65</text><rect x="1933.5" y="901.0" width="17" height="17" fill="none" stroke="#D49A48" stroke-width="2.2"/><rect x="1935.5" y="903.0" width="13" height="13" fill="none" stroke="#607060" stroke-opacity="0.7" stroke-width="1.2"/><rect x="2014.3" y="900.1" width="17" height="17" fill="none" stroke="#D49A48" stroke-width="2.2"/><rect x="2016.3" y="902.1" width="13" height="13" fill="none" stroke="#607060" stroke-opacity="0.7" stroke-width="1.2"/><rect x="2091.2" y="915.4" width="17" height="17" fill="none" stroke="#D49A48" stroke-width="2.2"/><rect x="2093.2" y="917.4" width="13" height="13" fill="none" stroke="#607060" stroke-opacity="0.7" stroke-width="1.2"/><rect x="1973.9" y="949.6" width="17" height="17" fill="none" stroke="#D49A48" stroke-width="2.2"/><rect x="1975.9" y="951.6" width="13" height="13" fill="none" stroke="#607060" stroke-opacity="0.7" stroke-width="1.2"/><rect x="2122.7" y="941.3" width="17" height="17" fill="none" stroke="#D49A48" stroke-width="2.2"/><rect x="2124.7" y="943.3" width="13" height="13" fill="none" stroke="#607060" stroke-opacity="0.7" stroke-width="1.2"/><rect x="2167.0" y="967.3" width="17" height="17" fill="none" stroke="#D49A48" stroke-width="2.2"/><rect x="2169.0" y="969.3" width="13" height="13" fill="none" stroke="#607060" stroke-opacity="0.7" stroke-width="1.2"/><rect x="1885.0" y="1005.5" width="17" height="17" fill="none" stroke="#D49A48" stroke-width="2.2"/><rect x="1887.0" y="1007.5" width="13" height="13" fill="none" stroke="#607060" stroke-opacity="0.7" stroke-width="1.2"/><rect x="2014.9" y="1008.5" width="17" height="17" fill="none" stroke="#D49A48" stroke-width="2.2"/><rect x="2016.9" y="1010.5" width="13" height="13" fill="none" stroke="#607060" stroke-opacity="0.7" stroke-width="1.2"/><rect x="2045.5" y="1002.5" width="17" height="17" fill="none" stroke="#D49A48" stroke-width="2.2"/><rect x="2047.5" y="1004.5" width="13" height="13" fill="none" stroke="#607060" stroke-opacity="0.7" stroke-width="1.2"/><rect x="2110.5" y="1042.8" width="17" height="17" fill="none" stroke="#D49A48" stroke-width="2.2"/><rect x="2112.5" y="1044.8" width="13" height="13" fill="none" stroke="#607060" stroke-opacity="0.7" stroke-width="1.2"/><rect x="2203.1" y="1039.1" width="17" height="17" fill="none" stroke="#D49A48" stroke-width="2.2"/><rect x="2205.1" y="1041.1" width="13" height="13" fill="none" stroke="#607060" stroke-opacity="0.7" stroke-width="1.2"/><rect x="2005.1" y="1095.5" width="17" height="17" fill="none" stroke="#D49A48" stroke-width="2.2"/><rect x="2007.1" y="1097.5" width="13" height="13" fill="none" stroke="#607060" stroke-opacity="0.7" stroke-width="1.2"/><rect x="1824.8" y="1077.3" width="17" height="17" fill="none" stroke="#D49A48" stroke-width="2.2"/><rect x="1826.8" y="1079.3" width="13" height="13" fill="none" stroke="#607060" stroke-opacity="0.7" stroke-width="1.2"/><rect x="1870.5" y="1080.4" width="17" height="17" fill="none" stroke="#D49A48" stroke-width="2.2"/><rect x="1872.5" y="1082.4" width="13" height="13" fill="none" stroke="#607060" stroke-opacity="0.7" stroke-width="1.2"/><rect x="1890.5" y="1089.5" width="17" height="17" fill="none" stroke="#D49A48" stroke-width="2.2"/><rect x="1892.5" y="1091.5" width="13" height="13" fill="none" stroke="#607060" stroke-opacity="0.7" stroke-width="1.2"/><rect x="1915.0" y="1117.0" width="17" height="17" fill="none" stroke="#D49A48" stroke-width="2.2"/><rect x="1917.0" y="1119.0" width="13" height="13" fill="none" stroke="#607060" stroke-opacity="0.7" stroke-width="1.2"/><rect x="1831.5" y="1138.5" width="17" height="17" fill="none" stroke="#D49A48" stroke-width="2.2"/><rect x="1833.5" y="1140.5" width="13" height="13" fill="none" stroke="#607060" stroke-opacity="0.7" stroke-width="1.2"/><rect x="1800.5" y="1181.2" width="17" height="17" fill="none" stroke="#D49A48" stroke-width="2.2"/><rect x="1802.5" y="1183.2" width="13" height="13" fill="none" stroke="#607060" stroke-opacity="0.7" stroke-width="1.2"/><circle cx="1944.8" cy="919.2" r="7.0" fill="#000" opacity="0.35" filter="url(#sh)"/><circle cx="1943.3" cy="917.2" r="6.5" fill="#F8F8F8" stroke="#303030" stroke-width="1.8"/><circle cx="2022.1" cy="918.2" r="7.0" fill="#000" opacity="0.35" filter="url(#sh)"/><circle cx="2020.6" cy="916.2" r="6.5" fill="#F8F8F8" stroke="#303030" stroke-width="1.8"/><circle cx="2099.7" cy="932.0" r="7.0" fill="#000" opacity="0.35" filter="url(#sh)"/><circle cx="2098.2" cy="930.0" r="6.5" fill="#F8F8F8" stroke="#303030" stroke-width="1.8"/><circle cx="1980.0" cy="968.0" r="7.0" fill="#000" opacity="0.35" filter="url(#sh)"/><circle cx="1978.5" cy="966.0" r="6.5" fill="#F8F8F8" stroke="#303030" stroke-width="1.8"/><circle cx="2127.2" cy="955.5" r="7.0" fill="#000" opacity="0.35" filter="url(#sh)"/><circle cx="2125.7" cy="953.5" r="6.5" fill="#F8F8F8" stroke="#303030" stroke-width="1.8"/><circle cx="2166.3" cy="981.8" r="7.0" fill="#000" opacity="0.35" filter="url(#sh)"/><circle cx="2164.8" cy="979.8" r="6.5" fill="#F8F8F8" stroke="#303030" stroke-width="1.8"/><circle cx="1895.9" cy="1017.0" r="7.0" fill="#000" opacity="0.35" filter="url(#sh)"/><circle cx="1894.4" cy="1015.0" r="6.5" fill="#F8F8F8" stroke="#303030" stroke-width="1.8"/><circle cx="2024.9" cy="1018.0" r="7.0" fill="#000" opacity="0.35" filter="url(#sh)"/><circle cx="2023.4" cy="1016.0" r="6.5" fill="#F8F8F8" stroke="#303030" stroke-width="1.8"/><circle cx="2045.0" cy="1018.5" r="7.0" fill="#000" opacity="0.35" filter="url(#sh)"/><circle cx="2043.5" cy="1016.5" r="6.5" fill="#F8F8F8" stroke="#303030" stroke-width="1.8"/><circle cx="2120.5" cy="1053.3" r="7.0" fill="#000" opacity="0.35" filter="url(#sh)"/><circle cx="2119.0" cy="1051.3" r="6.5" fill="#F8F8F8" stroke="#303030" stroke-width="1.8"/><circle cx="2203.5" cy="1044.0" r="7.0" fill="#000" opacity="0.35" filter="url(#sh)"/><circle cx="2202.0" cy="1042.0" r="6.5" fill="#F8F8F8" stroke="#303030" stroke-width="1.8"/><circle cx="2019.1" cy="1110.7" r="7.0" fill="#000" opacity="0.35" filter="url(#sh)"/><circle cx="2017.6" cy="1108.7" r="6.5" fill="#F8F8F8" stroke="#303030" stroke-width="1.8"/><circle cx="1837.3" cy="1075.6" r="7.0" fill="#000" opacity="0.35" filter="url(#sh)"/><circle cx="1835.8" cy="1073.6" r="6.5" fill="#F8F8F8" stroke="#303030" stroke-width="1.8"/><circle cx="1883.1" cy="1090.0" r="7.0" fill="#000" opacity="0.35" filter="url(#sh)"/><circle cx="1881.6" cy="1088.0" r="6.5" fill="#F8F8F8" stroke="#303030" stroke-width="1.8"/><circle cx="1899.0" cy="1102.2" r="7.0" fill="#000" opacity="0.35" filter="url(#sh)"/><circle cx="1897.5" cy="1100.2" r="6.5" fill="#F8F8F8" stroke="#303030" stroke-width="1.8"/><circle cx="1928.3" cy="1116.2" r="7.0" fill="#000" opacity="0.35" filter="url(#sh)"/><circle cx="1926.8" cy="1114.2" r="6.5" fill="#F8F8F8" stroke="#303030" stroke-width="1.8"/><circle cx="1843.4" cy="1153.0" r="7.0" fill="#000" opacity="0.35" filter="url(#sh)"/><circle cx="1841.9" cy="1151.0" r="6.5" fill="#F8F8F8" stroke="#303030" stroke-width="1.8"/><circle cx="1818.0" cy="1181.0" r="7.0" fill="#000" opacity="0.35" filter="url(#sh)"/><circle cx="1816.5" cy="1179.0" r="6.5" fill="#F8F8F8" stroke="#303030" stroke-width="1.8"/><circle cx="1982.4" cy="1036.8" r="7.8" fill="#000" opacity="0.35" filter="url(#sh)"/><circle cx="1980.9" cy="1034.8" r="7.3" fill="#F8F8F8" stroke="#303030" stroke-width="1.8"/><circle cx="1948.9" cy="989.0" r="9" fill="#000" opacity="0.5" filter="url(#sh)"/><rect x="1936.9" y="976.5" width="19" height="19" fill="#20E020" stroke="#3030A0" stroke-width="1.3"/><path d="M1936.9 995.5 H1955.9 V976.5" fill="none" stroke="#E02020" stroke-width="1.3"/><circle cx="1947.4" cy="986.8" r="8.3" fill="#10C010"/><circle cx="1947.4" cy="986.8" r="8.3" fill="url(#mk)"/><circle cx="1947.4" cy="986.8" r="1.1" fill="#202040"/><circle cx="1945.8" cy="936.7" r="9" fill="#000" opacity="0.5" filter="url(#sh)"/><rect x="1933.8" y="924.2" width="19" height="19" fill="#20E020" stroke="#3030A0" stroke-width="1.3"/><path d="M1933.8 943.2 H1952.8 V924.2" fill="none" stroke="#E02020" stroke-width="1.3"/><circle cx="1944.3" cy="934.5" r="8.3" fill="#10C010"/><circle cx="1944.3" cy="934.5" r="8.3" fill="url(#mk)"/><circle cx="1944.3" cy="934.5" r="1.1" fill="#202040"/><circle cx="1942.8" cy="885.6" r="9" fill="#000" opacity="0.5" filter="url(#sh)"/><rect x="1930.8" y="873.1" width="19" height="19" fill="#20E020" stroke="#3030A0" stroke-width="1.3"/><path d="M1930.8 892.1 H1949.8 V873.1" fill="none" stroke="#E02020" stroke-width="1.3"/><circle cx="1941.3" cy="883.4" r="8.3" fill="#10C010"/><circle cx="1941.3" cy="883.4" r="8.3" fill="url(#mk)"/><circle cx="1941.3" cy="883.4" r="1.1" fill="#202040"/><circle cx="1939.1" cy="831.6" r="9" fill="#000" opacity="0.5" filter="url(#sh)"/><rect x="1927.1" y="819.1" width="19" height="19" fill="#20E020" stroke="#3030A0" stroke-width="1.3"/><path d="M1927.1 838.1 H1946.1 V819.1" fill="none" stroke="#E02020" stroke-width="1.3"/><circle cx="1937.6" cy="829.4" r="8.3" fill="#10C010"/><circle cx="1937.6" cy="829.4" r="8.3" fill="url(#mk)"/><circle cx="1937.6" cy="829.4" r="1.1" fill="#202040"/><circle cx="1981.9" cy="1006.9" r="9" fill="#000" opacity="0.5" filter="url(#sh)"/><rect x="1969.9" y="994.4" width="19" height="19" fill="#F0E020" stroke="#3030A0" stroke-width="1.3"/><path d="M1969.9 1013.4 H1988.9 V994.4" fill="none" stroke="#E02020" stroke-width="1.3"/><circle cx="1980.4" cy="1004.7" r="8.3" fill="#E8E070"/><circle cx="1980.4" cy="1004.7" r="8.3" fill="url(#mk)"/><circle cx="1980.4" cy="1004.7" r="1.1" fill="#202040"/><circle cx="2011.5" cy="973.3" r="9" fill="#000" opacity="0.5" filter="url(#sh)"/><rect x="1999.5" y="960.8" width="19" height="19" fill="#F0E020" stroke="#3030A0" stroke-width="1.3"/><path d="M1999.5 979.8 H2018.5 V960.8" fill="none" stroke="#E02020" stroke-width="1.3"/><circle cx="2010.0" cy="971.1" r="8.3" fill="#E8E070"/><circle cx="2010.0" cy="971.1" r="8.3" fill="url(#mk)"/><circle cx="2010.0" cy="971.1" r="1.1" fill="#202040"/><circle cx="2041.1" cy="939.1" r="9" fill="#000" opacity="0.5" filter="url(#sh)"/><rect x="2029.1" y="926.6" width="19" height="19" fill="#F0E020" stroke="#3030A0" stroke-width="1.3"/><path d="M2029.1 945.6 H2048.1 V926.6" fill="none" stroke="#E02020" stroke-width="1.3"/><circle cx="2039.6" cy="936.9" r="8.3" fill="#E8E070"/><circle cx="2039.6" cy="936.9" r="8.3" fill="url(#mk)"/><circle cx="2039.6" cy="936.9" r="1.1" fill="#202040"/><circle cx="2071.1" cy="904.0" r="9" fill="#000" opacity="0.5" filter="url(#sh)"/><rect x="2059.1" y="891.5" width="19" height="19" fill="#F0E020" stroke="#3030A0" stroke-width="1.3"/><path d="M2059.1 910.5 H2078.1 V891.5" fill="none" stroke="#E02020" stroke-width="1.3"/><circle cx="2069.6" cy="901.8" r="8.3" fill="#E8E070"/><circle cx="2069.6" cy="901.8" r="8.3" fill="url(#mk)"/><circle cx="2069.6" cy="901.8" r="1.1" fill="#202040"/><circle cx="1926.5" cy="1040.8" r="9" fill="#000" opacity="0.5" filter="url(#sh)"/><rect x="1914.5" y="1028.3" width="19" height="19" fill="#40F0F0" stroke="#3030A0" stroke-width="1.3"/><path d="M1914.5 1047.3 H1933.5 V1028.3" fill="none" stroke="#E02020" stroke-width="1.3"/><circle cx="1925.0" cy="1038.6" r="8.3" fill="#70E8E8"/><circle cx="1925.0" cy="1038.6" r="8.3" fill="url(#mk)"/><circle cx="1925.0" cy="1038.6" r="1.1" fill="#202040"/><circle cx="1904.5" cy="1040.8" r="9" fill="#000" opacity="0.5" filter="url(#sh)"/><rect x="1892.5" y="1028.3" width="19" height="19" fill="#40F0F0" stroke="#3030A0" stroke-width="1.3"/><path d="M1892.5 1047.3 H1911.5 V1028.3" fill="none" stroke="#E02020" stroke-width="1.3"/><circle cx="1903.0" cy="1038.6" r="8.3" fill="#70E8E8"/><circle cx="1903.0" cy="1038.6" r="8.3" fill="url(#mk)"/><circle cx="1903.0" cy="1038.6" r="1.1" fill="#202040"/><circle cx="1879.5" cy="1040.8" r="9" fill="#000" opacity="0.5" filter="url(#sh)"/><rect x="1867.5" y="1028.3" width="19" height="19" fill="#40F0F0" stroke="#3030A0" stroke-width="1.3"/><path d="M1867.5 1047.3 H1886.5 V1028.3" fill="none" stroke="#E02020" stroke-width="1.3"/><circle cx="1878.0" cy="1038.6" r="8.3" fill="#70E8E8"/><circle cx="1878.0" cy="1038.6" r="8.3" fill="url(#mk)"/><circle cx="1878.0" cy="1038.6" r="1.1" fill="#202040"/><circle cx="1854.2" cy="1040.8" r="9" fill="#000" opacity="0.5" filter="url(#sh)"/><rect x="1842.2" y="1028.3" width="19" height="19" fill="#40F0F0" stroke="#3030A0" stroke-width="1.3"/><path d="M1842.2 1047.3 H1861.2 V1028.3" fill="none" stroke="#E02020" stroke-width="1.3"/><circle cx="1852.7" cy="1038.6" r="8.3" fill="#70E8E8"/><circle cx="1852.7" cy="1038.6" r="8.3" fill="url(#mk)"/><circle cx="1852.7" cy="1038.6" r="1.1" fill="#202040"/><circle cx="2043.0" cy="1041.8" r="9" fill="#000" opacity="0.5" filter="url(#sh)"/><rect x="2031.0" y="1029.3" width="19" height="19" fill="#F02020" stroke="#3030A0" stroke-width="1.3"/><path d="M2031.0 1048.3 H2050.0 V1029.3" fill="none" stroke="#E02020" stroke-width="1.3"/><circle cx="2041.5" cy="1039.6" r="8.3" fill="#E02020"/><circle cx="2041.5" cy="1039.6" r="8.3" fill="url(#mk)"/><circle cx="2133.5" cy="1041.8" r="9" fill="#000" opacity="0.5" filter="url(#sh)"/><rect x="2121.5" y="1029.3" width="19" height="19" fill="#F02020" stroke="#3030A0" stroke-width="1.3"/><path d="M2121.5 1048.3 H2140.5 V1029.3" fill="none" stroke="#E02020" stroke-width="1.3"/><circle cx="2132.0" cy="1039.6" r="8.3" fill="#E02020"/><circle cx="2132.0" cy="1039.6" r="8.3" fill="url(#mk)"/><circle cx="2225.5" cy="1040.8" r="9" fill="#000" opacity="0.5" filter="url(#sh)"/><rect x="2213.5" y="1028.3" width="19" height="19" fill="#F02020" stroke="#3030A0" stroke-width="1.3"/><path d="M2213.5 1047.3 H2232.5 V1028.3" fill="none" stroke="#E02020" stroke-width="1.3"/><circle cx="2224.0" cy="1038.6" r="8.3" fill="#E02020"/><circle cx="2224.0" cy="1038.6" r="8.3" fill="url(#mk)"/><circle cx="2318.0" cy="1041.8" r="9" fill="#000" opacity="0.5" filter="url(#sh)"/><rect x="2306.0" y="1029.3" width="19" height="19" fill="#F02020" stroke="#3030A0" stroke-width="1.3"/><path d="M2306.0 1048.3 H2325.0 V1029.3" fill="none" stroke="#E02020" stroke-width="1.3"/><circle cx="2316.5" cy="1039.6" r="8.3" fill="#E02020"/><circle cx="2316.5" cy="1039.6" r="8.3" fill="url(#mk)"/><circle cx="1955.9" cy="1071.4" r="9" fill="#000" opacity="0.5" filter="url(#sh)"/><rect x="1943.9" y="1058.9" width="19" height="19" fill="#F020F0" stroke="#3030A0" stroke-width="1.3"/><path d="M1943.9 1077.9 H1962.9 V1058.9" fill="none" stroke="#E02020" stroke-width="1.3"/><circle cx="1954.4" cy="1069.2" r="8.3" fill="#F020F0"/><circle cx="1954.4" cy="1069.2" r="8.3" fill="url(#mk)"/><circle cx="1954.4" cy="1069.2" r="1.1" fill="#202040"/><circle cx="1956.8" cy="1109.3" r="9" fill="#000" opacity="0.5" filter="url(#sh)"/><rect x="1944.8" y="1096.8" width="19" height="19" fill="#F020F0" stroke="#3030A0" stroke-width="1.3"/><path d="M1944.8 1115.8 H1963.8 V1096.8" fill="none" stroke="#E02020" stroke-width="1.3"/><circle cx="1955.3" cy="1107.1" r="8.3" fill="#F020F0"/><circle cx="1955.3" cy="1107.1" r="8.3" fill="url(#mk)"/><circle cx="1955.3" cy="1107.1" r="1.1" fill="#202040"/><circle cx="1959.5" cy="1142.3" r="9" fill="#000" opacity="0.5" filter="url(#sh)"/><rect x="1947.5" y="1129.8" width="19" height="19" fill="#F020F0" stroke="#3030A0" stroke-width="1.3"/><path d="M1947.5 1148.8 H1966.5 V1129.8" fill="none" stroke="#E02020" stroke-width="1.3"/><circle cx="1958.0" cy="1140.1" r="8.3" fill="#F020F0"/><circle cx="1958.0" cy="1140.1" r="8.3" fill="url(#mk)"/><circle cx="1958.0" cy="1140.1" r="1.1" fill="#202040"/><circle cx="1962.5" cy="1177.4" r="9" fill="#000" opacity="0.5" filter="url(#sh)"/><rect x="1950.5" y="1164.9" width="19" height="19" fill="#F020F0" stroke="#3030A0" stroke-width="1.3"/><path d="M1950.5 1183.9 H1969.5 V1164.9" fill="none" stroke="#E02020" stroke-width="1.3"/><circle cx="1961.0" cy="1175.2" r="8.3" fill="#F020F0"/><circle cx="1961.0" cy="1175.2" r="8.3" fill="url(#mk)"/><circle cx="1961.0" cy="1175.2" r="1.1" fill="#202040"/><circle cx="1907.0" cy="1091.3" r="9" fill="#000" opacity="0.5" filter="url(#sh)"/><rect x="1895.0" y="1078.8" width="19" height="19" fill="#3030F0" stroke="#3030A0" stroke-width="1.3"/><path d="M1895.0 1097.8 H1914.0 V1078.8" fill="none" stroke="#E02020" stroke-width="1.3"/><circle cx="1905.5" cy="1089.1" r="8.3" fill="#2828E0"/><circle cx="1905.5" cy="1089.1" r="8.3" fill="url(#mk)"/><circle cx="1905.5" cy="1089.1" r="1.1" fill="#202040"/><circle cx="1861.8" cy="1146.3" r="9" fill="#000" opacity="0.5" filter="url(#sh)"/><rect x="1849.8" y="1133.8" width="19" height="19" fill="#3030F0" stroke="#3030A0" stroke-width="1.3"/><path d="M1849.8 1152.8 H1868.8 V1133.8" fill="none" stroke="#E02020" stroke-width="1.3"/><circle cx="1860.3" cy="1144.1" r="8.3" fill="#2828E0"/><circle cx="1860.3" cy="1144.1" r="8.3" fill="url(#mk)"/><circle cx="1860.3" cy="1144.1" r="1.1" fill="#202040"/><circle cx="1816.9" cy="1199.7" r="9" fill="#000" opacity="0.5" filter="url(#sh)"/><rect x="1804.9" y="1187.2" width="19" height="19" fill="#3030F0" stroke="#3030A0" stroke-width="1.3"/><path d="M1804.9 1206.2 H1823.9 V1187.2" fill="none" stroke="#E02020" stroke-width="1.3"/><circle cx="1815.4" cy="1197.5" r="8.3" fill="#2828E0"/><circle cx="1815.4" cy="1197.5" r="8.3" fill="url(#mk)"/><circle cx="1815.4" cy="1197.5" r="1.1" fill="#202040"/><circle cx="1774.7" cy="1250.7" r="9" fill="#000" opacity="0.5" filter="url(#sh)"/><rect x="1762.7" y="1238.2" width="19" height="19" fill="#3030F0" stroke="#3030A0" stroke-width="1.3"/><path d="M1762.7 1257.2 H1781.7 V1238.2" fill="none" stroke="#E02020" stroke-width="1.3"/><circle cx="1773.2" cy="1248.5" r="8.3" fill="#2828E0"/><circle cx="1773.2" cy="1248.5" r="8.3" fill="url(#mk)"/><circle cx="1773.2" cy="1248.5" r="1.1" fill="#202040"/><rect x="1944.9" y="1065.1" width="17" height="17" fill="none" stroke="#F020F0" stroke-width="2.2"/><rect x="1946.9" y="1067.1" width="13" height="13" fill="none" stroke="#607060" stroke-opacity="0.7" stroke-width="1.2"/><circle cx="1921.0" cy="1064.4" r="3.2" fill="#F8F8F8" stroke="#101010" stroke-width="1.4"/><circle cx="1973.3" cy="1025.3" r="3.2" fill="#F8F8F8" stroke="#101010" stroke-width="1.4"/><circle cx="2027.6" cy="996.6" r="3.2" fill="#F8F8F8" stroke="#101010" stroke-width="1.4"/><circle cx="2090.0" cy="975.2" r="3.2" fill="#F8F8F8" stroke="#101010" stroke-width="1.4"/><circle cx="2116.5" cy="970.2" r="3.2" fill="#F8F8F8" stroke="#101010" stroke-width="1.4"/><circle cx="1990.0" cy="1020.7" r="3" fill="#10D010"/><circle cx="2099.7" cy="976.4" r="3" fill="#10D010"/><rect x="1942.1" y="1030.1" width="17" height="17" fill="none" stroke="#D49A48" stroke-width="2.2"/><rect x="1944.1" y="1032.1" width="13" height="13" fill="none" stroke="#607060" stroke-opacity="0.7" stroke-width="1.2"/><circle cx="1950.6" cy="1038.6" r="8.5" fill="#C8CCF0" stroke="#000" stroke-width="4"/></svg>
<div class="a" style="left:2536px;top:117px;width:24px;height:1239px;background:#F0F0F0;"></div>
<div class="a" style="left:2538px;top:139px;width:18px;height:1158px;background:#CDCDCD;"></div>
<svg class="a" style="left:2541px;top:121px;" width="14" height="10" viewBox="0 0 14 10"><path d="M1 9 L7 3 L13 9" stroke="#606060" stroke-width="2.2" fill="none"/></svg>
<svg class="a" style="left:2541px;top:1339px;" width="14" height="10" viewBox="0 0 14 10"><path d="M1 1 L7 7 L13 1" stroke="#606060" stroke-width="2.2" fill="none"/></svg>
<div class="a" style="left:0px;top:1351px;width:2536px;height:1px;background:#7A7A7A;"></div>
<div class="a" style="left:0px;top:1352px;width:2536px;height:4px;background:#B8B8B8;"></div>
<div class="a" style="left:0px;top:1356px;width:2560px;height:25px;background:#F0F0F0;"></div>
<div class="a" style="left:24px;top:1357px;width:2437px;height:18px;background:#CDCDCD;"></div>
<svg class="a" style="left:8px;top:1360px;" width="10" height="13" viewBox="0 0 10 13"><path d="M8 1 L2 6.5 L8 12" stroke="#606060" stroke-width="2.2" fill="none"/></svg>
<svg class="a" style="left:2521px;top:1360px;" width="10" height="13" viewBox="0 0 10 13"><path d="M2 1 L8 6.5 L2 12" stroke="#606060" stroke-width="2.2" fill="none"/></svg>
<div class="a" style="left:0px;top:1381px;width:2560px;height:36px;background:#F0F0F0;"></div>
<div class="a" style="left:0px;top:1380px;width:2560px;height:2px;background:#1A1A1A;"></div>
<div class="a" style="left:0px;top:1381px;width:105px;height:36px;background:#1A1A1A;"></div>
<div class="a" style="left:1px;top:1382px;width:33px;height:33px;background:#F0F0F0;border-right:2px solid #8A8A8A;border-bottom:2px solid #8A8A8A;box-sizing:border-box;"></div>
<div class="a" style="left:35px;top:1382px;width:33px;height:33px;background:#F0F0F0;border-right:2px solid #8A8A8A;border-bottom:2px solid #8A8A8A;box-sizing:border-box;"></div>
<div class="a" style="left:69px;top:1382px;width:34px;height:33px;background:#F0F0F0;border-right:2px solid #8A8A8A;border-bottom:2px solid #8A8A8A;box-sizing:border-box;"></div>
<svg class="a" style="left:12px;top:1392px;" width="13" height="13" viewBox="0 0 13 13"><path d="M2 2 L11 11 M11 2 L2 11" stroke="#000" stroke-width="2"/></svg>
<svg class="a" style="left:47px;top:1393px;" width="8" height="11" viewBox="0 0 8 11"><path d="M6 1 L2 5.5 L6 10 Z" fill="#000" stroke="#000" stroke-width="1"/></svg>
<svg class="a" style="left:82px;top:1393px;" width="8" height="11" viewBox="0 0 8 11"><path d="M2 1 L6 5.5 L2 10 Z" fill="#000" stroke="#000" stroke-width="1"/></svg>
<svg class="a" style="left:0px;top:0px;overflow:visible" width="1" height="1"><path d="M105 1381 L122 1416 L260 1416 L276 1381 Z" fill="#FFFFFF"/><path d="M105 1381 L122 1416 L260 1416 L276 1381 M276 1381 L260 1416 M427 1381 L443 1416 M555 1381 L571 1416 M738 1416 L754 1381" fill="none" stroke="#1A1A1A" stroke-width="1.5"/><path d="M122 1416 H738" stroke="#A0A0A0" stroke-width="1"/></svg>
<div id="t128" class="t" style="left:127.0px;top:1386.4px;font-size:24.00px;color:#000;font-weight:bold;font-family:'Liberation Sans', sans-serif;transform:scaleX(1.1559);transform-origin:left;">Measures</div>
<div id="t129" class="t" style="left:285.0px;top:1386.4px;font-size:24.00px;color:#000;font-weight:normal;font-family:'Liberation Sans', sans-serif;transform:scaleX(1.1242);transform-origin:left;">Luminance</div>
<div id="t130" class="t" style="left:451.0px;top:1386.4px;font-size:24.00px;color:#000;font-weight:normal;font-family:'Liberation Sans', sans-serif;transform:scaleX(1.1247);transform-origin:left;">Gamma</div>
<div id="t131" class="t" style="left:584.0px;top:1386.4px;font-size:24.00px;color:#000;font-weight:normal;font-family:'Liberation Sans', sans-serif;transform:scaleX(1.1205);transform-origin:left;">RGB Levels</div>
<svg class="a" style="left:2348px;top:1382px;" width="20" height="20" viewBox="0 0 20 20"><path d="M2 2 H18 V12 H16 L17 18 H13 L12 13 L10 18 H5 L4 12 H2 Z" fill="#807800" stroke="#101010" stroke-width="1.6"/><rect x="12" y="12" width="5" height="4" fill="#FFFF00"/><path d="M6 8 Q9 4 13 5 L14 8 L11 9 L12 6" fill="#FF2020" stroke="#FF2020" stroke-width="1"/></svg>
<div class="a" style="left:2467px;top:1384px;width:15px;height:15px;background:#FFFFFF;border-top:1.5px solid #707070;border-left:1.5px solid #707070;box-sizing:border-box;"></div>
<div id="t132" class="t" style="left:2490.0px;top:1383.0px;font-size:16.00px;color:#000;font-weight:normal;font-family:'Liberation Sans', sans-serif;transform:scaleX(0.8533);transform-origin:left;">Reference</div>
<div class="a" style="left:0px;top:1417px;width:2560px;height:21px;background:linear-gradient(90deg,#E4EBF5,#EEF3FA);"></div>
<div class="a" style="left:0px;top:1438px;width:2560px;height:2px;background:#505050;"></div>
<div id="t133" class="t" style="left:3.0px;top:1422.0px;font-size:16.00px;color:#202020;font-weight:normal;font-family:'Liberation Sans', sans-serif;transform:scaleX(0.8649);transform-origin:left;">Ready</div>
<div class="a" style="left:2337px;top:1418px;width:94px;height:20px;background:transparent;border-top:1px solid #A8BCD8;border-left:1px solid #A8BCD8;box-sizing:border-box;"></div>
<div class="a" style="left:2435px;top:1418px;width:35px;height:20px;background:transparent;border-top:1px solid #A8BCD8;border-left:1px solid #A8BCD8;box-sizing:border-box;"></div>
<div class="a" style="left:2474px;top:1418px;width:41px;height:20px;background:transparent;border-top:1px solid #A8BCD8;border-left:1px solid #A8BCD8;box-sizing:border-box;"></div>
<div class="a" style="left:2519px;top:1418px;width:41px;height:20px;background:transparent;border-top:1px solid #A8BCD8;border-left:1px solid #A8BCD8;box-sizing:border-box;"></div>
<div id="t134" class="t" style="left:2477.0px;top:1422.5px;font-size:16.00px;color:#202020;font-weight:normal;font-family:'Liberation Sans', sans-serif;transform:scaleX(0.9057);transform-origin:left;">NUM</div>
<script>
(function(){
var cv=document.getElementById('ciecv'); if(!cv||!cv.getContext) return;
var ctx=cv.getContext('2d'); if(!ctx) return;
var W=1005,H=781,OX=1517,OY=553;
function mk(){var c=document.createElement('canvas'); c.width=W; c.height=H; return c;}
var offD=mk(), offB=mk();
var oD=offD.getContext('2d'), oB=offB.getContext('2d');
var iD=oD.createImageData(W,H), iB=oB.createImageData(W,H); var dD=iD.data, dB=iB.data;
for(var j=0;j<H;j++){ for(var i=0;i<W;i++){
  var sx=i+OX+0.5, sy=j+OY+0.5;
  var x=(sx-1601.5)/1117, y=(1295-sy)/780;
  var k=(j*W+i)*4;
  if(y<=0.002){ continue; }
  var X=x/y, Z=(1-x-y)/y;
  var r=3.2406*X-1.5372-0.4986*Z, g=-0.9689*X+1.8758+0.0415*Z, b=0.0557*X-0.2040+1.0570*Z;
  var m=Math.min(r,g,b); if(m<0){r-=m;g-=m;b-=m;}
  var M=Math.max(r,g,b); if(M<=0){M=1;}
  r=Math.pow(r/M,1/2.2); g=Math.pow(g/M,1/2.2); b=Math.pow(b/M,1/2.2);
  dB[k]=r*255; dB[k+1]=g*255; dB[k+2]=b*255; dB[k+3]=255;
  dD[k]=r*199; dD[k+1]=g*199; dD[k+2]=b*199; dD[k+3]=255;
}}
oD.putImageData(iD,0,0); oB.putImageData(iB,0,0);
var tri=new Path2D("M2316.38 1037.60 L1936.60 827.00 L1769.05 1248.20 Z");
var loc=new Path2D("M2408.4 1078.9 C2404.0 1075.8 2403.4 1075.0 2382.0 1060.0 C2360.6 1045.0 2317.1 1014.8 2280.0 988.9 C2242.9 963.0 2197.9 931.4 2159.2 904.4 C2120.5 877.4 2081.0 849.8 2047.8 827.0 C2014.6 804.2 1978.7 780.5 1960.0 767.8 C1941.3 755.1 1950.2 760.2 1935.6 750.6 C1921.0 741.0 1890.7 721.4 1872.2 710.0 C1853.7 698.6 1836.1 688.8 1824.4 682.2 C1812.7 675.6 1811.8 675.0 1802.2 670.6 C1792.6 666.2 1777.2 659.9 1766.7 655.6 C1756.2 651.3 1747.8 647.6 1738.9 645.0 C1730.0 642.4 1719.8 640.9 1713.3 640.0 C1706.8 639.1 1703.9 639.5 1700.0 639.4 C1696.1 639.3 1694.3 638.5 1690.0 639.3 C1685.7 640.1 1681.6 641.1 1674.0 644.2 C1666.4 647.3 1651.7 653.3 1644.2 657.7 C1636.7 662.1 1633.6 664.0 1628.8 670.8 C1624.0 677.6 1618.3 690.2 1615.3 698.4 C1612.3 706.6 1612.2 711.5 1610.8 720.0 C1609.4 728.5 1607.8 735.8 1606.7 749.6 C1605.6 763.4 1604.7 790.0 1604.4 803.0 C1604.1 816.0 1604.0 810.3 1605.1 827.3 C1606.2 844.3 1607.6 878.9 1611.1 904.9 C1614.6 930.9 1619.7 957.3 1626.2 983.3 C1632.7 1009.3 1640.8 1035.0 1650.2 1061.1 C1659.6 1087.2 1670.6 1113.8 1682.6 1139.9 C1694.6 1166.0 1712.5 1199.8 1722.1 1217.6 C1731.7 1235.4 1735.2 1239.6 1740.0 1246.7 C1744.8 1253.8 1746.8 1255.5 1751.0 1260.0 C1755.2 1264.5 1760.3 1269.7 1765.0 1273.5 C1769.7 1277.3 1776.7 1281.4 1779.0 1283.0 Z");
ctx.save(); ctx.translate(-OX,-OY); ctx.clip(loc);
ctx.drawImage(offD,OX,OY);
ctx.strokeStyle='#3E4343'; ctx.lineWidth=1.6;
for(var q=0;q<8;q++){var xx=1601.5+q*111.7; ctx.beginPath(); ctx.moveTo(xx,553); ctx.lineTo(xx,1334); ctx.stroke();}
for(var q=1;q<10;q++){var yy=1295-q*78; ctx.beginPath(); ctx.moveTo(1517,yy); ctx.lineTo(2522,yy); ctx.stroke();}
ctx.restore();
var wc=mk(), w2=wc.getContext('2d'); w2.drawImage(offB,0,0);
var rg=w2.createRadialGradient(1950.79-OX,1038.38-OY,0,1950.79-OX,1038.38-OY,210); rg.addColorStop(0,'rgba(255,255,255,1)'); rg.addColorStop(0.25,'rgba(255,255,255,0.85)'); rg.addColorStop(0.5,'rgba(255,255,255,0.6)'); rg.addColorStop(0.72,'rgba(255,255,255,0.28)'); rg.addColorStop(1,'rgba(255,255,255,0)');
w2.fillStyle=rg; w2.fillRect(0,0,W,H);
var dc=mk(), d2=dc.getContext('2d'); d2.drawImage(wc,0,0); d2.globalCompositeOperation='destination-in';
var mg=d2.createRadialGradient(1950.79-OX,1038.38-OY,0,1950.79-OX,1038.38-OY,124); mg.addColorStop(0,'rgba(0,0,0,1)'); mg.addColorStop(0.75,'rgba(0,0,0,0.72)'); mg.addColorStop(0.97,'rgba(0,0,0,0.4)'); mg.addColorStop(1,'rgba(0,0,0,0)');
d2.fillStyle=mg; d2.fillRect(0,0,W,H);
ctx.save(); ctx.translate(-OX,-OY); ctx.clip(loc); ctx.drawImage(dc,OX,OY); ctx.restore();
ctx.save(); ctx.translate(-OX,-OY); ctx.clip(tri); ctx.drawImage(wc,OX,OY); ctx.restore();
var fb=document.getElementById('ciefb'); if(fb) fb.style.display='none';
})();
</script>
</body></html>
